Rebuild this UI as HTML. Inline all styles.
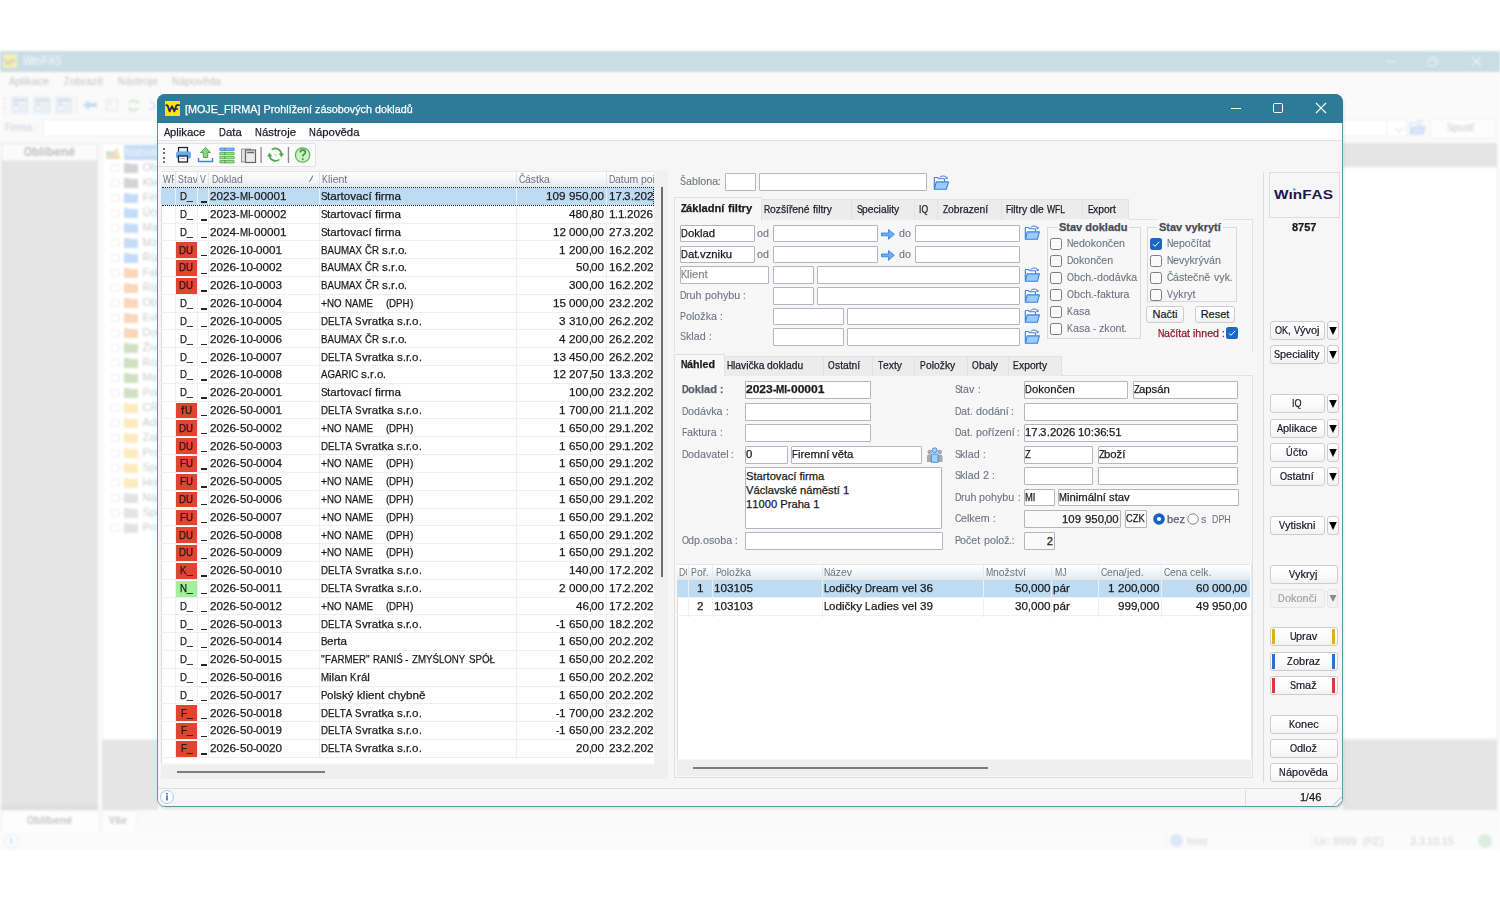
<!DOCTYPE html><html><head><meta charset="utf-8"><style>
*{margin:0;padding:0;box-sizing:content-box}
html,body{width:1500px;height:900px;overflow:hidden;background:#fff}
body{position:relative;font-family:"Liberation Sans",sans-serif;font-size:11.5px;color:#1a1a1a;font-kerning:none}
div{position:absolute}
.t{white-space:nowrap;-webkit-text-stroke:0.25px currentColor}
.inp{-webkit-text-stroke:0.25px currentColor;background:#fff;border:1px solid #b3b6bd;border-radius:1px;white-space:nowrap;overflow:hidden;padding-left:0;font-size:11.2px}
.btn{-webkit-text-stroke:0.2px currentColor;background:linear-gradient(#ffffff,#fbfbfb 60%,#f1f1f1);border:1px solid #cdcdcd;border-radius:3px;text-align:center;white-space:nowrap;color:#15152a}
.lbl{color:#737784}
.bg .t{-webkit-text-stroke:0}
</style></head><body>
<div class="bg" style="left:0;top:0;width:1500px;height:900px;filter:blur(0.8px)">
<div style="left:0px;top:51px;width:1500px;height:799px;background:#fafafa"></div>
<div style="left:0px;top:51px;width:1500px;height:21px;background:#c9dde5"></div>
<div style="left:3px;top:54px;width:14px;height:14px;background:#f6eeb8"></div>
<div style="left:3px;top:54px;width:14px;height:14px"><svg width="14" height="14"><path d="M1.5 5 L3.5 10 L5.5 7 L7 10 L9 5 M8.5 5.5 H12.5 M9.3 7.6 H11.8" stroke="#d9d3b5" stroke-width="1.7" fill="none"/></svg></div>
<div class="t" style="left:22.5px;top:51px;height:21px;line-height:21px;color:#f7fafc;font-size:12px"><span style="display:inline-block;white-space:pre;transform:scaleX(0.843);transform-origin:0 0;margin-right:-0.1478em">W</span><span style="display:inline-block;white-space:pre;transform:scaleX(1.012);transform-origin:0 0;margin-right:0.0097em">in</span><span style="display:inline-block;white-space:pre;transform:scaleX(0.843);transform-origin:0 0;margin-right:-0.3046em">FAS</span></div>
<div style="left:1386px;top:61px;width:10px;height:1px;background:#eef4f7"></div>
<div style="left:1427px;top:56px;width:12px;height:12px"><svg width="12" height="12"><rect x="1.5" y="3.5" width="7" height="7" rx="1.5" fill="none" stroke="#eef4f7"/><path d="M3.5 1.5 H8.5 Q10.5 1.5 10.5 3.5 V8.5" fill="none" stroke="#eef4f7"/></svg></div>
<div style="left:1471px;top:56px;width:11px;height:11px"><svg width="11" height="11"><path d="M1 1 L10 10 M10 1 L1 10" stroke="#eef4f7" stroke-width="1.1"/></svg></div>
<div class="t" style="left:9px;top:72px;height:18px;line-height:18px;color:#c4c4c4;font-size:10.8px"><span style="display:inline-block;white-space:pre;transform:scaleX(0.843);transform-origin:0 0;margin-right:-0.1045em">A</span><span style="display:inline-block;white-space:pre;transform:scaleX(1.012);transform-origin:0 0;margin-right:0.0389em">plikace</span></div>
<div class="t" style="left:64px;top:72px;height:18px;line-height:18px;color:#c4c4c4;font-size:10.8px"><span style="display:inline-block;white-space:pre;transform:scaleX(0.843);transform-origin:0 0;margin-right:-0.0957em">Z</span><span style="display:inline-block;white-space:pre;transform:scaleX(1.012);transform-origin:0 0;margin-right:0.0375em">obrazit</span></div>
<div class="t" style="left:118px;top:72px;height:18px;line-height:18px;color:#c4c4c4;font-size:10.8px"><span style="display:inline-block;white-space:pre;transform:scaleX(0.843);transform-origin:0 0;margin-right:-0.1131em">N</span><span style="display:inline-block;white-space:pre;transform:scaleX(1.012);transform-origin:0 0;margin-right:0.0375em">ástroje</span></div>
<div class="t" style="left:172px;top:72px;height:18px;line-height:18px;color:#c4c4c4;font-size:10.8px"><span style="display:inline-block;white-space:pre;transform:scaleX(0.843);transform-origin:0 0;margin-right:-0.1131em">N</span><span style="display:inline-block;white-space:pre;transform:scaleX(1.012);transform-origin:0 0;margin-right:0.0480em">ápověda</span></div>
<div style="left:4px;top:98.0px;width:1.5px;height:1.5px;background:#e2e2e2"></div>
<div style="left:4px;top:102.5px;width:1.5px;height:1.5px;background:#e2e2e2"></div>
<div style="left:4px;top:107.0px;width:1.5px;height:1.5px;background:#e2e2e2"></div>
<div style="left:4px;top:111.5px;width:1.5px;height:1.5px;background:#e2e2e2"></div>
<div style="left:11px;top:96px;width:18px;height:18px;background:#eaf1f9"></div>
<div style="left:13px;top:99px;width:14px;height:12px"><svg width="14" height="12"><rect x="0.5" y="0.5" width="13" height="11" fill="#f4f7fb" stroke="#e3e6ea"/><rect x="0.5" y="0.5" width="13" height="2" fill="#d7d9dc"/><rect x="2" y="4" width="3" height="3" fill="#c9dcf4"/><rect x="6" y="5" width="6" height="5" fill="#e6edf6"/></svg></div>
<div style="left:33px;top:96px;width:18px;height:18px;background:#eaf1f9"></div>
<div style="left:35px;top:99px;width:14px;height:12px"><svg width="14" height="12"><rect x="0.5" y="0.5" width="13" height="11" fill="#f4f7fb" stroke="#e3e6ea"/><rect x="0.5" y="0.5" width="13" height="2" fill="#d7d9dc"/><rect x="2" y="4" width="3" height="3" fill="#c9dcf4"/><rect x="6" y="5" width="6" height="5" fill="#e6edf6"/></svg></div>
<div style="left:55px;top:96px;width:18px;height:18px;background:#eaf1f9"></div>
<div style="left:57px;top:99px;width:14px;height:12px"><svg width="14" height="12"><rect x="0.5" y="0.5" width="13" height="11" fill="#f4f7fb" stroke="#e3e6ea"/><rect x="0.5" y="0.5" width="13" height="2" fill="#d7d9dc"/><rect x="2" y="4" width="3" height="3" fill="#c9dcf4"/><rect x="6" y="5" width="6" height="5" fill="#e6edf6"/></svg></div>
<div style="left:76px;top:97px;width:1px;height:17px;background:#e6e6e6"></div>
<div style="left:82px;top:99px;width:16px;height:12px"><svg width="16" height="12"><path d="M1 6 L7 1 V4 H15 V8 H7 V11 Z" fill="#c6dcf6"/></svg></div>
<div style="left:105px;top:98px;width:14px;height:14px"><svg width="14" height="14"><rect x="1.5" y="1.5" width="11" height="11" fill="none" stroke="#e6e6e6"/><path d="M4 5 L7 8 M4 5 H6" stroke="#dedede"/></svg></div>
<div style="left:126px;top:98px;width:15px;height:15px"><svg width="15" height="15"><path d="M3 5 A5.5 5.5 0 0 1 12.5 5.5 M12 10 A5.5 5.5 0 0 1 2.5 9.5" fill="none" stroke="#cfe8cc" stroke-width="1.8"/></svg></div>
<div style="left:148px;top:98px;width:10px;height:15px"><svg width="10" height="15"><path d="M2 3 L8 8 M2 12 L8 8" stroke="#cfdff3" stroke-width="1.6"/></svg></div>
<div class="t" style="left:5px;top:118px;height:18px;line-height:18px;color:#c9cdd8;font-size:10.8px"><span style="display:inline-block;white-space:pre;transform:scaleX(0.843);transform-origin:0 0;margin-right:-0.0957em">F</span><span style="display:inline-block;white-space:pre;transform:scaleX(1.012);transform-origin:0 0;margin-right:0.0243em">irma</span><span style="white-space:pre"> </span><span style="display:inline-block;white-space:pre;transform:scaleX(0.897);transform-origin:0 0;margin-right:-0.0287em">:</span></div>
<div style="left:43px;top:119px;width:1362px;height:16px;background:#fff;border:1px solid #eeeeee"></div>
<div style="left:1386px;top:120px;width:18px;height:15px;border-left:1px solid #eeeeee"></div>
<div style="left:1394px;top:124px;width:10px;height:8px"><svg width="10" height="8"><path d="M1 2 L5 6 L9 2" fill="none" stroke="#dcdcdc" stroke-width="1"/></svg></div>
<div style="left:1409px;top:119px;width:17px;height:17px"><svg width="17" height="17"><path d="M1.5 14.5 V4 H5.5 L7 5.5 H12 V8" fill="#fff" stroke="#c9dcf3" stroke-width="1.2"/><path d="M1.5 15 L3.5 8 H16 L14 15 Z" fill="#d6e8fb" stroke="#c2d8f2" stroke-width="1.2"/><path d="M8 3 Q11 0 14 2.5" fill="none" stroke="#c2d8f2"/></svg></div>
<div style="left:1430px;top:118px;width:64px;height:19px;background:#fdfdfd;border:1px solid #f0f0f0;border-radius:3px"></div>
<div class="t" style="left:1447px;top:118px;height:19px;line-height:19px;color:#c9c9c9;font-size:10.8px"><span style="display:inline-block;white-space:pre;transform:scaleX(0.843);transform-origin:0 0;margin-right:-0.1045em">S</span><span style="display:inline-block;white-space:pre;transform:scaleX(1.012);transform-origin:0 0;margin-right:0.0248em">pusť</span></div>
<div style="left:1px;top:143px;width:97px;height:667px;background:#e5e5e5"></div>
<div style="left:1px;top:805px;width:97px;height:4px;background:#dddddd"></div>
<div style="left:2px;top:144px;width:95px;height:16px;background:#fbfbfb;border-bottom:1px solid #efefef"></div>
<div class="t" style="left:1px;top:143px;width:97px;height:18px;line-height:18px;text-align:center;color:#bdbdbd;font-weight:bold;font-size:12.2px"><span style="display:inline-block;white-space:pre;transform:scaleX(0.843);transform-origin:0 0;margin-right:-0.1218em">O</span><span style="display:inline-block;white-space:pre;transform:scaleX(1.012);transform-origin:0 0;margin-right:0.0438em">blíbené</span></div>
<div style="left:102px;top:143px;width:56px;height:595px;background:#fff;border:1px solid #f2f2f2"></div>
<div style="left:102px;top:740px;width:56px;height:70px;background:#e5e5e5"></div>
<div style="left:105px;top:146px;width:18px;height:14px"><svg width="18" height="14"><path d="M1 13 V5 H9 L12 1 L16 13 Z" fill="#f9e6b0"/><rect x="1" y="6" width="9" height="2" fill="#c4dcf2"/><rect x="1" y="8.5" width="9" height="2" fill="#cfe6c9"/><rect x="1" y="11" width="12" height="2" fill="#f7d3b5"/></svg></div>
<div style="left:124px;top:145px;width:34px;height:15px;background:#c5dcf5"></div>
<div class="t" style="left:125px;top:145px;height:15px;line-height:15px;color:#f3f8fd;font-size:11.5px"><span style="display:inline-block;white-space:pre;transform:scaleX(0.843);transform-origin:0 0;margin-right:-0.1131em">N</span><span style="display:inline-block;white-space:pre;transform:scaleX(1.012);transform-origin:0 0;margin-right:0.0375em">abídka</span></div>
<div style="left:110.5px;top:164.0px;width:6px;height:6px;border:1px solid #eeeeee"></div>
<div style="left:118px;top:167.5px;width:5px;height:1px;background:#f0f0f0"></div>
<div style="left:124px;top:162.5px;width:5px;height:2px;background:#d3d3d3"></div>
<div style="left:124px;top:164.0px;width:14px;height:9px;background:#d3d3d3"></div>
<div class="t" style="left:142.5px;top:160.0px;height:15px;line-height:15px;color:#cbcbcb;font-size:11px">Oblíbené</div>
<div style="left:110.5px;top:179.0px;width:6px;height:6px;border:1px solid #eeeeee"></div>
<div style="left:118px;top:182.5px;width:5px;height:1px;background:#f0f0f0"></div>
<div style="left:124px;top:177.5px;width:5px;height:2px;background:#d3d3d3"></div>
<div style="left:124px;top:179.0px;width:14px;height:9px;background:#d3d3d3"></div>
<div class="t" style="left:142.5px;top:175.0px;height:15px;line-height:15px;color:#cbcbcb;font-size:11px">Klienti</div>
<div style="left:110.5px;top:194.0px;width:6px;height:6px;border:1px solid #eeeeee"></div>
<div style="left:118px;top:197.5px;width:5px;height:1px;background:#f0f0f0"></div>
<div style="left:124px;top:192.5px;width:5px;height:2px;background:#c4dcf8"></div>
<div style="left:124px;top:194.0px;width:14px;height:9px;background:#c4dcf8"></div>
<div class="t" style="left:142.5px;top:190.0px;height:15px;line-height:15px;color:#cbcbcb;font-size:11px">Finance</div>
<div style="left:110.5px;top:209.0px;width:6px;height:6px;border:1px solid #eeeeee"></div>
<div style="left:118px;top:212.5px;width:5px;height:1px;background:#f0f0f0"></div>
<div style="left:124px;top:207.5px;width:5px;height:2px;background:#c4dcf8"></div>
<div style="left:124px;top:209.0px;width:14px;height:9px;background:#c4dcf8"></div>
<div class="t" style="left:142.5px;top:205.0px;height:15px;line-height:15px;color:#cbcbcb;font-size:11px">Účetnictví</div>
<div style="left:110.5px;top:224.0px;width:6px;height:6px;border:1px solid #eeeeee"></div>
<div style="left:118px;top:227.5px;width:5px;height:1px;background:#f0f0f0"></div>
<div style="left:124px;top:222.5px;width:5px;height:2px;background:#c4dcf8"></div>
<div style="left:124px;top:224.0px;width:14px;height:9px;background:#c4dcf8"></div>
<div class="t" style="left:142.5px;top:220.0px;height:15px;line-height:15px;color:#cbcbcb;font-size:11px">Majetek</div>
<div style="left:110.5px;top:239.0px;width:6px;height:6px;border:1px solid #eeeeee"></div>
<div style="left:118px;top:242.5px;width:5px;height:1px;background:#f0f0f0"></div>
<div style="left:124px;top:237.5px;width:5px;height:2px;background:#c4dcf8"></div>
<div style="left:124px;top:239.0px;width:14px;height:9px;background:#c4dcf8"></div>
<div class="t" style="left:142.5px;top:235.0px;height:15px;line-height:15px;color:#cbcbcb;font-size:11px">Mzdy</div>
<div style="left:110.5px;top:254.0px;width:6px;height:6px;border:1px solid #eeeeee"></div>
<div style="left:118px;top:257.5px;width:5px;height:1px;background:#f0f0f0"></div>
<div style="left:124px;top:252.5px;width:5px;height:2px;background:#c4dcf8"></div>
<div style="left:124px;top:254.0px;width:14px;height:9px;background:#c4dcf8"></div>
<div class="t" style="left:142.5px;top:250.0px;height:15px;line-height:15px;color:#cbcbcb;font-size:11px">Řízení</div>
<div style="left:110.5px;top:269.0px;width:6px;height:6px;border:1px solid #eeeeee"></div>
<div style="left:118px;top:272.5px;width:5px;height:1px;background:#f0f0f0"></div>
<div style="left:124px;top:267.5px;width:5px;height:2px;background:#fbd6b8"></div>
<div style="left:124px;top:269.0px;width:14px;height:9px;background:#fbd6b8"></div>
<div class="t" style="left:142.5px;top:265.0px;height:15px;line-height:15px;color:#cbcbcb;font-size:11px">Fakturace</div>
<div style="left:110.5px;top:284.0px;width:6px;height:6px;border:1px solid #eeeeee"></div>
<div style="left:118px;top:287.5px;width:5px;height:1px;background:#f0f0f0"></div>
<div style="left:124px;top:282.5px;width:5px;height:2px;background:#fbd6b8"></div>
<div style="left:124px;top:284.0px;width:14px;height:9px;background:#fbd6b8"></div>
<div class="t" style="left:142.5px;top:280.0px;height:15px;line-height:15px;color:#cbcbcb;font-size:11px">Řízení</div>
<div style="left:110.5px;top:299.0px;width:6px;height:6px;border:1px solid #eeeeee"></div>
<div style="left:118px;top:302.5px;width:5px;height:1px;background:#f0f0f0"></div>
<div style="left:124px;top:297.5px;width:5px;height:2px;background:#fbd6b8"></div>
<div style="left:124px;top:299.0px;width:14px;height:9px;background:#fbd6b8"></div>
<div class="t" style="left:142.5px;top:295.0px;height:15px;line-height:15px;color:#cbcbcb;font-size:11px">Obchod</div>
<div style="left:110.5px;top:314.0px;width:6px;height:6px;border:1px solid #eeeeee"></div>
<div style="left:118px;top:317.5px;width:5px;height:1px;background:#f0f0f0"></div>
<div style="left:124px;top:312.5px;width:5px;height:2px;background:#fbd6b8"></div>
<div style="left:124px;top:314.0px;width:14px;height:9px;background:#fbd6b8"></div>
<div class="t" style="left:142.5px;top:310.0px;height:15px;line-height:15px;color:#cbcbcb;font-size:11px">Evidence</div>
<div style="left:110.5px;top:329.0px;width:6px;height:6px;border:1px solid #eeeeee"></div>
<div style="left:118px;top:332.5px;width:5px;height:1px;background:#f0f0f0"></div>
<div style="left:124px;top:327.5px;width:5px;height:2px;background:#fbd6b8"></div>
<div style="left:124px;top:329.0px;width:14px;height:9px;background:#fbd6b8"></div>
<div class="t" style="left:142.5px;top:325.0px;height:15px;line-height:15px;color:#cbcbcb;font-size:11px">Doklady</div>
<div style="left:110.5px;top:344.0px;width:6px;height:6px;border:1px solid #eeeeee"></div>
<div style="left:118px;top:347.5px;width:5px;height:1px;background:#f0f0f0"></div>
<div style="left:124px;top:342.5px;width:5px;height:2px;background:#cfe0bf"></div>
<div style="left:124px;top:344.0px;width:14px;height:9px;background:#cfe0bf"></div>
<div class="t" style="left:142.5px;top:340.0px;height:15px;line-height:15px;color:#cbcbcb;font-size:11px">Živnost</div>
<div style="left:110.5px;top:359.0px;width:6px;height:6px;border:1px solid #eeeeee"></div>
<div style="left:118px;top:362.5px;width:5px;height:1px;background:#f0f0f0"></div>
<div style="left:124px;top:357.5px;width:5px;height:2px;background:#cfe0bf"></div>
<div style="left:124px;top:359.0px;width:14px;height:9px;background:#cfe0bf"></div>
<div class="t" style="left:142.5px;top:355.0px;height:15px;line-height:15px;color:#cbcbcb;font-size:11px">Rozpočet</div>
<div style="left:110.5px;top:374.0px;width:6px;height:6px;border:1px solid #eeeeee"></div>
<div style="left:118px;top:377.5px;width:5px;height:1px;background:#f0f0f0"></div>
<div style="left:124px;top:372.5px;width:5px;height:2px;background:#cfe0bf"></div>
<div style="left:124px;top:374.0px;width:14px;height:9px;background:#cfe0bf"></div>
<div class="t" style="left:142.5px;top:370.0px;height:15px;line-height:15px;color:#cbcbcb;font-size:11px">Mezisklad</div>
<div style="left:110.5px;top:389.0px;width:6px;height:6px;border:1px solid #eeeeee"></div>
<div style="left:118px;top:392.5px;width:5px;height:1px;background:#f0f0f0"></div>
<div style="left:124px;top:387.5px;width:5px;height:2px;background:#cfe0bf"></div>
<div style="left:124px;top:389.0px;width:14px;height:9px;background:#cfe0bf"></div>
<div class="t" style="left:142.5px;top:385.0px;height:15px;line-height:15px;color:#cbcbcb;font-size:11px">Pokladna</div>
<div style="left:110.5px;top:404.0px;width:6px;height:6px;border:1px solid #eeeeee"></div>
<div style="left:118px;top:407.5px;width:5px;height:1px;background:#f0f0f0"></div>
<div style="left:124px;top:402.5px;width:5px;height:2px;background:#fcebbd"></div>
<div style="left:124px;top:404.0px;width:14px;height:9px;background:#fcebbd"></div>
<div class="t" style="left:142.5px;top:400.0px;height:15px;line-height:15px;color:#cbcbcb;font-size:11px">CRM</div>
<div style="left:110.5px;top:419.0px;width:6px;height:6px;border:1px solid #eeeeee"></div>
<div style="left:118px;top:422.5px;width:5px;height:1px;background:#f0f0f0"></div>
<div style="left:124px;top:417.5px;width:5px;height:2px;background:#fcebbd"></div>
<div style="left:124px;top:419.0px;width:14px;height:9px;background:#fcebbd"></div>
<div class="t" style="left:142.5px;top:415.0px;height:15px;line-height:15px;color:#cbcbcb;font-size:11px">Adresář</div>
<div style="left:110.5px;top:434.0px;width:6px;height:6px;border:1px solid #eeeeee"></div>
<div style="left:118px;top:437.5px;width:5px;height:1px;background:#f0f0f0"></div>
<div style="left:124px;top:432.5px;width:5px;height:2px;background:#fcebbd"></div>
<div style="left:124px;top:434.0px;width:14px;height:9px;background:#fcebbd"></div>
<div class="t" style="left:142.5px;top:430.0px;height:15px;line-height:15px;color:#cbcbcb;font-size:11px">Zakázky</div>
<div style="left:110.5px;top:449.0px;width:6px;height:6px;border:1px solid #eeeeee"></div>
<div style="left:118px;top:452.5px;width:5px;height:1px;background:#f0f0f0"></div>
<div style="left:124px;top:447.5px;width:5px;height:2px;background:#fcebbd"></div>
<div style="left:124px;top:449.0px;width:14px;height:9px;background:#fcebbd"></div>
<div class="t" style="left:142.5px;top:445.0px;height:15px;line-height:15px;color:#cbcbcb;font-size:11px">Projekty</div>
<div style="left:110.5px;top:464.0px;width:6px;height:6px;border:1px solid #eeeeee"></div>
<div style="left:118px;top:467.5px;width:5px;height:1px;background:#f0f0f0"></div>
<div style="left:124px;top:462.5px;width:5px;height:2px;background:#fcebbd"></div>
<div style="left:124px;top:464.0px;width:14px;height:9px;background:#fcebbd"></div>
<div class="t" style="left:142.5px;top:460.0px;height:15px;line-height:15px;color:#cbcbcb;font-size:11px">Speciality</div>
<div style="left:110.5px;top:479.0px;width:6px;height:6px;border:1px solid #eeeeee"></div>
<div style="left:118px;top:482.5px;width:5px;height:1px;background:#f0f0f0"></div>
<div style="left:124px;top:477.5px;width:5px;height:2px;background:#fcebbd"></div>
<div style="left:124px;top:479.0px;width:14px;height:9px;background:#fcebbd"></div>
<div class="t" style="left:142.5px;top:475.0px;height:15px;line-height:15px;color:#cbcbcb;font-size:11px">Holding</div>
<div style="left:110.5px;top:494.0px;width:6px;height:6px;border:1px solid #eeeeee"></div>
<div style="left:118px;top:497.5px;width:5px;height:1px;background:#f0f0f0"></div>
<div style="left:124px;top:492.5px;width:5px;height:2px;background:#e3e3e3"></div>
<div style="left:124px;top:494.0px;width:14px;height:9px;background:#e3e3e3"></div>
<div class="t" style="left:142.5px;top:490.0px;height:15px;line-height:15px;color:#cbcbcb;font-size:11px">Nástroje</div>
<div style="left:110.5px;top:509.0px;width:6px;height:6px;border:1px solid #eeeeee"></div>
<div style="left:118px;top:512.5px;width:5px;height:1px;background:#f0f0f0"></div>
<div style="left:124px;top:507.5px;width:5px;height:2px;background:#e3e3e3"></div>
<div style="left:124px;top:509.0px;width:14px;height:9px;background:#e3e3e3"></div>
<div class="t" style="left:142.5px;top:505.0px;height:15px;line-height:15px;color:#cbcbcb;font-size:11px">Správa</div>
<div style="left:110.5px;top:524.0px;width:6px;height:6px;border:1px solid #eeeeee"></div>
<div style="left:118px;top:527.5px;width:5px;height:1px;background:#f0f0f0"></div>
<div style="left:124px;top:522.5px;width:5px;height:2px;background:#e3e3e3"></div>
<div style="left:124px;top:524.0px;width:14px;height:9px;background:#e3e3e3"></div>
<div class="t" style="left:142.5px;top:520.0px;height:15px;line-height:15px;color:#cbcbcb;font-size:11px">Program</div>
<div style="left:1343px;top:143px;width:154px;height:24px;background:#e4e4e4"></div>
<div style="left:1343px;top:168px;width:154px;height:570px;background:#fff;border-right:1px solid #efefef;border-bottom:1px solid #efefef"></div>
<div style="left:1343px;top:740px;width:154px;height:70px;background:#e4e4e4"></div>
<div style="left:1px;top:810px;width:97px;height:21px;background:#fdfdfd;border:1px solid #efefef"></div>
<div class="t" style="left:1px;top:810px;width:97px;height:20px;line-height:20px;text-align:center;color:#c6c6c6;font-weight:bold;font-size:10.8px"><span style="display:inline-block;white-space:pre;transform:scaleX(0.843);transform-origin:0 0;margin-right:-0.1218em">O</span><span style="display:inline-block;white-space:pre;transform:scaleX(1.012);transform-origin:0 0;margin-right:0.0438em">blíbené</span></div>
<div style="left:102px;top:810px;width:33px;height:21px;background:#fdfdfd;border:1px solid #f3f3f3"></div>
<div class="t" style="left:102px;top:810px;width:33px;height:20px;line-height:20px;text-align:center;color:#c6c6c6;font-weight:bold;font-size:10.8px"><span style="display:inline-block;white-space:pre;transform:scaleX(0.843);transform-origin:0 0;margin-right:-0.1045em">V</span><span style="display:inline-block;white-space:pre;transform:scaleX(1.012);transform-origin:0 0;margin-right:0.0139em">še</span></div>
<div style="left:0px;top:832px;width:1500px;height:18px;background:#fbfbfb"></div>
<div style="left:4px;top:834px;width:13px;height:13px;border:1px solid #e6eef9;border-radius:50%"></div>
<div style="left:10px;top:838px;width:2px;height:6px;background:#d6e2f3"></div>
<div style="left:1170px;top:834px;width:13px;height:13px;background:#dbe8f8;border-radius:50%"></div>
<div class="t" style="left:1187px;top:832px;height:18px;line-height:18px;color:#cfd3db;font-size:10.5px"><span style="display:inline-block;white-space:pre;transform:scaleX(1.012);transform-origin:0 0;margin-right:0.0236em">host</span></div>
<div style="left:1166px;top:833px;width:1px;height:17px;background:#f0f0f0"></div>
<div style="left:1311px;top:833px;width:1px;height:17px;background:#f0f0f0"></div>
<div class="t" style="left:1315px;top:832px;height:18px;line-height:18px;color:#d3d3d3;font-size:10.5px"><span style="display:inline-block;white-space:pre;transform:scaleX(0.843);transform-origin:0 0;margin-right:-0.0871em">L</span><span style="display:inline-block;white-space:pre;transform:scaleX(1.012);transform-origin:0 0;margin-right:0.0090em">ic</span><span style="display:inline-block;white-space:pre;transform:scaleX(0.897);transform-origin:0 0;margin-right:-0.0287em">:</span><span style="white-space:pre"> </span><span style="display:inline-block;white-space:pre;transform:scaleX(1.018);transform-origin:0 0;margin-right:0.0405em">9999</span><span style="white-space:pre">  </span><span style="display:inline-block;white-space:pre;transform:scaleX(0.897);transform-origin:0 0;margin-right:-0.0344em">(</span><span style="display:inline-block;white-space:pre;transform:scaleX(0.843);transform-origin:0 0;margin-right:-0.1045em">P</span><span style="display:inline-block;white-space:pre;transform:scaleX(0.897);transform-origin:0 0;margin-right:-0.0287em">/</span><span style="display:inline-block;white-space:pre;transform:scaleX(0.843);transform-origin:0 0;margin-right:-0.0957em">Z</span><span style="display:inline-block;white-space:pre;transform:scaleX(0.897);transform-origin:0 0;margin-right:-0.0344em">)</span></div>
<div class="t" style="left:1410px;top:832px;height:18px;line-height:18px;color:#d3d3d3;font-size:10.5px"><span style="display:inline-block;white-space:pre;transform:scaleX(1.018);transform-origin:0 0;margin-right:0.0101em">3</span><span style="display:inline-block;white-space:pre;transform:scaleX(0.897);transform-origin:0 0;margin-right:-0.0287em">.</span><span style="display:inline-block;white-space:pre;transform:scaleX(1.018);transform-origin:0 0;margin-right:0.0101em">3</span><span style="display:inline-block;white-space:pre;transform:scaleX(0.897);transform-origin:0 0;margin-right:-0.0287em">.</span><span style="display:inline-block;white-space:pre;transform:scaleX(1.018);transform-origin:0 0;margin-right:0.0202em">10</span><span style="display:inline-block;white-space:pre;transform:scaleX(0.897);transform-origin:0 0;margin-right:-0.0287em">.</span><span style="display:inline-block;white-space:pre;transform:scaleX(1.018);transform-origin:0 0;margin-right:0.0202em">15</span></div>
<div style="left:1478px;top:834px;width:14px;height:14px;background:#dceee3;border-radius:50%"></div>
</div>
<div style="left:157px;top:94px;width:1183.5px;height:711px;background:#f6f6f6;border:1.3px solid #5d97ae;border-radius:8px;box-shadow:1px 2px 3px rgba(0,0,0,0.10)"></div>
<div style="left:157px;top:94px;width:1186px;height:29px;background:#2e7b99;border-radius:8px 8px 0 0"></div>
<div style="left:165px;top:101px;width:15px;height:15px;background:#fde312"><svg width="15" height="15" viewBox="0 0 15 15"><path d="M1.3 4.3 Q2.2 3.8 2.8 5 L4.6 10.4 L7 5.2 L9.3 10.4 L11.2 4.8 Q11.5 4.2 12.3 4.2 H14" stroke="#2b2450" stroke-width="1.8" fill="none" stroke-linejoin="round" stroke-linecap="round"/><path d="M10.6 7.9 H12.6" stroke="#2b2450" stroke-width="1.5" stroke-linecap="round"/></svg></div>
<div class="t" style="left:185px;top:94.8px;height:27px;line-height:27px;color:#fff;font-size:11.6px"><span style="display:inline-block;transform:scaleX(0.930);transform-origin:0 0">[MOJE_FIRMA] Prohlížení zásobových dokladů</span></div>
<div style="left:1231px;top:108px;width:10px;height:1px;background:#fff"></div>
<div style="left:1273px;top:103px;width:8px;height:8px;border:1px solid #fff;border-radius:1.5px"></div>
<div style="left:1315px;top:102px;width:12px;height:12px"><svg width="12" height="12"><path d="M1 1 L11 11 M11 1 L1 11" stroke="#fff" stroke-width="1.1"/></svg></div>
<div style="left:158px;top:123px;width:1184px;height:17px;background:#fff;border-bottom:1px solid #e4e4e4"></div>
<div class="t" style="left:164px;top:123px;height:18px;line-height:18px;color:#1c1c2c;font-size:11.2px"><span style="display:inline-block;white-space:pre;transform:scaleX(0.843);transform-origin:0 0;margin-right:-0.1045em">A</span><span style="display:inline-block;white-space:pre;transform:scaleX(1.012);transform-origin:0 0;margin-right:0.0389em">plikace</span></div>
<div class="t" style="left:219px;top:123px;height:18px;line-height:18px;color:#1c1c2c;font-size:11.2px"><span style="display:inline-block;white-space:pre;transform:scaleX(0.843);transform-origin:0 0;margin-right:-0.1131em">D</span><span style="display:inline-block;white-space:pre;transform:scaleX(1.012);transform-origin:0 0;margin-right:0.0174em">ata</span></div>
<div class="t" style="left:255px;top:123px;height:18px;line-height:18px;color:#1c1c2c;font-size:11.2px"><span style="display:inline-block;white-space:pre;transform:scaleX(0.843);transform-origin:0 0;margin-right:-0.1131em">N</span><span style="display:inline-block;white-space:pre;transform:scaleX(1.012);transform-origin:0 0;margin-right:0.0375em">ástroje</span></div>
<div class="t" style="left:309px;top:123px;height:18px;line-height:18px;color:#1c1c2c;font-size:11.2px"><span style="display:inline-block;white-space:pre;transform:scaleX(0.843);transform-origin:0 0;margin-right:-0.1131em">N</span><span style="display:inline-block;white-space:pre;transform:scaleX(1.012);transform-origin:0 0;margin-right:0.0480em">ápověda</span></div>
<div style="left:158px;top:143px;width:157px;height:22px;background:#fbfbfb;border:1px solid #e2e2e2;border-radius:0 3px 3px 0;border-left:none"></div>
<div style="left:162.5px;top:147.5px;width:2px;height:2px;background:#6f6f6f"></div>
<div style="left:162.5px;top:152px;width:2px;height:2px;background:#6f6f6f"></div>
<div style="left:162.5px;top:156.5px;width:2px;height:2px;background:#6f6f6f"></div>
<div style="left:162.5px;top:161px;width:2px;height:2px;background:#6f6f6f"></div>
<div style="left:175px;top:146px;width:140px;height:18px"><svg width="140" height="18" viewBox="0 0 140 18">
<rect x="3.5" y="1.5" width="9" height="5" fill="#dff0ff" stroke="#222" stroke-width="1.2"/>
<rect x="1" y="5.5" width="15" height="7" rx="2" fill="#6aaaf0"/>
<rect x="3.5" y="10" width="9" height="6" fill="#fff" stroke="#222" stroke-width="1.3"/>
<path d="M5 12.5 H10" stroke="#8cc4f4" stroke-width="1"/>
<path d="M30.5 1.5 L25.5 6.5 H28.3 V11.5 H32.7 V6.5 H35.5 Z" fill="#8fd08a" stroke="#4caa47" stroke-width="1"/>
<path d="M23.5 12 V15.5 H37.5 V12" fill="none" stroke="#3b86e0" stroke-width="1.4"/>
<rect x="44.8" y="2.1" width="14.4" height="2.4" rx="0.4" fill="#86baf4" stroke="#3f83e0" stroke-width="0.8"/>
<rect x="44.8" y="6.3" width="14.4" height="2.4" rx="0.4" fill="#a3dc9b" stroke="#4ba644" stroke-width="0.8"/>
<rect x="44.8" y="10.4" width="14.4" height="2.4" rx="0.4" fill="#a3dc9b" stroke="#4ba644" stroke-width="0.8"/>
<rect x="44.8" y="14.5" width="14.4" height="2.4" rx="0.4" fill="#a3dc9b" stroke="#4ba644" stroke-width="0.8"/>
<path d="M49.8 2.1 V4.5 M49.8 6.3 V8.7 M49.8 10.4 V12.8 M49.8 14.5 V16.9" stroke="#3b7a36" stroke-width="0.7"/>
<rect x="66.5" y="3" width="9" height="13" fill="#e0e0e0" stroke="#999" stroke-width="1"/>
<rect x="70.5" y="4" width="10" height="12.5" fill="#ececec" stroke="#666" stroke-width="1.2"/>
<path d="M72 6.5 H79" stroke="#666" stroke-width="1.5"/>
<rect x="85.4" y="1" width="1.3" height="16" fill="#8a8a8a"/>
<path d="M97.4 3.3 A6 6 0 0 1 106.4 8.2" fill="none" stroke="#52a84c" stroke-width="1.7" stroke-linecap="round"/>
<path d="M103.8 13.9 A6 6 0 0 1 94.6 9.8" fill="none" stroke="#52a84c" stroke-width="1.7" stroke-linecap="round"/>
<path d="M103.7 7.6 H109.1 L106.4 11.2 Z M91.9 10.4 H97.3 L94.6 6.8 Z" fill="#52a84c"/>
<circle cx="100.6" cy="9" r="1.6" fill="#c6eec1"/>
<rect x="112.8" y="1" width="1.3" height="16" fill="#8a8a8a"/>
<circle cx="127.6" cy="9" r="7.2" fill="#cdf0c8" stroke="#5cae56" stroke-width="1.2"/>
<path d="M125.2 6.6 Q125.2 4 127.7 4 Q130.3 4 130.3 6.3 Q130.3 7.6 128.9 8.4 Q127.8 9 127.8 10.6" fill="none" stroke="#4b9e45" stroke-width="1.8"/><circle cx="127.8" cy="13" r="1.1" fill="#4b9e45"/>
</svg></div>
<div style="left:161px;top:171px;width:493px;height:592px;background:#fff;border-left:1px solid #dcdcdc"></div>
<div style="left:654px;top:171px;width:14px;height:594px;background:#f0f0f0"></div>
<div style="left:661px;top:187px;width:2px;height:390px;background:#6e6e6e"></div>
<div style="left:161px;top:171px;width:493px;height:17px;background:linear-gradient(#ffffff,#f6f7f9 40%,#dfe5eb);border-top:1px solid #e6e6e6"></div>
<div style="left:174.7px;top:172px;width:1px;height:16px;background:#e3e5e8"></div>
<div style="left:197.3px;top:172px;width:1px;height:16px;background:#e3e5e8"></div>
<div style="left:208.4px;top:172px;width:1px;height:16px;background:#e3e5e8"></div>
<div style="left:319px;top:172px;width:1px;height:16px;background:#e3e5e8"></div>
<div style="left:516px;top:172px;width:1px;height:16px;background:#e3e5e8"></div>
<div style="left:605.5px;top:172px;width:1px;height:16px;background:#e3e5e8"></div>
<div style="left:161px;top:172px;width:13.199999999999989px;height:16px;overflow:hidden"><div class="t" style="left:2px;top:0;height:16px;line-height:16px;color:#70737c;font-size:10.3px;-webkit-text-stroke:0"><span style="display:inline-block;white-space:pre;transform:scaleX(0.843);transform-origin:0 0;margin-right:-0.2435em">WF</span></div></div>
<div style="left:174.7px;top:172px;width:22.100000000000023px;height:16px;overflow:hidden"><div class="t" style="left:3.8000000000000114px;top:0;height:16px;line-height:16px;color:#70737c;font-size:10.3px;-webkit-text-stroke:0"><span style="display:inline-block;white-space:pre;transform:scaleX(0.843);transform-origin:0 0;margin-right:-0.1045em">S</span><span style="display:inline-block;white-space:pre;transform:scaleX(1.012);transform-origin:0 0;margin-right:0.0167em">tav</span></div></div>
<div style="left:197.3px;top:172px;width:10.599999999999994px;height:16px;overflow:hidden"><div class="t" style="left:3.1999999999999886px;top:0;height:16px;line-height:16px;color:#70737c;font-size:10.3px;-webkit-text-stroke:0"><span style="display:inline-block;white-space:pre;transform:scaleX(0.843);transform-origin:0 0;margin-right:-0.1045em">V</span></div></div>
<div style="left:208.4px;top:172px;width:110.1px;height:16px;overflow:hidden"><div class="t" style="left:3.5999999999999943px;top:0;height:16px;line-height:16px;color:#70737c;font-size:10.3px;-webkit-text-stroke:0"><span style="display:inline-block;white-space:pre;transform:scaleX(0.843);transform-origin:0 0;margin-right:-0.1131em">D</span><span style="display:inline-block;white-space:pre;transform:scaleX(1.012);transform-origin:0 0;margin-right:0.0299em">oklad</span></div></div>
<div style="left:319px;top:172px;width:196.5px;height:16px;overflow:hidden"><div class="t" style="left:3px;top:0;height:16px;line-height:16px;color:#70737c;font-size:10.3px;-webkit-text-stroke:0"><span style="display:inline-block;white-space:pre;transform:scaleX(0.843);transform-origin:0 0;margin-right:-0.1045em">K</span><span style="display:inline-block;white-space:pre;transform:scaleX(1.012);transform-origin:0 0;margin-right:0.0229em">lient</span></div></div>
<div style="left:516px;top:172px;width:89.0px;height:16px;overflow:hidden"><div class="t" style="left:3px;top:0;height:16px;line-height:16px;color:#70737c;font-size:10.3px;-webkit-text-stroke:0"><span style="display:inline-block;white-space:pre;transform:scaleX(0.843);transform-origin:0 0;margin-right:-0.1131em">Č</span><span style="display:inline-block;white-space:pre;transform:scaleX(1.012);transform-origin:0 0;margin-right:0.0299em">ástka</span></div></div>
<div style="left:605.5px;top:172px;width:48.0px;height:16px;overflow:hidden"><div class="t" style="left:3.0px;top:0;height:16px;line-height:16px;color:#70737c;font-size:10.3px;-webkit-text-stroke:0"><span style="display:inline-block;white-space:pre;transform:scaleX(0.843);transform-origin:0 0;margin-right:-0.1131em">D</span><span style="display:inline-block;white-space:pre;transform:scaleX(1.012);transform-origin:0 0;margin-right:0.0278em">atum</span><span style="white-space:pre"> </span><span style="display:inline-block;white-space:pre;transform:scaleX(1.012);transform-origin:0 0;margin-right:0.0452em">pořízení</span></div></div>
<div style="left:308px;top:174px;width:10px;height:10px"><svg width="10" height="10"><path d="M1.5 8 L5 1.5" stroke="#777" stroke-width="1.1"/><path d="M5 1.5 L8.5 8 H2" fill="none" stroke="#ffffff" stroke-width="1"/></svg></div>
<div style="left:161px;top:188.0px;width:493px;height:17.806px;background:#bddcf3"></div>
<div style="left:161px;top:204.806px;width:493px;height:1px;background:#efefef"></div>
<div style="left:161px;top:222.61200000000002px;width:493px;height:1px;background:#efefef"></div>
<div style="left:161px;top:240.418px;width:493px;height:1px;background:#efefef"></div>
<div style="left:161px;top:258.224px;width:493px;height:1px;background:#efefef"></div>
<div style="left:161px;top:276.03px;width:493px;height:1px;background:#efefef"></div>
<div style="left:161px;top:293.83599999999996px;width:493px;height:1px;background:#efefef"></div>
<div style="left:161px;top:311.642px;width:493px;height:1px;background:#efefef"></div>
<div style="left:161px;top:329.448px;width:493px;height:1px;background:#efefef"></div>
<div style="left:161px;top:347.25399999999996px;width:493px;height:1px;background:#efefef"></div>
<div style="left:161px;top:365.06px;width:493px;height:1px;background:#efefef"></div>
<div style="left:161px;top:382.866px;width:493px;height:1px;background:#efefef"></div>
<div style="left:161px;top:400.67199999999997px;width:493px;height:1px;background:#efefef"></div>
<div style="left:161px;top:418.478px;width:493px;height:1px;background:#efefef"></div>
<div style="left:161px;top:436.284px;width:493px;height:1px;background:#efefef"></div>
<div style="left:161px;top:454.09px;width:493px;height:1px;background:#efefef"></div>
<div style="left:161px;top:471.896px;width:493px;height:1px;background:#efefef"></div>
<div style="left:161px;top:489.702px;width:493px;height:1px;background:#efefef"></div>
<div style="left:161px;top:507.508px;width:493px;height:1px;background:#efefef"></div>
<div style="left:161px;top:525.3140000000001px;width:493px;height:1px;background:#efefef"></div>
<div style="left:161px;top:543.1200000000001px;width:493px;height:1px;background:#efefef"></div>
<div style="left:161px;top:560.926px;width:493px;height:1px;background:#efefef"></div>
<div style="left:161px;top:578.7320000000001px;width:493px;height:1px;background:#efefef"></div>
<div style="left:161px;top:596.538px;width:493px;height:1px;background:#efefef"></div>
<div style="left:161px;top:614.344px;width:493px;height:1px;background:#efefef"></div>
<div style="left:161px;top:632.1500000000001px;width:493px;height:1px;background:#efefef"></div>
<div style="left:161px;top:649.9560000000001px;width:493px;height:1px;background:#efefef"></div>
<div style="left:161px;top:667.7620000000001px;width:493px;height:1px;background:#efefef"></div>
<div style="left:161px;top:685.568px;width:493px;height:1px;background:#efefef"></div>
<div style="left:161px;top:703.374px;width:493px;height:1px;background:#efefef"></div>
<div style="left:161px;top:721.1800000000001px;width:493px;height:1px;background:#efefef"></div>
<div style="left:161px;top:738.9860000000001px;width:493px;height:1px;background:#efefef"></div>
<div style="left:161px;top:756.792px;width:493px;height:1px;background:#efefef"></div>
<div style="left:174.7px;top:188px;width:1px;height:569.792px;background:#efefef"></div>
<div style="left:197.3px;top:188px;width:1px;height:569.792px;background:#efefef"></div>
<div style="left:208.4px;top:188px;width:1px;height:569.792px;background:#efefef"></div>
<div style="left:319px;top:188px;width:1px;height:569.792px;background:#efefef"></div>
<div style="left:516px;top:188px;width:1px;height:569.792px;background:#efefef"></div>
<div style="left:605.5px;top:188px;width:1px;height:569.792px;background:#efefef"></div>
<div class="t" style="left:176px;top:188.25px;width:21px;height:17.806px;line-height:17.806px;text-align:center"><span style="display:inline-block;white-space:pre;transform:scaleX(0.843);transform-origin:0 0;margin-right:-0.1131em">D</span><span style="display:inline-block;white-space:pre;transform:scaleX(0.897);transform-origin:0 0;margin-right:-0.0575em">_</span></div>
<div style="left:200.5px;top:201.4px;width:6.3px;height:1.3px;background:#262626"></div>
<div class="t" style="left:210px;top:188.25px;height:17.806px;line-height:17.806px;"><span style="display:inline-block;white-space:pre;transform:scaleX(1.018);transform-origin:0 0;margin-right:0.0405em">2023</span><span style="display:inline-block;white-space:pre;transform:scaleX(0.897);transform-origin:0 0;margin-right:-0.0344em">-</span><span style="display:inline-block;white-space:pre;transform:scaleX(0.843);transform-origin:0 0;margin-right:-0.1740em">MI</span><span style="display:inline-block;white-space:pre;transform:scaleX(0.897);transform-origin:0 0;margin-right:-0.0344em">-</span><span style="display:inline-block;white-space:pre;transform:scaleX(1.018);transform-origin:0 0;margin-right:0.0506em">00001</span></div>
<div class="t" style="left:321px;top:188.25px;width:194px;height:17.806px;line-height:17.806px;overflow:hidden"><span style="display:inline-block;white-space:pre;transform:scaleX(0.843);transform-origin:0 0;margin-right:-0.1045em">S</span><span style="display:inline-block;white-space:pre;transform:scaleX(1.012);transform-origin:0 0;margin-right:0.0479em">tartovací</span><span style="white-space:pre"> </span><span style="display:inline-block;white-space:pre;transform:scaleX(1.012);transform-origin:0 0;margin-right:0.0278em">firma</span></div>
<div class="t" style="right:895.5px;top:188.25px;height:17.806px;line-height:17.806px;text-align:right;"><span style="display:inline-block;white-space:pre;transform:scaleX(1.018);transform-origin:0 0;margin-right:0.0304em">109</span><span style="white-space:pre"> </span><span style="display:inline-block;white-space:pre;transform:scaleX(1.018);transform-origin:0 0;margin-right:0.0304em">950</span><span style="display:inline-block;white-space:pre;transform:scaleX(0.897);transform-origin:0 0;margin-right:-0.0287em">,</span><span style="display:inline-block;white-space:pre;transform:scaleX(1.018);transform-origin:0 0;margin-right:0.0202em">00</span></div>
<div class="t" style="left:608.5px;top:188.25px;width:45.5px;height:17.806px;line-height:17.806px;overflow:hidden"><span style="display:inline-block;white-space:pre;transform:scaleX(1.018);transform-origin:0 0;margin-right:0.0202em">17</span><span style="display:inline-block;white-space:pre;transform:scaleX(0.897);transform-origin:0 0;margin-right:-0.0287em">.</span><span style="display:inline-block;white-space:pre;transform:scaleX(1.018);transform-origin:0 0;margin-right:0.0101em">3</span><span style="display:inline-block;white-space:pre;transform:scaleX(0.897);transform-origin:0 0;margin-right:-0.0287em">.</span><span style="display:inline-block;white-space:pre;transform:scaleX(1.018);transform-origin:0 0;margin-right:0.0304em">202</span></div>
<div class="t" style="left:176px;top:206.056px;width:21px;height:17.806px;line-height:17.806px;text-align:center"><span style="display:inline-block;white-space:pre;transform:scaleX(0.843);transform-origin:0 0;margin-right:-0.1131em">D</span><span style="display:inline-block;white-space:pre;transform:scaleX(0.897);transform-origin:0 0;margin-right:-0.0575em">_</span></div>
<div style="left:200.5px;top:219.20600000000002px;width:6.3px;height:1.3px;background:#262626"></div>
<div class="t" style="left:210px;top:206.056px;height:17.806px;line-height:17.806px;"><span style="display:inline-block;white-space:pre;transform:scaleX(1.018);transform-origin:0 0;margin-right:0.0405em">2023</span><span style="display:inline-block;white-space:pre;transform:scaleX(0.897);transform-origin:0 0;margin-right:-0.0344em">-</span><span style="display:inline-block;white-space:pre;transform:scaleX(0.843);transform-origin:0 0;margin-right:-0.1740em">MI</span><span style="display:inline-block;white-space:pre;transform:scaleX(0.897);transform-origin:0 0;margin-right:-0.0344em">-</span><span style="display:inline-block;white-space:pre;transform:scaleX(1.018);transform-origin:0 0;margin-right:0.0506em">00002</span></div>
<div class="t" style="left:321px;top:206.056px;width:194px;height:17.806px;line-height:17.806px;overflow:hidden"><span style="display:inline-block;white-space:pre;transform:scaleX(0.843);transform-origin:0 0;margin-right:-0.1045em">S</span><span style="display:inline-block;white-space:pre;transform:scaleX(1.012);transform-origin:0 0;margin-right:0.0479em">tartovací</span><span style="white-space:pre"> </span><span style="display:inline-block;white-space:pre;transform:scaleX(1.012);transform-origin:0 0;margin-right:0.0278em">firma</span></div>
<div class="t" style="right:895.5px;top:206.056px;height:17.806px;line-height:17.806px;text-align:right;"><span style="display:inline-block;white-space:pre;transform:scaleX(1.018);transform-origin:0 0;margin-right:0.0304em">480</span><span style="display:inline-block;white-space:pre;transform:scaleX(0.897);transform-origin:0 0;margin-right:-0.0287em">,</span><span style="display:inline-block;white-space:pre;transform:scaleX(1.018);transform-origin:0 0;margin-right:0.0202em">80</span></div>
<div class="t" style="left:608.5px;top:206.056px;width:45.5px;height:17.806px;line-height:17.806px;overflow:hidden"><span style="display:inline-block;white-space:pre;transform:scaleX(1.018);transform-origin:0 0;margin-right:0.0101em">1</span><span style="display:inline-block;white-space:pre;transform:scaleX(0.897);transform-origin:0 0;margin-right:-0.0287em">.</span><span style="display:inline-block;white-space:pre;transform:scaleX(1.018);transform-origin:0 0;margin-right:0.0101em">1</span><span style="display:inline-block;white-space:pre;transform:scaleX(0.897);transform-origin:0 0;margin-right:-0.0287em">.</span><span style="display:inline-block;white-space:pre;transform:scaleX(1.018);transform-origin:0 0;margin-right:0.0405em">2026</span></div>
<div class="t" style="left:176px;top:223.862px;width:21px;height:17.806px;line-height:17.806px;text-align:center"><span style="display:inline-block;white-space:pre;transform:scaleX(0.843);transform-origin:0 0;margin-right:-0.1131em">D</span><span style="display:inline-block;white-space:pre;transform:scaleX(0.897);transform-origin:0 0;margin-right:-0.0575em">_</span></div>
<div style="left:200.5px;top:237.012px;width:6.3px;height:1.3px;background:#262626"></div>
<div class="t" style="left:210px;top:223.862px;height:17.806px;line-height:17.806px;"><span style="display:inline-block;white-space:pre;transform:scaleX(1.018);transform-origin:0 0;margin-right:0.0405em">2024</span><span style="display:inline-block;white-space:pre;transform:scaleX(0.897);transform-origin:0 0;margin-right:-0.0344em">-</span><span style="display:inline-block;white-space:pre;transform:scaleX(0.843);transform-origin:0 0;margin-right:-0.1740em">MI</span><span style="display:inline-block;white-space:pre;transform:scaleX(0.897);transform-origin:0 0;margin-right:-0.0344em">-</span><span style="display:inline-block;white-space:pre;transform:scaleX(1.018);transform-origin:0 0;margin-right:0.0506em">00001</span></div>
<div class="t" style="left:321px;top:223.862px;width:194px;height:17.806px;line-height:17.806px;overflow:hidden"><span style="display:inline-block;white-space:pre;transform:scaleX(0.843);transform-origin:0 0;margin-right:-0.1045em">S</span><span style="display:inline-block;white-space:pre;transform:scaleX(1.012);transform-origin:0 0;margin-right:0.0479em">tartovací</span><span style="white-space:pre"> </span><span style="display:inline-block;white-space:pre;transform:scaleX(1.012);transform-origin:0 0;margin-right:0.0278em">firma</span></div>
<div class="t" style="right:895.5px;top:223.862px;height:17.806px;line-height:17.806px;text-align:right;"><span style="display:inline-block;white-space:pre;transform:scaleX(1.018);transform-origin:0 0;margin-right:0.0202em">12</span><span style="white-space:pre"> </span><span style="display:inline-block;white-space:pre;transform:scaleX(1.018);transform-origin:0 0;margin-right:0.0304em">000</span><span style="display:inline-block;white-space:pre;transform:scaleX(0.897);transform-origin:0 0;margin-right:-0.0287em">,</span><span style="display:inline-block;white-space:pre;transform:scaleX(1.018);transform-origin:0 0;margin-right:0.0202em">00</span></div>
<div class="t" style="left:608.5px;top:223.862px;width:45.5px;height:17.806px;line-height:17.806px;overflow:hidden"><span style="display:inline-block;white-space:pre;transform:scaleX(1.018);transform-origin:0 0;margin-right:0.0202em">27</span><span style="display:inline-block;white-space:pre;transform:scaleX(0.897);transform-origin:0 0;margin-right:-0.0287em">.</span><span style="display:inline-block;white-space:pre;transform:scaleX(1.018);transform-origin:0 0;margin-right:0.0101em">3</span><span style="display:inline-block;white-space:pre;transform:scaleX(0.897);transform-origin:0 0;margin-right:-0.0287em">.</span><span style="display:inline-block;white-space:pre;transform:scaleX(1.018);transform-origin:0 0;margin-right:0.0304em">202</span></div>
<div style="left:176px;top:242.418px;width:21px;height:15.806000000000001px;background:#e2452f"></div>
<div class="t" style="left:176px;top:241.668px;width:21px;height:17.806px;line-height:17.806px;text-align:center"><span style="display:inline-block;white-space:pre;transform:scaleX(0.843);transform-origin:0 0;margin-right:-0.2262em">DU</span></div>
<div style="left:200.5px;top:254.818px;width:6.3px;height:1.3px;background:#262626"></div>
<div class="t" style="left:210px;top:241.668px;height:17.806px;line-height:17.806px;"><span style="display:inline-block;white-space:pre;transform:scaleX(1.018);transform-origin:0 0;margin-right:0.0405em">2026</span><span style="display:inline-block;white-space:pre;transform:scaleX(0.897);transform-origin:0 0;margin-right:-0.0344em">-</span><span style="display:inline-block;white-space:pre;transform:scaleX(1.018);transform-origin:0 0;margin-right:0.0202em">10</span><span style="display:inline-block;white-space:pre;transform:scaleX(0.897);transform-origin:0 0;margin-right:-0.0344em">-</span><span style="display:inline-block;white-space:pre;transform:scaleX(1.018);transform-origin:0 0;margin-right:0.0405em">0001</span></div>
<div class="t" style="left:321px;top:241.668px;width:194px;height:17.806px;line-height:17.806px;overflow:hidden"><span style="display:inline-block;white-space:pre;transform:scaleX(0.843);transform-origin:0 0;margin-right:-0.6613em">BAUMAX</span><span style="white-space:pre"> </span><span style="display:inline-block;white-space:pre;transform:scaleX(0.843);transform-origin:0 0;margin-right:-0.2262em">ČR</span><span style="white-space:pre"> </span><span style="display:inline-block;white-space:pre;transform:scaleX(1.012);transform-origin:0 0;margin-right:0.0062em">s</span><span style="display:inline-block;white-space:pre;transform:scaleX(0.897);transform-origin:0 0;margin-right:-0.0287em">.</span><span style="display:inline-block;white-space:pre;transform:scaleX(1.012);transform-origin:0 0;margin-right:0.0042em">r</span><span style="display:inline-block;white-space:pre;transform:scaleX(0.897);transform-origin:0 0;margin-right:-0.0287em">.</span><span style="display:inline-block;white-space:pre;transform:scaleX(1.012);transform-origin:0 0;margin-right:0.0070em">o</span><span style="display:inline-block;white-space:pre;transform:scaleX(0.897);transform-origin:0 0;margin-right:-0.0287em">.</span></div>
<div class="t" style="right:895.5px;top:241.668px;height:17.806px;line-height:17.806px;text-align:right;"><span style="display:inline-block;white-space:pre;transform:scaleX(1.018);transform-origin:0 0;margin-right:0.0101em">1</span><span style="white-space:pre"> </span><span style="display:inline-block;white-space:pre;transform:scaleX(1.018);transform-origin:0 0;margin-right:0.0304em">200</span><span style="display:inline-block;white-space:pre;transform:scaleX(0.897);transform-origin:0 0;margin-right:-0.0287em">,</span><span style="display:inline-block;white-space:pre;transform:scaleX(1.018);transform-origin:0 0;margin-right:0.0202em">00</span></div>
<div class="t" style="left:608.5px;top:241.668px;width:45.5px;height:17.806px;line-height:17.806px;overflow:hidden"><span style="display:inline-block;white-space:pre;transform:scaleX(1.018);transform-origin:0 0;margin-right:0.0202em">16</span><span style="display:inline-block;white-space:pre;transform:scaleX(0.897);transform-origin:0 0;margin-right:-0.0287em">.</span><span style="display:inline-block;white-space:pre;transform:scaleX(1.018);transform-origin:0 0;margin-right:0.0101em">2</span><span style="display:inline-block;white-space:pre;transform:scaleX(0.897);transform-origin:0 0;margin-right:-0.0287em">.</span><span style="display:inline-block;white-space:pre;transform:scaleX(1.018);transform-origin:0 0;margin-right:0.0304em">202</span></div>
<div style="left:176px;top:260.224px;width:21px;height:15.806000000000001px;background:#e2452f"></div>
<div class="t" style="left:176px;top:259.474px;width:21px;height:17.806px;line-height:17.806px;text-align:center"><span style="display:inline-block;white-space:pre;transform:scaleX(0.843);transform-origin:0 0;margin-right:-0.2262em">DU</span></div>
<div style="left:200.5px;top:272.62399999999997px;width:6.3px;height:1.3px;background:#262626"></div>
<div class="t" style="left:210px;top:259.474px;height:17.806px;line-height:17.806px;"><span style="display:inline-block;white-space:pre;transform:scaleX(1.018);transform-origin:0 0;margin-right:0.0405em">2026</span><span style="display:inline-block;white-space:pre;transform:scaleX(0.897);transform-origin:0 0;margin-right:-0.0344em">-</span><span style="display:inline-block;white-space:pre;transform:scaleX(1.018);transform-origin:0 0;margin-right:0.0202em">10</span><span style="display:inline-block;white-space:pre;transform:scaleX(0.897);transform-origin:0 0;margin-right:-0.0344em">-</span><span style="display:inline-block;white-space:pre;transform:scaleX(1.018);transform-origin:0 0;margin-right:0.0405em">0002</span></div>
<div class="t" style="left:321px;top:259.474px;width:194px;height:17.806px;line-height:17.806px;overflow:hidden"><span style="display:inline-block;white-space:pre;transform:scaleX(0.843);transform-origin:0 0;margin-right:-0.6613em">BAUMAX</span><span style="white-space:pre"> </span><span style="display:inline-block;white-space:pre;transform:scaleX(0.843);transform-origin:0 0;margin-right:-0.2262em">ČR</span><span style="white-space:pre"> </span><span style="display:inline-block;white-space:pre;transform:scaleX(1.012);transform-origin:0 0;margin-right:0.0062em">s</span><span style="display:inline-block;white-space:pre;transform:scaleX(0.897);transform-origin:0 0;margin-right:-0.0287em">.</span><span style="display:inline-block;white-space:pre;transform:scaleX(1.012);transform-origin:0 0;margin-right:0.0042em">r</span><span style="display:inline-block;white-space:pre;transform:scaleX(0.897);transform-origin:0 0;margin-right:-0.0287em">.</span><span style="display:inline-block;white-space:pre;transform:scaleX(1.012);transform-origin:0 0;margin-right:0.0070em">o</span><span style="display:inline-block;white-space:pre;transform:scaleX(0.897);transform-origin:0 0;margin-right:-0.0287em">.</span></div>
<div class="t" style="right:895.5px;top:259.474px;height:17.806px;line-height:17.806px;text-align:right;"><span style="display:inline-block;white-space:pre;transform:scaleX(1.018);transform-origin:0 0;margin-right:0.0202em">50</span><span style="display:inline-block;white-space:pre;transform:scaleX(0.897);transform-origin:0 0;margin-right:-0.0287em">,</span><span style="display:inline-block;white-space:pre;transform:scaleX(1.018);transform-origin:0 0;margin-right:0.0202em">00</span></div>
<div class="t" style="left:608.5px;top:259.474px;width:45.5px;height:17.806px;line-height:17.806px;overflow:hidden"><span style="display:inline-block;white-space:pre;transform:scaleX(1.018);transform-origin:0 0;margin-right:0.0202em">16</span><span style="display:inline-block;white-space:pre;transform:scaleX(0.897);transform-origin:0 0;margin-right:-0.0287em">.</span><span style="display:inline-block;white-space:pre;transform:scaleX(1.018);transform-origin:0 0;margin-right:0.0101em">2</span><span style="display:inline-block;white-space:pre;transform:scaleX(0.897);transform-origin:0 0;margin-right:-0.0287em">.</span><span style="display:inline-block;white-space:pre;transform:scaleX(1.018);transform-origin:0 0;margin-right:0.0304em">202</span></div>
<div style="left:176px;top:278.03px;width:21px;height:15.806000000000001px;background:#e2452f"></div>
<div class="t" style="left:176px;top:277.28px;width:21px;height:17.806px;line-height:17.806px;text-align:center"><span style="display:inline-block;white-space:pre;transform:scaleX(0.843);transform-origin:0 0;margin-right:-0.2262em">DU</span></div>
<div style="left:200.5px;top:290.42999999999995px;width:6.3px;height:1.3px;background:#262626"></div>
<div class="t" style="left:210px;top:277.28px;height:17.806px;line-height:17.806px;"><span style="display:inline-block;white-space:pre;transform:scaleX(1.018);transform-origin:0 0;margin-right:0.0405em">2026</span><span style="display:inline-block;white-space:pre;transform:scaleX(0.897);transform-origin:0 0;margin-right:-0.0344em">-</span><span style="display:inline-block;white-space:pre;transform:scaleX(1.018);transform-origin:0 0;margin-right:0.0202em">10</span><span style="display:inline-block;white-space:pre;transform:scaleX(0.897);transform-origin:0 0;margin-right:-0.0344em">-</span><span style="display:inline-block;white-space:pre;transform:scaleX(1.018);transform-origin:0 0;margin-right:0.0405em">0003</span></div>
<div class="t" style="left:321px;top:277.28px;width:194px;height:17.806px;line-height:17.806px;overflow:hidden"><span style="display:inline-block;white-space:pre;transform:scaleX(0.843);transform-origin:0 0;margin-right:-0.6613em">BAUMAX</span><span style="white-space:pre"> </span><span style="display:inline-block;white-space:pre;transform:scaleX(0.843);transform-origin:0 0;margin-right:-0.2262em">ČR</span><span style="white-space:pre"> </span><span style="display:inline-block;white-space:pre;transform:scaleX(1.012);transform-origin:0 0;margin-right:0.0062em">s</span><span style="display:inline-block;white-space:pre;transform:scaleX(0.897);transform-origin:0 0;margin-right:-0.0287em">.</span><span style="display:inline-block;white-space:pre;transform:scaleX(1.012);transform-origin:0 0;margin-right:0.0042em">r</span><span style="display:inline-block;white-space:pre;transform:scaleX(0.897);transform-origin:0 0;margin-right:-0.0287em">.</span><span style="display:inline-block;white-space:pre;transform:scaleX(1.012);transform-origin:0 0;margin-right:0.0070em">o</span><span style="display:inline-block;white-space:pre;transform:scaleX(0.897);transform-origin:0 0;margin-right:-0.0287em">.</span></div>
<div class="t" style="right:895.5px;top:277.28px;height:17.806px;line-height:17.806px;text-align:right;"><span style="display:inline-block;white-space:pre;transform:scaleX(1.018);transform-origin:0 0;margin-right:0.0304em">300</span><span style="display:inline-block;white-space:pre;transform:scaleX(0.897);transform-origin:0 0;margin-right:-0.0287em">,</span><span style="display:inline-block;white-space:pre;transform:scaleX(1.018);transform-origin:0 0;margin-right:0.0202em">00</span></div>
<div class="t" style="left:608.5px;top:277.28px;width:45.5px;height:17.806px;line-height:17.806px;overflow:hidden"><span style="display:inline-block;white-space:pre;transform:scaleX(1.018);transform-origin:0 0;margin-right:0.0202em">16</span><span style="display:inline-block;white-space:pre;transform:scaleX(0.897);transform-origin:0 0;margin-right:-0.0287em">.</span><span style="display:inline-block;white-space:pre;transform:scaleX(1.018);transform-origin:0 0;margin-right:0.0101em">2</span><span style="display:inline-block;white-space:pre;transform:scaleX(0.897);transform-origin:0 0;margin-right:-0.0287em">.</span><span style="display:inline-block;white-space:pre;transform:scaleX(1.018);transform-origin:0 0;margin-right:0.0304em">202</span></div>
<div class="t" style="left:176px;top:295.086px;width:21px;height:17.806px;line-height:17.806px;text-align:center"><span style="display:inline-block;white-space:pre;transform:scaleX(0.843);transform-origin:0 0;margin-right:-0.1131em">D</span><span style="display:inline-block;white-space:pre;transform:scaleX(0.897);transform-origin:0 0;margin-right:-0.0575em">_</span></div>
<div style="left:200.5px;top:308.236px;width:6.3px;height:1.3px;background:#262626"></div>
<div class="t" style="left:210px;top:295.086px;height:17.806px;line-height:17.806px;"><span style="display:inline-block;white-space:pre;transform:scaleX(1.018);transform-origin:0 0;margin-right:0.0405em">2026</span><span style="display:inline-block;white-space:pre;transform:scaleX(0.897);transform-origin:0 0;margin-right:-0.0344em">-</span><span style="display:inline-block;white-space:pre;transform:scaleX(1.018);transform-origin:0 0;margin-right:0.0202em">10</span><span style="display:inline-block;white-space:pre;transform:scaleX(0.897);transform-origin:0 0;margin-right:-0.0344em">-</span><span style="display:inline-block;white-space:pre;transform:scaleX(1.018);transform-origin:0 0;margin-right:0.0405em">0004</span></div>
<div class="t" style="left:321px;top:295.086px;height:17.806px;line-height:17.806px"><span style="display:inline-block;white-space:pre;transform:scaleX(0.897);transform-origin:0 0;margin-right:-0.0604em">+</span><span style="display:inline-block;white-space:pre;transform:scaleX(0.843);transform-origin:0 0;margin-right:-0.2349em">NO</span><span style="white-space:pre"> </span><span style="display:inline-block;white-space:pre;transform:scaleX(0.843);transform-origin:0 0;margin-right:-0.4524em">NAME</span></div>
<div class="t" style="left:386px;top:295.086px;height:17.806px;line-height:17.806px"><span style="display:inline-block;white-space:pre;transform:scaleX(0.897);transform-origin:0 0;margin-right:-0.0344em">(</span><span style="display:inline-block;white-space:pre;transform:scaleX(0.843);transform-origin:0 0;margin-right:-0.3306em">DPH</span><span style="display:inline-block;white-space:pre;transform:scaleX(0.897);transform-origin:0 0;margin-right:-0.0344em">)</span></div>
<div class="t" style="right:895.5px;top:295.086px;height:17.806px;line-height:17.806px;text-align:right;"><span style="display:inline-block;white-space:pre;transform:scaleX(1.018);transform-origin:0 0;margin-right:0.0202em">15</span><span style="white-space:pre"> </span><span style="display:inline-block;white-space:pre;transform:scaleX(1.018);transform-origin:0 0;margin-right:0.0304em">000</span><span style="display:inline-block;white-space:pre;transform:scaleX(0.897);transform-origin:0 0;margin-right:-0.0287em">,</span><span style="display:inline-block;white-space:pre;transform:scaleX(1.018);transform-origin:0 0;margin-right:0.0202em">00</span></div>
<div class="t" style="left:608.5px;top:295.086px;width:45.5px;height:17.806px;line-height:17.806px;overflow:hidden"><span style="display:inline-block;white-space:pre;transform:scaleX(1.018);transform-origin:0 0;margin-right:0.0202em">23</span><span style="display:inline-block;white-space:pre;transform:scaleX(0.897);transform-origin:0 0;margin-right:-0.0287em">.</span><span style="display:inline-block;white-space:pre;transform:scaleX(1.018);transform-origin:0 0;margin-right:0.0101em">2</span><span style="display:inline-block;white-space:pre;transform:scaleX(0.897);transform-origin:0 0;margin-right:-0.0287em">.</span><span style="display:inline-block;white-space:pre;transform:scaleX(1.018);transform-origin:0 0;margin-right:0.0304em">202</span></div>
<div class="t" style="left:176px;top:312.892px;width:21px;height:17.806px;line-height:17.806px;text-align:center"><span style="display:inline-block;white-space:pre;transform:scaleX(0.843);transform-origin:0 0;margin-right:-0.1131em">D</span><span style="display:inline-block;white-space:pre;transform:scaleX(0.897);transform-origin:0 0;margin-right:-0.0575em">_</span></div>
<div style="left:200.5px;top:326.042px;width:6.3px;height:1.3px;background:#262626"></div>
<div class="t" style="left:210px;top:312.892px;height:17.806px;line-height:17.806px;"><span style="display:inline-block;white-space:pre;transform:scaleX(1.018);transform-origin:0 0;margin-right:0.0405em">2026</span><span style="display:inline-block;white-space:pre;transform:scaleX(0.897);transform-origin:0 0;margin-right:-0.0344em">-</span><span style="display:inline-block;white-space:pre;transform:scaleX(1.018);transform-origin:0 0;margin-right:0.0202em">10</span><span style="display:inline-block;white-space:pre;transform:scaleX(0.897);transform-origin:0 0;margin-right:-0.0344em">-</span><span style="display:inline-block;white-space:pre;transform:scaleX(1.018);transform-origin:0 0;margin-right:0.0405em">0005</span></div>
<div class="t" style="left:321px;top:312.892px;width:194px;height:17.806px;line-height:17.806px;overflow:hidden"><span style="display:inline-block;white-space:pre;transform:scaleX(0.843);transform-origin:0 0;margin-right:-0.5047em">DELTA</span><span style="white-space:pre"> </span><span style="display:inline-block;white-space:pre;transform:scaleX(0.843);transform-origin:0 0;margin-right:-0.1045em">S</span><span style="display:inline-block;white-space:pre;transform:scaleX(1.012);transform-origin:0 0;margin-right:0.0340em">vratka</span><span style="white-space:pre"> </span><span style="display:inline-block;white-space:pre;transform:scaleX(1.012);transform-origin:0 0;margin-right:0.0062em">s</span><span style="display:inline-block;white-space:pre;transform:scaleX(0.897);transform-origin:0 0;margin-right:-0.0287em">.</span><span style="display:inline-block;white-space:pre;transform:scaleX(1.012);transform-origin:0 0;margin-right:0.0042em">r</span><span style="display:inline-block;white-space:pre;transform:scaleX(0.897);transform-origin:0 0;margin-right:-0.0287em">.</span><span style="display:inline-block;white-space:pre;transform:scaleX(1.012);transform-origin:0 0;margin-right:0.0070em">o</span><span style="display:inline-block;white-space:pre;transform:scaleX(0.897);transform-origin:0 0;margin-right:-0.0287em">.</span></div>
<div class="t" style="right:895.5px;top:312.892px;height:17.806px;line-height:17.806px;text-align:right;"><span style="display:inline-block;white-space:pre;transform:scaleX(1.018);transform-origin:0 0;margin-right:0.0101em">3</span><span style="white-space:pre"> </span><span style="display:inline-block;white-space:pre;transform:scaleX(1.018);transform-origin:0 0;margin-right:0.0304em">310</span><span style="display:inline-block;white-space:pre;transform:scaleX(0.897);transform-origin:0 0;margin-right:-0.0287em">,</span><span style="display:inline-block;white-space:pre;transform:scaleX(1.018);transform-origin:0 0;margin-right:0.0202em">00</span></div>
<div class="t" style="left:608.5px;top:312.892px;width:45.5px;height:17.806px;line-height:17.806px;overflow:hidden"><span style="display:inline-block;white-space:pre;transform:scaleX(1.018);transform-origin:0 0;margin-right:0.0202em">26</span><span style="display:inline-block;white-space:pre;transform:scaleX(0.897);transform-origin:0 0;margin-right:-0.0287em">.</span><span style="display:inline-block;white-space:pre;transform:scaleX(1.018);transform-origin:0 0;margin-right:0.0101em">2</span><span style="display:inline-block;white-space:pre;transform:scaleX(0.897);transform-origin:0 0;margin-right:-0.0287em">.</span><span style="display:inline-block;white-space:pre;transform:scaleX(1.018);transform-origin:0 0;margin-right:0.0304em">202</span></div>
<div class="t" style="left:176px;top:330.698px;width:21px;height:17.806px;line-height:17.806px;text-align:center"><span style="display:inline-block;white-space:pre;transform:scaleX(0.843);transform-origin:0 0;margin-right:-0.1131em">D</span><span style="display:inline-block;white-space:pre;transform:scaleX(0.897);transform-origin:0 0;margin-right:-0.0575em">_</span></div>
<div style="left:200.5px;top:343.84799999999996px;width:6.3px;height:1.3px;background:#262626"></div>
<div class="t" style="left:210px;top:330.698px;height:17.806px;line-height:17.806px;"><span style="display:inline-block;white-space:pre;transform:scaleX(1.018);transform-origin:0 0;margin-right:0.0405em">2026</span><span style="display:inline-block;white-space:pre;transform:scaleX(0.897);transform-origin:0 0;margin-right:-0.0344em">-</span><span style="display:inline-block;white-space:pre;transform:scaleX(1.018);transform-origin:0 0;margin-right:0.0202em">10</span><span style="display:inline-block;white-space:pre;transform:scaleX(0.897);transform-origin:0 0;margin-right:-0.0344em">-</span><span style="display:inline-block;white-space:pre;transform:scaleX(1.018);transform-origin:0 0;margin-right:0.0405em">0006</span></div>
<div class="t" style="left:321px;top:330.698px;width:194px;height:17.806px;line-height:17.806px;overflow:hidden"><span style="display:inline-block;white-space:pre;transform:scaleX(0.843);transform-origin:0 0;margin-right:-0.6613em">BAUMAX</span><span style="white-space:pre"> </span><span style="display:inline-block;white-space:pre;transform:scaleX(0.843);transform-origin:0 0;margin-right:-0.2262em">ČR</span><span style="white-space:pre"> </span><span style="display:inline-block;white-space:pre;transform:scaleX(1.012);transform-origin:0 0;margin-right:0.0062em">s</span><span style="display:inline-block;white-space:pre;transform:scaleX(0.897);transform-origin:0 0;margin-right:-0.0287em">.</span><span style="display:inline-block;white-space:pre;transform:scaleX(1.012);transform-origin:0 0;margin-right:0.0042em">r</span><span style="display:inline-block;white-space:pre;transform:scaleX(0.897);transform-origin:0 0;margin-right:-0.0287em">.</span><span style="display:inline-block;white-space:pre;transform:scaleX(1.012);transform-origin:0 0;margin-right:0.0070em">o</span><span style="display:inline-block;white-space:pre;transform:scaleX(0.897);transform-origin:0 0;margin-right:-0.0287em">.</span></div>
<div class="t" style="right:895.5px;top:330.698px;height:17.806px;line-height:17.806px;text-align:right;"><span style="display:inline-block;white-space:pre;transform:scaleX(1.018);transform-origin:0 0;margin-right:0.0101em">4</span><span style="white-space:pre"> </span><span style="display:inline-block;white-space:pre;transform:scaleX(1.018);transform-origin:0 0;margin-right:0.0304em">200</span><span style="display:inline-block;white-space:pre;transform:scaleX(0.897);transform-origin:0 0;margin-right:-0.0287em">,</span><span style="display:inline-block;white-space:pre;transform:scaleX(1.018);transform-origin:0 0;margin-right:0.0202em">00</span></div>
<div class="t" style="left:608.5px;top:330.698px;width:45.5px;height:17.806px;line-height:17.806px;overflow:hidden"><span style="display:inline-block;white-space:pre;transform:scaleX(1.018);transform-origin:0 0;margin-right:0.0202em">26</span><span style="display:inline-block;white-space:pre;transform:scaleX(0.897);transform-origin:0 0;margin-right:-0.0287em">.</span><span style="display:inline-block;white-space:pre;transform:scaleX(1.018);transform-origin:0 0;margin-right:0.0101em">2</span><span style="display:inline-block;white-space:pre;transform:scaleX(0.897);transform-origin:0 0;margin-right:-0.0287em">.</span><span style="display:inline-block;white-space:pre;transform:scaleX(1.018);transform-origin:0 0;margin-right:0.0304em">202</span></div>
<div class="t" style="left:176px;top:348.504px;width:21px;height:17.806px;line-height:17.806px;text-align:center"><span style="display:inline-block;white-space:pre;transform:scaleX(0.843);transform-origin:0 0;margin-right:-0.1131em">D</span><span style="display:inline-block;white-space:pre;transform:scaleX(0.897);transform-origin:0 0;margin-right:-0.0575em">_</span></div>
<div style="left:200.5px;top:361.654px;width:6.3px;height:1.3px;background:#262626"></div>
<div class="t" style="left:210px;top:348.504px;height:17.806px;line-height:17.806px;"><span style="display:inline-block;white-space:pre;transform:scaleX(1.018);transform-origin:0 0;margin-right:0.0405em">2026</span><span style="display:inline-block;white-space:pre;transform:scaleX(0.897);transform-origin:0 0;margin-right:-0.0344em">-</span><span style="display:inline-block;white-space:pre;transform:scaleX(1.018);transform-origin:0 0;margin-right:0.0202em">10</span><span style="display:inline-block;white-space:pre;transform:scaleX(0.897);transform-origin:0 0;margin-right:-0.0344em">-</span><span style="display:inline-block;white-space:pre;transform:scaleX(1.018);transform-origin:0 0;margin-right:0.0405em">0007</span></div>
<div class="t" style="left:321px;top:348.504px;width:194px;height:17.806px;line-height:17.806px;overflow:hidden"><span style="display:inline-block;white-space:pre;transform:scaleX(0.843);transform-origin:0 0;margin-right:-0.5047em">DELTA</span><span style="white-space:pre"> </span><span style="display:inline-block;white-space:pre;transform:scaleX(0.843);transform-origin:0 0;margin-right:-0.1045em">S</span><span style="display:inline-block;white-space:pre;transform:scaleX(1.012);transform-origin:0 0;margin-right:0.0340em">vratka</span><span style="white-space:pre"> </span><span style="display:inline-block;white-space:pre;transform:scaleX(1.012);transform-origin:0 0;margin-right:0.0062em">s</span><span style="display:inline-block;white-space:pre;transform:scaleX(0.897);transform-origin:0 0;margin-right:-0.0287em">.</span><span style="display:inline-block;white-space:pre;transform:scaleX(1.012);transform-origin:0 0;margin-right:0.0042em">r</span><span style="display:inline-block;white-space:pre;transform:scaleX(0.897);transform-origin:0 0;margin-right:-0.0287em">.</span><span style="display:inline-block;white-space:pre;transform:scaleX(1.012);transform-origin:0 0;margin-right:0.0070em">o</span><span style="display:inline-block;white-space:pre;transform:scaleX(0.897);transform-origin:0 0;margin-right:-0.0287em">.</span></div>
<div class="t" style="right:895.5px;top:348.504px;height:17.806px;line-height:17.806px;text-align:right;"><span style="display:inline-block;white-space:pre;transform:scaleX(1.018);transform-origin:0 0;margin-right:0.0202em">13</span><span style="white-space:pre"> </span><span style="display:inline-block;white-space:pre;transform:scaleX(1.018);transform-origin:0 0;margin-right:0.0304em">450</span><span style="display:inline-block;white-space:pre;transform:scaleX(0.897);transform-origin:0 0;margin-right:-0.0287em">,</span><span style="display:inline-block;white-space:pre;transform:scaleX(1.018);transform-origin:0 0;margin-right:0.0202em">00</span></div>
<div class="t" style="left:608.5px;top:348.504px;width:45.5px;height:17.806px;line-height:17.806px;overflow:hidden"><span style="display:inline-block;white-space:pre;transform:scaleX(1.018);transform-origin:0 0;margin-right:0.0202em">26</span><span style="display:inline-block;white-space:pre;transform:scaleX(0.897);transform-origin:0 0;margin-right:-0.0287em">.</span><span style="display:inline-block;white-space:pre;transform:scaleX(1.018);transform-origin:0 0;margin-right:0.0101em">2</span><span style="display:inline-block;white-space:pre;transform:scaleX(0.897);transform-origin:0 0;margin-right:-0.0287em">.</span><span style="display:inline-block;white-space:pre;transform:scaleX(1.018);transform-origin:0 0;margin-right:0.0304em">202</span></div>
<div class="t" style="left:176px;top:366.31px;width:21px;height:17.806px;line-height:17.806px;text-align:center"><span style="display:inline-block;white-space:pre;transform:scaleX(0.843);transform-origin:0 0;margin-right:-0.1131em">D</span><span style="display:inline-block;white-space:pre;transform:scaleX(0.897);transform-origin:0 0;margin-right:-0.0575em">_</span></div>
<div style="left:200.5px;top:379.46px;width:6.3px;height:1.3px;background:#262626"></div>
<div class="t" style="left:210px;top:366.31px;height:17.806px;line-height:17.806px;"><span style="display:inline-block;white-space:pre;transform:scaleX(1.018);transform-origin:0 0;margin-right:0.0405em">2026</span><span style="display:inline-block;white-space:pre;transform:scaleX(0.897);transform-origin:0 0;margin-right:-0.0344em">-</span><span style="display:inline-block;white-space:pre;transform:scaleX(1.018);transform-origin:0 0;margin-right:0.0202em">10</span><span style="display:inline-block;white-space:pre;transform:scaleX(0.897);transform-origin:0 0;margin-right:-0.0344em">-</span><span style="display:inline-block;white-space:pre;transform:scaleX(1.018);transform-origin:0 0;margin-right:0.0405em">0008</span></div>
<div class="t" style="left:321px;top:366.31px;width:194px;height:17.806px;line-height:17.806px;overflow:hidden"><span style="display:inline-block;white-space:pre;transform:scaleX(0.843);transform-origin:0 0;margin-right:-0.6004em">AGARIC</span><span style="white-space:pre"> </span><span style="display:inline-block;white-space:pre;transform:scaleX(1.012);transform-origin:0 0;margin-right:0.0062em">s</span><span style="display:inline-block;white-space:pre;transform:scaleX(0.897);transform-origin:0 0;margin-right:-0.0287em">.</span><span style="display:inline-block;white-space:pre;transform:scaleX(1.012);transform-origin:0 0;margin-right:0.0042em">r</span><span style="display:inline-block;white-space:pre;transform:scaleX(0.897);transform-origin:0 0;margin-right:-0.0287em">.</span><span style="display:inline-block;white-space:pre;transform:scaleX(1.012);transform-origin:0 0;margin-right:0.0070em">o</span><span style="display:inline-block;white-space:pre;transform:scaleX(0.897);transform-origin:0 0;margin-right:-0.0287em">.</span></div>
<div class="t" style="right:895.5px;top:366.31px;height:17.806px;line-height:17.806px;text-align:right;"><span style="display:inline-block;white-space:pre;transform:scaleX(1.018);transform-origin:0 0;margin-right:0.0202em">12</span><span style="white-space:pre"> </span><span style="display:inline-block;white-space:pre;transform:scaleX(1.018);transform-origin:0 0;margin-right:0.0304em">207</span><span style="display:inline-block;white-space:pre;transform:scaleX(0.897);transform-origin:0 0;margin-right:-0.0287em">,</span><span style="display:inline-block;white-space:pre;transform:scaleX(1.018);transform-origin:0 0;margin-right:0.0202em">50</span></div>
<div class="t" style="left:608.5px;top:366.31px;width:45.5px;height:17.806px;line-height:17.806px;overflow:hidden"><span style="display:inline-block;white-space:pre;transform:scaleX(1.018);transform-origin:0 0;margin-right:0.0202em">13</span><span style="display:inline-block;white-space:pre;transform:scaleX(0.897);transform-origin:0 0;margin-right:-0.0287em">.</span><span style="display:inline-block;white-space:pre;transform:scaleX(1.018);transform-origin:0 0;margin-right:0.0101em">3</span><span style="display:inline-block;white-space:pre;transform:scaleX(0.897);transform-origin:0 0;margin-right:-0.0287em">.</span><span style="display:inline-block;white-space:pre;transform:scaleX(1.018);transform-origin:0 0;margin-right:0.0304em">202</span></div>
<div class="t" style="left:176px;top:384.116px;width:21px;height:17.806px;line-height:17.806px;text-align:center"><span style="display:inline-block;white-space:pre;transform:scaleX(0.843);transform-origin:0 0;margin-right:-0.1131em">D</span><span style="display:inline-block;white-space:pre;transform:scaleX(0.897);transform-origin:0 0;margin-right:-0.0575em">_</span></div>
<div style="left:200.5px;top:397.26599999999996px;width:6.3px;height:1.3px;background:#262626"></div>
<div class="t" style="left:210px;top:384.116px;height:17.806px;line-height:17.806px;"><span style="display:inline-block;white-space:pre;transform:scaleX(1.018);transform-origin:0 0;margin-right:0.0405em">2026</span><span style="display:inline-block;white-space:pre;transform:scaleX(0.897);transform-origin:0 0;margin-right:-0.0344em">-</span><span style="display:inline-block;white-space:pre;transform:scaleX(1.018);transform-origin:0 0;margin-right:0.0202em">20</span><span style="display:inline-block;white-space:pre;transform:scaleX(0.897);transform-origin:0 0;margin-right:-0.0344em">-</span><span style="display:inline-block;white-space:pre;transform:scaleX(1.018);transform-origin:0 0;margin-right:0.0405em">0001</span></div>
<div class="t" style="left:321px;top:384.116px;width:194px;height:17.806px;line-height:17.806px;overflow:hidden"><span style="display:inline-block;white-space:pre;transform:scaleX(0.843);transform-origin:0 0;margin-right:-0.1045em">S</span><span style="display:inline-block;white-space:pre;transform:scaleX(1.012);transform-origin:0 0;margin-right:0.0479em">tartovací</span><span style="white-space:pre"> </span><span style="display:inline-block;white-space:pre;transform:scaleX(1.012);transform-origin:0 0;margin-right:0.0278em">firma</span></div>
<div class="t" style="right:895.5px;top:384.116px;height:17.806px;line-height:17.806px;text-align:right;"><span style="display:inline-block;white-space:pre;transform:scaleX(1.018);transform-origin:0 0;margin-right:0.0304em">100</span><span style="display:inline-block;white-space:pre;transform:scaleX(0.897);transform-origin:0 0;margin-right:-0.0287em">,</span><span style="display:inline-block;white-space:pre;transform:scaleX(1.018);transform-origin:0 0;margin-right:0.0202em">00</span></div>
<div class="t" style="left:608.5px;top:384.116px;width:45.5px;height:17.806px;line-height:17.806px;overflow:hidden"><span style="display:inline-block;white-space:pre;transform:scaleX(1.018);transform-origin:0 0;margin-right:0.0202em">23</span><span style="display:inline-block;white-space:pre;transform:scaleX(0.897);transform-origin:0 0;margin-right:-0.0287em">.</span><span style="display:inline-block;white-space:pre;transform:scaleX(1.018);transform-origin:0 0;margin-right:0.0101em">2</span><span style="display:inline-block;white-space:pre;transform:scaleX(0.897);transform-origin:0 0;margin-right:-0.0287em">.</span><span style="display:inline-block;white-space:pre;transform:scaleX(1.018);transform-origin:0 0;margin-right:0.0304em">202</span></div>
<div style="left:176px;top:402.672px;width:21px;height:15.806000000000001px;background:#e2452f"></div>
<div class="t" style="left:176px;top:401.922px;width:21px;height:17.806px;line-height:17.806px;text-align:center"><span style="display:inline-block;white-space:pre;transform:scaleX(1.012);transform-origin:0 0;margin-right:0.0035em">f</span><span style="display:inline-block;white-space:pre;transform:scaleX(0.843);transform-origin:0 0;margin-right:-0.1131em">U</span></div>
<div style="left:200.5px;top:415.072px;width:6.3px;height:1.3px;background:#262626"></div>
<div class="t" style="left:210px;top:401.922px;height:17.806px;line-height:17.806px;"><span style="display:inline-block;white-space:pre;transform:scaleX(1.018);transform-origin:0 0;margin-right:0.0405em">2026</span><span style="display:inline-block;white-space:pre;transform:scaleX(0.897);transform-origin:0 0;margin-right:-0.0344em">-</span><span style="display:inline-block;white-space:pre;transform:scaleX(1.018);transform-origin:0 0;margin-right:0.0202em">50</span><span style="display:inline-block;white-space:pre;transform:scaleX(0.897);transform-origin:0 0;margin-right:-0.0344em">-</span><span style="display:inline-block;white-space:pre;transform:scaleX(1.018);transform-origin:0 0;margin-right:0.0405em">0001</span></div>
<div class="t" style="left:321px;top:401.922px;width:194px;height:17.806px;line-height:17.806px;overflow:hidden"><span style="display:inline-block;white-space:pre;transform:scaleX(0.843);transform-origin:0 0;margin-right:-0.5047em">DELTA</span><span style="white-space:pre"> </span><span style="display:inline-block;white-space:pre;transform:scaleX(0.843);transform-origin:0 0;margin-right:-0.1045em">S</span><span style="display:inline-block;white-space:pre;transform:scaleX(1.012);transform-origin:0 0;margin-right:0.0340em">vratka</span><span style="white-space:pre"> </span><span style="display:inline-block;white-space:pre;transform:scaleX(1.012);transform-origin:0 0;margin-right:0.0062em">s</span><span style="display:inline-block;white-space:pre;transform:scaleX(0.897);transform-origin:0 0;margin-right:-0.0287em">.</span><span style="display:inline-block;white-space:pre;transform:scaleX(1.012);transform-origin:0 0;margin-right:0.0042em">r</span><span style="display:inline-block;white-space:pre;transform:scaleX(0.897);transform-origin:0 0;margin-right:-0.0287em">.</span><span style="display:inline-block;white-space:pre;transform:scaleX(1.012);transform-origin:0 0;margin-right:0.0070em">o</span><span style="display:inline-block;white-space:pre;transform:scaleX(0.897);transform-origin:0 0;margin-right:-0.0287em">.</span></div>
<div class="t" style="right:895.5px;top:401.922px;height:17.806px;line-height:17.806px;text-align:right;"><span style="display:inline-block;white-space:pre;transform:scaleX(1.018);transform-origin:0 0;margin-right:0.0101em">1</span><span style="white-space:pre"> </span><span style="display:inline-block;white-space:pre;transform:scaleX(1.018);transform-origin:0 0;margin-right:0.0304em">700</span><span style="display:inline-block;white-space:pre;transform:scaleX(0.897);transform-origin:0 0;margin-right:-0.0287em">,</span><span style="display:inline-block;white-space:pre;transform:scaleX(1.018);transform-origin:0 0;margin-right:0.0202em">00</span></div>
<div class="t" style="left:608.5px;top:401.922px;width:45.5px;height:17.806px;line-height:17.806px;overflow:hidden"><span style="display:inline-block;white-space:pre;transform:scaleX(1.018);transform-origin:0 0;margin-right:0.0202em">21</span><span style="display:inline-block;white-space:pre;transform:scaleX(0.897);transform-origin:0 0;margin-right:-0.0287em">.</span><span style="display:inline-block;white-space:pre;transform:scaleX(1.018);transform-origin:0 0;margin-right:0.0101em">1</span><span style="display:inline-block;white-space:pre;transform:scaleX(0.897);transform-origin:0 0;margin-right:-0.0287em">.</span><span style="display:inline-block;white-space:pre;transform:scaleX(1.018);transform-origin:0 0;margin-right:0.0304em">202</span></div>
<div style="left:176px;top:420.478px;width:21px;height:15.806000000000001px;background:#e2452f"></div>
<div class="t" style="left:176px;top:419.728px;width:21px;height:17.806px;line-height:17.806px;text-align:center"><span style="display:inline-block;white-space:pre;transform:scaleX(0.843);transform-origin:0 0;margin-right:-0.2262em">DU</span></div>
<div style="left:200.5px;top:432.878px;width:6.3px;height:1.3px;background:#262626"></div>
<div class="t" style="left:210px;top:419.728px;height:17.806px;line-height:17.806px;"><span style="display:inline-block;white-space:pre;transform:scaleX(1.018);transform-origin:0 0;margin-right:0.0405em">2026</span><span style="display:inline-block;white-space:pre;transform:scaleX(0.897);transform-origin:0 0;margin-right:-0.0344em">-</span><span style="display:inline-block;white-space:pre;transform:scaleX(1.018);transform-origin:0 0;margin-right:0.0202em">50</span><span style="display:inline-block;white-space:pre;transform:scaleX(0.897);transform-origin:0 0;margin-right:-0.0344em">-</span><span style="display:inline-block;white-space:pre;transform:scaleX(1.018);transform-origin:0 0;margin-right:0.0405em">0002</span></div>
<div class="t" style="left:321px;top:419.728px;height:17.806px;line-height:17.806px"><span style="display:inline-block;white-space:pre;transform:scaleX(0.897);transform-origin:0 0;margin-right:-0.0604em">+</span><span style="display:inline-block;white-space:pre;transform:scaleX(0.843);transform-origin:0 0;margin-right:-0.2349em">NO</span><span style="white-space:pre"> </span><span style="display:inline-block;white-space:pre;transform:scaleX(0.843);transform-origin:0 0;margin-right:-0.4524em">NAME</span></div>
<div class="t" style="left:386px;top:419.728px;height:17.806px;line-height:17.806px"><span style="display:inline-block;white-space:pre;transform:scaleX(0.897);transform-origin:0 0;margin-right:-0.0344em">(</span><span style="display:inline-block;white-space:pre;transform:scaleX(0.843);transform-origin:0 0;margin-right:-0.3306em">DPH</span><span style="display:inline-block;white-space:pre;transform:scaleX(0.897);transform-origin:0 0;margin-right:-0.0344em">)</span></div>
<div class="t" style="right:895.5px;top:419.728px;height:17.806px;line-height:17.806px;text-align:right;"><span style="display:inline-block;white-space:pre;transform:scaleX(1.018);transform-origin:0 0;margin-right:0.0101em">1</span><span style="white-space:pre"> </span><span style="display:inline-block;white-space:pre;transform:scaleX(1.018);transform-origin:0 0;margin-right:0.0304em">650</span><span style="display:inline-block;white-space:pre;transform:scaleX(0.897);transform-origin:0 0;margin-right:-0.0287em">,</span><span style="display:inline-block;white-space:pre;transform:scaleX(1.018);transform-origin:0 0;margin-right:0.0202em">00</span></div>
<div class="t" style="left:608.5px;top:419.728px;width:45.5px;height:17.806px;line-height:17.806px;overflow:hidden"><span style="display:inline-block;white-space:pre;transform:scaleX(1.018);transform-origin:0 0;margin-right:0.0202em">29</span><span style="display:inline-block;white-space:pre;transform:scaleX(0.897);transform-origin:0 0;margin-right:-0.0287em">.</span><span style="display:inline-block;white-space:pre;transform:scaleX(1.018);transform-origin:0 0;margin-right:0.0101em">1</span><span style="display:inline-block;white-space:pre;transform:scaleX(0.897);transform-origin:0 0;margin-right:-0.0287em">.</span><span style="display:inline-block;white-space:pre;transform:scaleX(1.018);transform-origin:0 0;margin-right:0.0304em">202</span></div>
<div style="left:176px;top:438.284px;width:21px;height:15.806000000000001px;background:#e2452f"></div>
<div class="t" style="left:176px;top:437.534px;width:21px;height:17.806px;line-height:17.806px;text-align:center"><span style="display:inline-block;white-space:pre;transform:scaleX(0.843);transform-origin:0 0;margin-right:-0.2262em">DU</span></div>
<div style="left:200.5px;top:450.68399999999997px;width:6.3px;height:1.3px;background:#262626"></div>
<div class="t" style="left:210px;top:437.534px;height:17.806px;line-height:17.806px;"><span style="display:inline-block;white-space:pre;transform:scaleX(1.018);transform-origin:0 0;margin-right:0.0405em">2026</span><span style="display:inline-block;white-space:pre;transform:scaleX(0.897);transform-origin:0 0;margin-right:-0.0344em">-</span><span style="display:inline-block;white-space:pre;transform:scaleX(1.018);transform-origin:0 0;margin-right:0.0202em">50</span><span style="display:inline-block;white-space:pre;transform:scaleX(0.897);transform-origin:0 0;margin-right:-0.0344em">-</span><span style="display:inline-block;white-space:pre;transform:scaleX(1.018);transform-origin:0 0;margin-right:0.0405em">0003</span></div>
<div class="t" style="left:321px;top:437.534px;width:194px;height:17.806px;line-height:17.806px;overflow:hidden"><span style="display:inline-block;white-space:pre;transform:scaleX(0.843);transform-origin:0 0;margin-right:-0.5047em">DELTA</span><span style="white-space:pre"> </span><span style="display:inline-block;white-space:pre;transform:scaleX(0.843);transform-origin:0 0;margin-right:-0.1045em">S</span><span style="display:inline-block;white-space:pre;transform:scaleX(1.012);transform-origin:0 0;margin-right:0.0340em">vratka</span><span style="white-space:pre"> </span><span style="display:inline-block;white-space:pre;transform:scaleX(1.012);transform-origin:0 0;margin-right:0.0062em">s</span><span style="display:inline-block;white-space:pre;transform:scaleX(0.897);transform-origin:0 0;margin-right:-0.0287em">.</span><span style="display:inline-block;white-space:pre;transform:scaleX(1.012);transform-origin:0 0;margin-right:0.0042em">r</span><span style="display:inline-block;white-space:pre;transform:scaleX(0.897);transform-origin:0 0;margin-right:-0.0287em">.</span><span style="display:inline-block;white-space:pre;transform:scaleX(1.012);transform-origin:0 0;margin-right:0.0070em">o</span><span style="display:inline-block;white-space:pre;transform:scaleX(0.897);transform-origin:0 0;margin-right:-0.0287em">.</span></div>
<div class="t" style="right:895.5px;top:437.534px;height:17.806px;line-height:17.806px;text-align:right;"><span style="display:inline-block;white-space:pre;transform:scaleX(1.018);transform-origin:0 0;margin-right:0.0101em">1</span><span style="white-space:pre"> </span><span style="display:inline-block;white-space:pre;transform:scaleX(1.018);transform-origin:0 0;margin-right:0.0304em">650</span><span style="display:inline-block;white-space:pre;transform:scaleX(0.897);transform-origin:0 0;margin-right:-0.0287em">,</span><span style="display:inline-block;white-space:pre;transform:scaleX(1.018);transform-origin:0 0;margin-right:0.0202em">00</span></div>
<div class="t" style="left:608.5px;top:437.534px;width:45.5px;height:17.806px;line-height:17.806px;overflow:hidden"><span style="display:inline-block;white-space:pre;transform:scaleX(1.018);transform-origin:0 0;margin-right:0.0202em">29</span><span style="display:inline-block;white-space:pre;transform:scaleX(0.897);transform-origin:0 0;margin-right:-0.0287em">.</span><span style="display:inline-block;white-space:pre;transform:scaleX(1.018);transform-origin:0 0;margin-right:0.0101em">1</span><span style="display:inline-block;white-space:pre;transform:scaleX(0.897);transform-origin:0 0;margin-right:-0.0287em">.</span><span style="display:inline-block;white-space:pre;transform:scaleX(1.018);transform-origin:0 0;margin-right:0.0304em">202</span></div>
<div style="left:176px;top:456.09000000000003px;width:21px;height:15.806000000000001px;background:#e2452f"></div>
<div class="t" style="left:176px;top:455.34000000000003px;width:21px;height:17.806px;line-height:17.806px;text-align:center"><span style="display:inline-block;white-space:pre;transform:scaleX(0.843);transform-origin:0 0;margin-right:-0.2087em">FU</span></div>
<div style="left:200.5px;top:468.49px;width:6.3px;height:1.3px;background:#262626"></div>
<div class="t" style="left:210px;top:455.34000000000003px;height:17.806px;line-height:17.806px;"><span style="display:inline-block;white-space:pre;transform:scaleX(1.018);transform-origin:0 0;margin-right:0.0405em">2026</span><span style="display:inline-block;white-space:pre;transform:scaleX(0.897);transform-origin:0 0;margin-right:-0.0344em">-</span><span style="display:inline-block;white-space:pre;transform:scaleX(1.018);transform-origin:0 0;margin-right:0.0202em">50</span><span style="display:inline-block;white-space:pre;transform:scaleX(0.897);transform-origin:0 0;margin-right:-0.0344em">-</span><span style="display:inline-block;white-space:pre;transform:scaleX(1.018);transform-origin:0 0;margin-right:0.0405em">0004</span></div>
<div class="t" style="left:321px;top:455.34000000000003px;height:17.806px;line-height:17.806px"><span style="display:inline-block;white-space:pre;transform:scaleX(0.897);transform-origin:0 0;margin-right:-0.0604em">+</span><span style="display:inline-block;white-space:pre;transform:scaleX(0.843);transform-origin:0 0;margin-right:-0.2349em">NO</span><span style="white-space:pre"> </span><span style="display:inline-block;white-space:pre;transform:scaleX(0.843);transform-origin:0 0;margin-right:-0.4524em">NAME</span></div>
<div class="t" style="left:386px;top:455.34000000000003px;height:17.806px;line-height:17.806px"><span style="display:inline-block;white-space:pre;transform:scaleX(0.897);transform-origin:0 0;margin-right:-0.0344em">(</span><span style="display:inline-block;white-space:pre;transform:scaleX(0.843);transform-origin:0 0;margin-right:-0.3306em">DPH</span><span style="display:inline-block;white-space:pre;transform:scaleX(0.897);transform-origin:0 0;margin-right:-0.0344em">)</span></div>
<div class="t" style="right:895.5px;top:455.34000000000003px;height:17.806px;line-height:17.806px;text-align:right;"><span style="display:inline-block;white-space:pre;transform:scaleX(1.018);transform-origin:0 0;margin-right:0.0101em">1</span><span style="white-space:pre"> </span><span style="display:inline-block;white-space:pre;transform:scaleX(1.018);transform-origin:0 0;margin-right:0.0304em">650</span><span style="display:inline-block;white-space:pre;transform:scaleX(0.897);transform-origin:0 0;margin-right:-0.0287em">,</span><span style="display:inline-block;white-space:pre;transform:scaleX(1.018);transform-origin:0 0;margin-right:0.0202em">00</span></div>
<div class="t" style="left:608.5px;top:455.34000000000003px;width:45.5px;height:17.806px;line-height:17.806px;overflow:hidden"><span style="display:inline-block;white-space:pre;transform:scaleX(1.018);transform-origin:0 0;margin-right:0.0202em">29</span><span style="display:inline-block;white-space:pre;transform:scaleX(0.897);transform-origin:0 0;margin-right:-0.0287em">.</span><span style="display:inline-block;white-space:pre;transform:scaleX(1.018);transform-origin:0 0;margin-right:0.0101em">1</span><span style="display:inline-block;white-space:pre;transform:scaleX(0.897);transform-origin:0 0;margin-right:-0.0287em">.</span><span style="display:inline-block;white-space:pre;transform:scaleX(1.018);transform-origin:0 0;margin-right:0.0304em">202</span></div>
<div style="left:176px;top:473.896px;width:21px;height:15.806000000000001px;background:#e2452f"></div>
<div class="t" style="left:176px;top:473.146px;width:21px;height:17.806px;line-height:17.806px;text-align:center"><span style="display:inline-block;white-space:pre;transform:scaleX(0.843);transform-origin:0 0;margin-right:-0.2087em">FU</span></div>
<div style="left:200.5px;top:486.296px;width:6.3px;height:1.3px;background:#262626"></div>
<div class="t" style="left:210px;top:473.146px;height:17.806px;line-height:17.806px;"><span style="display:inline-block;white-space:pre;transform:scaleX(1.018);transform-origin:0 0;margin-right:0.0405em">2026</span><span style="display:inline-block;white-space:pre;transform:scaleX(0.897);transform-origin:0 0;margin-right:-0.0344em">-</span><span style="display:inline-block;white-space:pre;transform:scaleX(1.018);transform-origin:0 0;margin-right:0.0202em">50</span><span style="display:inline-block;white-space:pre;transform:scaleX(0.897);transform-origin:0 0;margin-right:-0.0344em">-</span><span style="display:inline-block;white-space:pre;transform:scaleX(1.018);transform-origin:0 0;margin-right:0.0405em">0005</span></div>
<div class="t" style="left:321px;top:473.146px;height:17.806px;line-height:17.806px"><span style="display:inline-block;white-space:pre;transform:scaleX(0.897);transform-origin:0 0;margin-right:-0.0604em">+</span><span style="display:inline-block;white-space:pre;transform:scaleX(0.843);transform-origin:0 0;margin-right:-0.2349em">NO</span><span style="white-space:pre"> </span><span style="display:inline-block;white-space:pre;transform:scaleX(0.843);transform-origin:0 0;margin-right:-0.4524em">NAME</span></div>
<div class="t" style="left:386px;top:473.146px;height:17.806px;line-height:17.806px"><span style="display:inline-block;white-space:pre;transform:scaleX(0.897);transform-origin:0 0;margin-right:-0.0344em">(</span><span style="display:inline-block;white-space:pre;transform:scaleX(0.843);transform-origin:0 0;margin-right:-0.3306em">DPH</span><span style="display:inline-block;white-space:pre;transform:scaleX(0.897);transform-origin:0 0;margin-right:-0.0344em">)</span></div>
<div class="t" style="right:895.5px;top:473.146px;height:17.806px;line-height:17.806px;text-align:right;"><span style="display:inline-block;white-space:pre;transform:scaleX(1.018);transform-origin:0 0;margin-right:0.0101em">1</span><span style="white-space:pre"> </span><span style="display:inline-block;white-space:pre;transform:scaleX(1.018);transform-origin:0 0;margin-right:0.0304em">650</span><span style="display:inline-block;white-space:pre;transform:scaleX(0.897);transform-origin:0 0;margin-right:-0.0287em">,</span><span style="display:inline-block;white-space:pre;transform:scaleX(1.018);transform-origin:0 0;margin-right:0.0202em">00</span></div>
<div class="t" style="left:608.5px;top:473.146px;width:45.5px;height:17.806px;line-height:17.806px;overflow:hidden"><span style="display:inline-block;white-space:pre;transform:scaleX(1.018);transform-origin:0 0;margin-right:0.0202em">29</span><span style="display:inline-block;white-space:pre;transform:scaleX(0.897);transform-origin:0 0;margin-right:-0.0287em">.</span><span style="display:inline-block;white-space:pre;transform:scaleX(1.018);transform-origin:0 0;margin-right:0.0101em">1</span><span style="display:inline-block;white-space:pre;transform:scaleX(0.897);transform-origin:0 0;margin-right:-0.0287em">.</span><span style="display:inline-block;white-space:pre;transform:scaleX(1.018);transform-origin:0 0;margin-right:0.0304em">202</span></div>
<div style="left:176px;top:491.702px;width:21px;height:15.806000000000001px;background:#e2452f"></div>
<div class="t" style="left:176px;top:490.952px;width:21px;height:17.806px;line-height:17.806px;text-align:center"><span style="display:inline-block;white-space:pre;transform:scaleX(0.843);transform-origin:0 0;margin-right:-0.2262em">DU</span></div>
<div style="left:200.5px;top:504.102px;width:6.3px;height:1.3px;background:#262626"></div>
<div class="t" style="left:210px;top:490.952px;height:17.806px;line-height:17.806px;"><span style="display:inline-block;white-space:pre;transform:scaleX(1.018);transform-origin:0 0;margin-right:0.0405em">2026</span><span style="display:inline-block;white-space:pre;transform:scaleX(0.897);transform-origin:0 0;margin-right:-0.0344em">-</span><span style="display:inline-block;white-space:pre;transform:scaleX(1.018);transform-origin:0 0;margin-right:0.0202em">50</span><span style="display:inline-block;white-space:pre;transform:scaleX(0.897);transform-origin:0 0;margin-right:-0.0344em">-</span><span style="display:inline-block;white-space:pre;transform:scaleX(1.018);transform-origin:0 0;margin-right:0.0405em">0006</span></div>
<div class="t" style="left:321px;top:490.952px;height:17.806px;line-height:17.806px"><span style="display:inline-block;white-space:pre;transform:scaleX(0.897);transform-origin:0 0;margin-right:-0.0604em">+</span><span style="display:inline-block;white-space:pre;transform:scaleX(0.843);transform-origin:0 0;margin-right:-0.2349em">NO</span><span style="white-space:pre"> </span><span style="display:inline-block;white-space:pre;transform:scaleX(0.843);transform-origin:0 0;margin-right:-0.4524em">NAME</span></div>
<div class="t" style="left:386px;top:490.952px;height:17.806px;line-height:17.806px"><span style="display:inline-block;white-space:pre;transform:scaleX(0.897);transform-origin:0 0;margin-right:-0.0344em">(</span><span style="display:inline-block;white-space:pre;transform:scaleX(0.843);transform-origin:0 0;margin-right:-0.3306em">DPH</span><span style="display:inline-block;white-space:pre;transform:scaleX(0.897);transform-origin:0 0;margin-right:-0.0344em">)</span></div>
<div class="t" style="right:895.5px;top:490.952px;height:17.806px;line-height:17.806px;text-align:right;"><span style="display:inline-block;white-space:pre;transform:scaleX(1.018);transform-origin:0 0;margin-right:0.0101em">1</span><span style="white-space:pre"> </span><span style="display:inline-block;white-space:pre;transform:scaleX(1.018);transform-origin:0 0;margin-right:0.0304em">650</span><span style="display:inline-block;white-space:pre;transform:scaleX(0.897);transform-origin:0 0;margin-right:-0.0287em">,</span><span style="display:inline-block;white-space:pre;transform:scaleX(1.018);transform-origin:0 0;margin-right:0.0202em">00</span></div>
<div class="t" style="left:608.5px;top:490.952px;width:45.5px;height:17.806px;line-height:17.806px;overflow:hidden"><span style="display:inline-block;white-space:pre;transform:scaleX(1.018);transform-origin:0 0;margin-right:0.0202em">29</span><span style="display:inline-block;white-space:pre;transform:scaleX(0.897);transform-origin:0 0;margin-right:-0.0287em">.</span><span style="display:inline-block;white-space:pre;transform:scaleX(1.018);transform-origin:0 0;margin-right:0.0101em">1</span><span style="display:inline-block;white-space:pre;transform:scaleX(0.897);transform-origin:0 0;margin-right:-0.0287em">.</span><span style="display:inline-block;white-space:pre;transform:scaleX(1.018);transform-origin:0 0;margin-right:0.0304em">202</span></div>
<div style="left:176px;top:509.50800000000004px;width:21px;height:15.806000000000001px;background:#e2452f"></div>
<div class="t" style="left:176px;top:508.75800000000004px;width:21px;height:17.806px;line-height:17.806px;text-align:center"><span style="display:inline-block;white-space:pre;transform:scaleX(0.843);transform-origin:0 0;margin-right:-0.2087em">FU</span></div>
<div style="left:200.5px;top:521.908px;width:6.3px;height:1.3px;background:#262626"></div>
<div class="t" style="left:210px;top:508.75800000000004px;height:17.806px;line-height:17.806px;"><span style="display:inline-block;white-space:pre;transform:scaleX(1.018);transform-origin:0 0;margin-right:0.0405em">2026</span><span style="display:inline-block;white-space:pre;transform:scaleX(0.897);transform-origin:0 0;margin-right:-0.0344em">-</span><span style="display:inline-block;white-space:pre;transform:scaleX(1.018);transform-origin:0 0;margin-right:0.0202em">50</span><span style="display:inline-block;white-space:pre;transform:scaleX(0.897);transform-origin:0 0;margin-right:-0.0344em">-</span><span style="display:inline-block;white-space:pre;transform:scaleX(1.018);transform-origin:0 0;margin-right:0.0405em">0007</span></div>
<div class="t" style="left:321px;top:508.75800000000004px;height:17.806px;line-height:17.806px"><span style="display:inline-block;white-space:pre;transform:scaleX(0.897);transform-origin:0 0;margin-right:-0.0604em">+</span><span style="display:inline-block;white-space:pre;transform:scaleX(0.843);transform-origin:0 0;margin-right:-0.2349em">NO</span><span style="white-space:pre"> </span><span style="display:inline-block;white-space:pre;transform:scaleX(0.843);transform-origin:0 0;margin-right:-0.4524em">NAME</span></div>
<div class="t" style="left:386px;top:508.75800000000004px;height:17.806px;line-height:17.806px"><span style="display:inline-block;white-space:pre;transform:scaleX(0.897);transform-origin:0 0;margin-right:-0.0344em">(</span><span style="display:inline-block;white-space:pre;transform:scaleX(0.843);transform-origin:0 0;margin-right:-0.3306em">DPH</span><span style="display:inline-block;white-space:pre;transform:scaleX(0.897);transform-origin:0 0;margin-right:-0.0344em">)</span></div>
<div class="t" style="right:895.5px;top:508.75800000000004px;height:17.806px;line-height:17.806px;text-align:right;"><span style="display:inline-block;white-space:pre;transform:scaleX(1.018);transform-origin:0 0;margin-right:0.0101em">1</span><span style="white-space:pre"> </span><span style="display:inline-block;white-space:pre;transform:scaleX(1.018);transform-origin:0 0;margin-right:0.0304em">650</span><span style="display:inline-block;white-space:pre;transform:scaleX(0.897);transform-origin:0 0;margin-right:-0.0287em">,</span><span style="display:inline-block;white-space:pre;transform:scaleX(1.018);transform-origin:0 0;margin-right:0.0202em">00</span></div>
<div class="t" style="left:608.5px;top:508.75800000000004px;width:45.5px;height:17.806px;line-height:17.806px;overflow:hidden"><span style="display:inline-block;white-space:pre;transform:scaleX(1.018);transform-origin:0 0;margin-right:0.0202em">29</span><span style="display:inline-block;white-space:pre;transform:scaleX(0.897);transform-origin:0 0;margin-right:-0.0287em">.</span><span style="display:inline-block;white-space:pre;transform:scaleX(1.018);transform-origin:0 0;margin-right:0.0101em">1</span><span style="display:inline-block;white-space:pre;transform:scaleX(0.897);transform-origin:0 0;margin-right:-0.0287em">.</span><span style="display:inline-block;white-space:pre;transform:scaleX(1.018);transform-origin:0 0;margin-right:0.0304em">202</span></div>
<div style="left:176px;top:527.3140000000001px;width:21px;height:15.806000000000001px;background:#e2452f"></div>
<div class="t" style="left:176px;top:526.5640000000001px;width:21px;height:17.806px;line-height:17.806px;text-align:center"><span style="display:inline-block;white-space:pre;transform:scaleX(0.843);transform-origin:0 0;margin-right:-0.2262em">DU</span></div>
<div style="left:200.5px;top:539.714px;width:6.3px;height:1.3px;background:#262626"></div>
<div class="t" style="left:210px;top:526.5640000000001px;height:17.806px;line-height:17.806px;"><span style="display:inline-block;white-space:pre;transform:scaleX(1.018);transform-origin:0 0;margin-right:0.0405em">2026</span><span style="display:inline-block;white-space:pre;transform:scaleX(0.897);transform-origin:0 0;margin-right:-0.0344em">-</span><span style="display:inline-block;white-space:pre;transform:scaleX(1.018);transform-origin:0 0;margin-right:0.0202em">50</span><span style="display:inline-block;white-space:pre;transform:scaleX(0.897);transform-origin:0 0;margin-right:-0.0344em">-</span><span style="display:inline-block;white-space:pre;transform:scaleX(1.018);transform-origin:0 0;margin-right:0.0405em">0008</span></div>
<div class="t" style="left:321px;top:526.5640000000001px;height:17.806px;line-height:17.806px"><span style="display:inline-block;white-space:pre;transform:scaleX(0.897);transform-origin:0 0;margin-right:-0.0604em">+</span><span style="display:inline-block;white-space:pre;transform:scaleX(0.843);transform-origin:0 0;margin-right:-0.2349em">NO</span><span style="white-space:pre"> </span><span style="display:inline-block;white-space:pre;transform:scaleX(0.843);transform-origin:0 0;margin-right:-0.4524em">NAME</span></div>
<div class="t" style="left:386px;top:526.5640000000001px;height:17.806px;line-height:17.806px"><span style="display:inline-block;white-space:pre;transform:scaleX(0.897);transform-origin:0 0;margin-right:-0.0344em">(</span><span style="display:inline-block;white-space:pre;transform:scaleX(0.843);transform-origin:0 0;margin-right:-0.3306em">DPH</span><span style="display:inline-block;white-space:pre;transform:scaleX(0.897);transform-origin:0 0;margin-right:-0.0344em">)</span></div>
<div class="t" style="right:895.5px;top:526.5640000000001px;height:17.806px;line-height:17.806px;text-align:right;"><span style="display:inline-block;white-space:pre;transform:scaleX(1.018);transform-origin:0 0;margin-right:0.0101em">1</span><span style="white-space:pre"> </span><span style="display:inline-block;white-space:pre;transform:scaleX(1.018);transform-origin:0 0;margin-right:0.0304em">650</span><span style="display:inline-block;white-space:pre;transform:scaleX(0.897);transform-origin:0 0;margin-right:-0.0287em">,</span><span style="display:inline-block;white-space:pre;transform:scaleX(1.018);transform-origin:0 0;margin-right:0.0202em">00</span></div>
<div class="t" style="left:608.5px;top:526.5640000000001px;width:45.5px;height:17.806px;line-height:17.806px;overflow:hidden"><span style="display:inline-block;white-space:pre;transform:scaleX(1.018);transform-origin:0 0;margin-right:0.0202em">29</span><span style="display:inline-block;white-space:pre;transform:scaleX(0.897);transform-origin:0 0;margin-right:-0.0287em">.</span><span style="display:inline-block;white-space:pre;transform:scaleX(1.018);transform-origin:0 0;margin-right:0.0101em">1</span><span style="display:inline-block;white-space:pre;transform:scaleX(0.897);transform-origin:0 0;margin-right:-0.0287em">.</span><span style="display:inline-block;white-space:pre;transform:scaleX(1.018);transform-origin:0 0;margin-right:0.0304em">202</span></div>
<div style="left:176px;top:545.12px;width:21px;height:15.806000000000001px;background:#e2452f"></div>
<div class="t" style="left:176px;top:544.37px;width:21px;height:17.806px;line-height:17.806px;text-align:center"><span style="display:inline-block;white-space:pre;transform:scaleX(0.843);transform-origin:0 0;margin-right:-0.2262em">DU</span></div>
<div style="left:200.5px;top:557.52px;width:6.3px;height:1.3px;background:#262626"></div>
<div class="t" style="left:210px;top:544.37px;height:17.806px;line-height:17.806px;"><span style="display:inline-block;white-space:pre;transform:scaleX(1.018);transform-origin:0 0;margin-right:0.0405em">2026</span><span style="display:inline-block;white-space:pre;transform:scaleX(0.897);transform-origin:0 0;margin-right:-0.0344em">-</span><span style="display:inline-block;white-space:pre;transform:scaleX(1.018);transform-origin:0 0;margin-right:0.0202em">50</span><span style="display:inline-block;white-space:pre;transform:scaleX(0.897);transform-origin:0 0;margin-right:-0.0344em">-</span><span style="display:inline-block;white-space:pre;transform:scaleX(1.018);transform-origin:0 0;margin-right:0.0405em">0009</span></div>
<div class="t" style="left:321px;top:544.37px;height:17.806px;line-height:17.806px"><span style="display:inline-block;white-space:pre;transform:scaleX(0.897);transform-origin:0 0;margin-right:-0.0604em">+</span><span style="display:inline-block;white-space:pre;transform:scaleX(0.843);transform-origin:0 0;margin-right:-0.2349em">NO</span><span style="white-space:pre"> </span><span style="display:inline-block;white-space:pre;transform:scaleX(0.843);transform-origin:0 0;margin-right:-0.4524em">NAME</span></div>
<div class="t" style="left:386px;top:544.37px;height:17.806px;line-height:17.806px"><span style="display:inline-block;white-space:pre;transform:scaleX(0.897);transform-origin:0 0;margin-right:-0.0344em">(</span><span style="display:inline-block;white-space:pre;transform:scaleX(0.843);transform-origin:0 0;margin-right:-0.3306em">DPH</span><span style="display:inline-block;white-space:pre;transform:scaleX(0.897);transform-origin:0 0;margin-right:-0.0344em">)</span></div>
<div class="t" style="right:895.5px;top:544.37px;height:17.806px;line-height:17.806px;text-align:right;"><span style="display:inline-block;white-space:pre;transform:scaleX(1.018);transform-origin:0 0;margin-right:0.0101em">1</span><span style="white-space:pre"> </span><span style="display:inline-block;white-space:pre;transform:scaleX(1.018);transform-origin:0 0;margin-right:0.0304em">650</span><span style="display:inline-block;white-space:pre;transform:scaleX(0.897);transform-origin:0 0;margin-right:-0.0287em">,</span><span style="display:inline-block;white-space:pre;transform:scaleX(1.018);transform-origin:0 0;margin-right:0.0202em">00</span></div>
<div class="t" style="left:608.5px;top:544.37px;width:45.5px;height:17.806px;line-height:17.806px;overflow:hidden"><span style="display:inline-block;white-space:pre;transform:scaleX(1.018);transform-origin:0 0;margin-right:0.0202em">29</span><span style="display:inline-block;white-space:pre;transform:scaleX(0.897);transform-origin:0 0;margin-right:-0.0287em">.</span><span style="display:inline-block;white-space:pre;transform:scaleX(1.018);transform-origin:0 0;margin-right:0.0101em">1</span><span style="display:inline-block;white-space:pre;transform:scaleX(0.897);transform-origin:0 0;margin-right:-0.0287em">.</span><span style="display:inline-block;white-space:pre;transform:scaleX(1.018);transform-origin:0 0;margin-right:0.0304em">202</span></div>
<div style="left:176px;top:562.926px;width:21px;height:15.806000000000001px;background:#e2452f"></div>
<div class="t" style="left:176px;top:562.176px;width:21px;height:17.806px;line-height:17.806px;text-align:center"><span style="display:inline-block;white-space:pre;transform:scaleX(0.843);transform-origin:0 0;margin-right:-0.1045em">K</span><span style="display:inline-block;white-space:pre;transform:scaleX(0.897);transform-origin:0 0;margin-right:-0.0575em">_</span></div>
<div style="left:200.5px;top:575.326px;width:6.3px;height:1.3px;background:#262626"></div>
<div class="t" style="left:210px;top:562.176px;height:17.806px;line-height:17.806px;"><span style="display:inline-block;white-space:pre;transform:scaleX(1.018);transform-origin:0 0;margin-right:0.0405em">2026</span><span style="display:inline-block;white-space:pre;transform:scaleX(0.897);transform-origin:0 0;margin-right:-0.0344em">-</span><span style="display:inline-block;white-space:pre;transform:scaleX(1.018);transform-origin:0 0;margin-right:0.0202em">50</span><span style="display:inline-block;white-space:pre;transform:scaleX(0.897);transform-origin:0 0;margin-right:-0.0344em">-</span><span style="display:inline-block;white-space:pre;transform:scaleX(1.018);transform-origin:0 0;margin-right:0.0405em">0010</span></div>
<div class="t" style="left:321px;top:562.176px;width:194px;height:17.806px;line-height:17.806px;overflow:hidden"><span style="display:inline-block;white-space:pre;transform:scaleX(0.843);transform-origin:0 0;margin-right:-0.5047em">DELTA</span><span style="white-space:pre"> </span><span style="display:inline-block;white-space:pre;transform:scaleX(0.843);transform-origin:0 0;margin-right:-0.1045em">S</span><span style="display:inline-block;white-space:pre;transform:scaleX(1.012);transform-origin:0 0;margin-right:0.0340em">vratka</span><span style="white-space:pre"> </span><span style="display:inline-block;white-space:pre;transform:scaleX(1.012);transform-origin:0 0;margin-right:0.0062em">s</span><span style="display:inline-block;white-space:pre;transform:scaleX(0.897);transform-origin:0 0;margin-right:-0.0287em">.</span><span style="display:inline-block;white-space:pre;transform:scaleX(1.012);transform-origin:0 0;margin-right:0.0042em">r</span><span style="display:inline-block;white-space:pre;transform:scaleX(0.897);transform-origin:0 0;margin-right:-0.0287em">.</span><span style="display:inline-block;white-space:pre;transform:scaleX(1.012);transform-origin:0 0;margin-right:0.0070em">o</span><span style="display:inline-block;white-space:pre;transform:scaleX(0.897);transform-origin:0 0;margin-right:-0.0287em">.</span></div>
<div class="t" style="right:895.5px;top:562.176px;height:17.806px;line-height:17.806px;text-align:right;"><span style="display:inline-block;white-space:pre;transform:scaleX(1.018);transform-origin:0 0;margin-right:0.0304em">140</span><span style="display:inline-block;white-space:pre;transform:scaleX(0.897);transform-origin:0 0;margin-right:-0.0287em">,</span><span style="display:inline-block;white-space:pre;transform:scaleX(1.018);transform-origin:0 0;margin-right:0.0202em">00</span></div>
<div class="t" style="left:608.5px;top:562.176px;width:45.5px;height:17.806px;line-height:17.806px;overflow:hidden"><span style="display:inline-block;white-space:pre;transform:scaleX(1.018);transform-origin:0 0;margin-right:0.0202em">17</span><span style="display:inline-block;white-space:pre;transform:scaleX(0.897);transform-origin:0 0;margin-right:-0.0287em">.</span><span style="display:inline-block;white-space:pre;transform:scaleX(1.018);transform-origin:0 0;margin-right:0.0101em">2</span><span style="display:inline-block;white-space:pre;transform:scaleX(0.897);transform-origin:0 0;margin-right:-0.0287em">.</span><span style="display:inline-block;white-space:pre;transform:scaleX(1.018);transform-origin:0 0;margin-right:0.0304em">202</span></div>
<div style="left:176px;top:580.732px;width:21px;height:15.806000000000001px;background:#9ff29a"></div>
<div class="t" style="left:176px;top:579.982px;width:21px;height:17.806px;line-height:17.806px;text-align:center"><span style="display:inline-block;white-space:pre;transform:scaleX(0.843);transform-origin:0 0;margin-right:-0.1131em">N</span><span style="display:inline-block;white-space:pre;transform:scaleX(0.897);transform-origin:0 0;margin-right:-0.0575em">_</span></div>
<div style="left:200.5px;top:593.132px;width:6.3px;height:1.3px;background:#262626"></div>
<div class="t" style="left:210px;top:579.982px;height:17.806px;line-height:17.806px;"><span style="display:inline-block;white-space:pre;transform:scaleX(1.018);transform-origin:0 0;margin-right:0.0405em">2026</span><span style="display:inline-block;white-space:pre;transform:scaleX(0.897);transform-origin:0 0;margin-right:-0.0344em">-</span><span style="display:inline-block;white-space:pre;transform:scaleX(1.018);transform-origin:0 0;margin-right:0.0202em">50</span><span style="display:inline-block;white-space:pre;transform:scaleX(0.897);transform-origin:0 0;margin-right:-0.0344em">-</span><span style="display:inline-block;white-space:pre;transform:scaleX(1.018);transform-origin:0 0;margin-right:0.0405em">0011</span></div>
<div class="t" style="left:321px;top:579.982px;width:194px;height:17.806px;line-height:17.806px;overflow:hidden"><span style="display:inline-block;white-space:pre;transform:scaleX(0.843);transform-origin:0 0;margin-right:-0.5047em">DELTA</span><span style="white-space:pre"> </span><span style="display:inline-block;white-space:pre;transform:scaleX(0.843);transform-origin:0 0;margin-right:-0.1045em">S</span><span style="display:inline-block;white-space:pre;transform:scaleX(1.012);transform-origin:0 0;margin-right:0.0340em">vratka</span><span style="white-space:pre"> </span><span style="display:inline-block;white-space:pre;transform:scaleX(1.012);transform-origin:0 0;margin-right:0.0062em">s</span><span style="display:inline-block;white-space:pre;transform:scaleX(0.897);transform-origin:0 0;margin-right:-0.0287em">.</span><span style="display:inline-block;white-space:pre;transform:scaleX(1.012);transform-origin:0 0;margin-right:0.0042em">r</span><span style="display:inline-block;white-space:pre;transform:scaleX(0.897);transform-origin:0 0;margin-right:-0.0287em">.</span><span style="display:inline-block;white-space:pre;transform:scaleX(1.012);transform-origin:0 0;margin-right:0.0070em">o</span><span style="display:inline-block;white-space:pre;transform:scaleX(0.897);transform-origin:0 0;margin-right:-0.0287em">.</span></div>
<div class="t" style="right:895.5px;top:579.982px;height:17.806px;line-height:17.806px;text-align:right;"><span style="display:inline-block;white-space:pre;transform:scaleX(1.018);transform-origin:0 0;margin-right:0.0101em">2</span><span style="white-space:pre"> </span><span style="display:inline-block;white-space:pre;transform:scaleX(1.018);transform-origin:0 0;margin-right:0.0304em">000</span><span style="display:inline-block;white-space:pre;transform:scaleX(0.897);transform-origin:0 0;margin-right:-0.0287em">,</span><span style="display:inline-block;white-space:pre;transform:scaleX(1.018);transform-origin:0 0;margin-right:0.0202em">00</span></div>
<div class="t" style="left:608.5px;top:579.982px;width:45.5px;height:17.806px;line-height:17.806px;overflow:hidden"><span style="display:inline-block;white-space:pre;transform:scaleX(1.018);transform-origin:0 0;margin-right:0.0202em">17</span><span style="display:inline-block;white-space:pre;transform:scaleX(0.897);transform-origin:0 0;margin-right:-0.0287em">.</span><span style="display:inline-block;white-space:pre;transform:scaleX(1.018);transform-origin:0 0;margin-right:0.0101em">2</span><span style="display:inline-block;white-space:pre;transform:scaleX(0.897);transform-origin:0 0;margin-right:-0.0287em">.</span><span style="display:inline-block;white-space:pre;transform:scaleX(1.018);transform-origin:0 0;margin-right:0.0304em">202</span></div>
<div class="t" style="left:176px;top:597.788px;width:21px;height:17.806px;line-height:17.806px;text-align:center"><span style="display:inline-block;white-space:pre;transform:scaleX(0.843);transform-origin:0 0;margin-right:-0.1131em">D</span><span style="display:inline-block;white-space:pre;transform:scaleX(0.897);transform-origin:0 0;margin-right:-0.0575em">_</span></div>
<div style="left:200.5px;top:610.938px;width:6.3px;height:1.3px;background:#262626"></div>
<div class="t" style="left:210px;top:597.788px;height:17.806px;line-height:17.806px;"><span style="display:inline-block;white-space:pre;transform:scaleX(1.018);transform-origin:0 0;margin-right:0.0405em">2026</span><span style="display:inline-block;white-space:pre;transform:scaleX(0.897);transform-origin:0 0;margin-right:-0.0344em">-</span><span style="display:inline-block;white-space:pre;transform:scaleX(1.018);transform-origin:0 0;margin-right:0.0202em">50</span><span style="display:inline-block;white-space:pre;transform:scaleX(0.897);transform-origin:0 0;margin-right:-0.0344em">-</span><span style="display:inline-block;white-space:pre;transform:scaleX(1.018);transform-origin:0 0;margin-right:0.0405em">0012</span></div>
<div class="t" style="left:321px;top:597.788px;height:17.806px;line-height:17.806px"><span style="display:inline-block;white-space:pre;transform:scaleX(0.897);transform-origin:0 0;margin-right:-0.0604em">+</span><span style="display:inline-block;white-space:pre;transform:scaleX(0.843);transform-origin:0 0;margin-right:-0.2349em">NO</span><span style="white-space:pre"> </span><span style="display:inline-block;white-space:pre;transform:scaleX(0.843);transform-origin:0 0;margin-right:-0.4524em">NAME</span></div>
<div class="t" style="left:386px;top:597.788px;height:17.806px;line-height:17.806px"><span style="display:inline-block;white-space:pre;transform:scaleX(0.897);transform-origin:0 0;margin-right:-0.0344em">(</span><span style="display:inline-block;white-space:pre;transform:scaleX(0.843);transform-origin:0 0;margin-right:-0.3306em">DPH</span><span style="display:inline-block;white-space:pre;transform:scaleX(0.897);transform-origin:0 0;margin-right:-0.0344em">)</span></div>
<div class="t" style="right:895.5px;top:597.788px;height:17.806px;line-height:17.806px;text-align:right;"><span style="display:inline-block;white-space:pre;transform:scaleX(1.018);transform-origin:0 0;margin-right:0.0202em">46</span><span style="display:inline-block;white-space:pre;transform:scaleX(0.897);transform-origin:0 0;margin-right:-0.0287em">,</span><span style="display:inline-block;white-space:pre;transform:scaleX(1.018);transform-origin:0 0;margin-right:0.0202em">00</span></div>
<div class="t" style="left:608.5px;top:597.788px;width:45.5px;height:17.806px;line-height:17.806px;overflow:hidden"><span style="display:inline-block;white-space:pre;transform:scaleX(1.018);transform-origin:0 0;margin-right:0.0202em">17</span><span style="display:inline-block;white-space:pre;transform:scaleX(0.897);transform-origin:0 0;margin-right:-0.0287em">.</span><span style="display:inline-block;white-space:pre;transform:scaleX(1.018);transform-origin:0 0;margin-right:0.0101em">2</span><span style="display:inline-block;white-space:pre;transform:scaleX(0.897);transform-origin:0 0;margin-right:-0.0287em">.</span><span style="display:inline-block;white-space:pre;transform:scaleX(1.018);transform-origin:0 0;margin-right:0.0304em">202</span></div>
<div class="t" style="left:176px;top:615.594px;width:21px;height:17.806px;line-height:17.806px;text-align:center"><span style="display:inline-block;white-space:pre;transform:scaleX(0.843);transform-origin:0 0;margin-right:-0.1131em">D</span><span style="display:inline-block;white-space:pre;transform:scaleX(0.897);transform-origin:0 0;margin-right:-0.0575em">_</span></div>
<div style="left:200.5px;top:628.744px;width:6.3px;height:1.3px;background:#262626"></div>
<div class="t" style="left:210px;top:615.594px;height:17.806px;line-height:17.806px;"><span style="display:inline-block;white-space:pre;transform:scaleX(1.018);transform-origin:0 0;margin-right:0.0405em">2026</span><span style="display:inline-block;white-space:pre;transform:scaleX(0.897);transform-origin:0 0;margin-right:-0.0344em">-</span><span style="display:inline-block;white-space:pre;transform:scaleX(1.018);transform-origin:0 0;margin-right:0.0202em">50</span><span style="display:inline-block;white-space:pre;transform:scaleX(0.897);transform-origin:0 0;margin-right:-0.0344em">-</span><span style="display:inline-block;white-space:pre;transform:scaleX(1.018);transform-origin:0 0;margin-right:0.0405em">0013</span></div>
<div class="t" style="left:321px;top:615.594px;width:194px;height:17.806px;line-height:17.806px;overflow:hidden"><span style="display:inline-block;white-space:pre;transform:scaleX(0.843);transform-origin:0 0;margin-right:-0.5047em">DELTA</span><span style="white-space:pre"> </span><span style="display:inline-block;white-space:pre;transform:scaleX(0.843);transform-origin:0 0;margin-right:-0.1045em">S</span><span style="display:inline-block;white-space:pre;transform:scaleX(1.012);transform-origin:0 0;margin-right:0.0340em">vratka</span><span style="white-space:pre"> </span><span style="display:inline-block;white-space:pre;transform:scaleX(1.012);transform-origin:0 0;margin-right:0.0062em">s</span><span style="display:inline-block;white-space:pre;transform:scaleX(0.897);transform-origin:0 0;margin-right:-0.0287em">.</span><span style="display:inline-block;white-space:pre;transform:scaleX(1.012);transform-origin:0 0;margin-right:0.0042em">r</span><span style="display:inline-block;white-space:pre;transform:scaleX(0.897);transform-origin:0 0;margin-right:-0.0287em">.</span><span style="display:inline-block;white-space:pre;transform:scaleX(1.012);transform-origin:0 0;margin-right:0.0070em">o</span><span style="display:inline-block;white-space:pre;transform:scaleX(0.897);transform-origin:0 0;margin-right:-0.0287em">.</span></div>
<div class="t" style="right:895.5px;top:615.594px;height:17.806px;line-height:17.806px;text-align:right;"><span style="display:inline-block;white-space:pre;transform:scaleX(0.897);transform-origin:0 0;margin-right:-0.0344em">-</span><span style="display:inline-block;white-space:pre;transform:scaleX(1.018);transform-origin:0 0;margin-right:0.0101em">1</span><span style="white-space:pre"> </span><span style="display:inline-block;white-space:pre;transform:scaleX(1.018);transform-origin:0 0;margin-right:0.0304em">650</span><span style="display:inline-block;white-space:pre;transform:scaleX(0.897);transform-origin:0 0;margin-right:-0.0287em">,</span><span style="display:inline-block;white-space:pre;transform:scaleX(1.018);transform-origin:0 0;margin-right:0.0202em">00</span></div>
<div class="t" style="left:608.5px;top:615.594px;width:45.5px;height:17.806px;line-height:17.806px;overflow:hidden"><span style="display:inline-block;white-space:pre;transform:scaleX(1.018);transform-origin:0 0;margin-right:0.0202em">18</span><span style="display:inline-block;white-space:pre;transform:scaleX(0.897);transform-origin:0 0;margin-right:-0.0287em">.</span><span style="display:inline-block;white-space:pre;transform:scaleX(1.018);transform-origin:0 0;margin-right:0.0101em">2</span><span style="display:inline-block;white-space:pre;transform:scaleX(0.897);transform-origin:0 0;margin-right:-0.0287em">.</span><span style="display:inline-block;white-space:pre;transform:scaleX(1.018);transform-origin:0 0;margin-right:0.0304em">202</span></div>
<div class="t" style="left:176px;top:633.4000000000001px;width:21px;height:17.806px;line-height:17.806px;text-align:center"><span style="display:inline-block;white-space:pre;transform:scaleX(0.843);transform-origin:0 0;margin-right:-0.1131em">D</span><span style="display:inline-block;white-space:pre;transform:scaleX(0.897);transform-origin:0 0;margin-right:-0.0575em">_</span></div>
<div style="left:200.5px;top:646.5500000000001px;width:6.3px;height:1.3px;background:#262626"></div>
<div class="t" style="left:210px;top:633.4000000000001px;height:17.806px;line-height:17.806px;"><span style="display:inline-block;white-space:pre;transform:scaleX(1.018);transform-origin:0 0;margin-right:0.0405em">2026</span><span style="display:inline-block;white-space:pre;transform:scaleX(0.897);transform-origin:0 0;margin-right:-0.0344em">-</span><span style="display:inline-block;white-space:pre;transform:scaleX(1.018);transform-origin:0 0;margin-right:0.0202em">50</span><span style="display:inline-block;white-space:pre;transform:scaleX(0.897);transform-origin:0 0;margin-right:-0.0344em">-</span><span style="display:inline-block;white-space:pre;transform:scaleX(1.018);transform-origin:0 0;margin-right:0.0405em">0014</span></div>
<div class="t" style="left:321px;top:633.4000000000001px;width:194px;height:17.806px;line-height:17.806px;overflow:hidden"><span style="display:inline-block;white-space:pre;transform:scaleX(0.843);transform-origin:0 0;margin-right:-0.1045em">B</span><span style="display:inline-block;white-space:pre;transform:scaleX(1.012);transform-origin:0 0;margin-right:0.0215em">erta</span></div>
<div class="t" style="right:895.5px;top:633.4000000000001px;height:17.806px;line-height:17.806px;text-align:right;"><span style="display:inline-block;white-space:pre;transform:scaleX(1.018);transform-origin:0 0;margin-right:0.0101em">1</span><span style="white-space:pre"> </span><span style="display:inline-block;white-space:pre;transform:scaleX(1.018);transform-origin:0 0;margin-right:0.0304em">650</span><span style="display:inline-block;white-space:pre;transform:scaleX(0.897);transform-origin:0 0;margin-right:-0.0287em">,</span><span style="display:inline-block;white-space:pre;transform:scaleX(1.018);transform-origin:0 0;margin-right:0.0202em">00</span></div>
<div class="t" style="left:608.5px;top:633.4000000000001px;width:45.5px;height:17.806px;line-height:17.806px;overflow:hidden"><span style="display:inline-block;white-space:pre;transform:scaleX(1.018);transform-origin:0 0;margin-right:0.0202em">20</span><span style="display:inline-block;white-space:pre;transform:scaleX(0.897);transform-origin:0 0;margin-right:-0.0287em">.</span><span style="display:inline-block;white-space:pre;transform:scaleX(1.018);transform-origin:0 0;margin-right:0.0101em">2</span><span style="display:inline-block;white-space:pre;transform:scaleX(0.897);transform-origin:0 0;margin-right:-0.0287em">.</span><span style="display:inline-block;white-space:pre;transform:scaleX(1.018);transform-origin:0 0;margin-right:0.0304em">202</span></div>
<div class="t" style="left:176px;top:651.206px;width:21px;height:17.806px;line-height:17.806px;text-align:center"><span style="display:inline-block;white-space:pre;transform:scaleX(0.843);transform-origin:0 0;margin-right:-0.1131em">D</span><span style="display:inline-block;white-space:pre;transform:scaleX(0.897);transform-origin:0 0;margin-right:-0.0575em">_</span></div>
<div style="left:200.5px;top:664.356px;width:6.3px;height:1.3px;background:#262626"></div>
<div class="t" style="left:210px;top:651.206px;height:17.806px;line-height:17.806px;"><span style="display:inline-block;white-space:pre;transform:scaleX(1.018);transform-origin:0 0;margin-right:0.0405em">2026</span><span style="display:inline-block;white-space:pre;transform:scaleX(0.897);transform-origin:0 0;margin-right:-0.0344em">-</span><span style="display:inline-block;white-space:pre;transform:scaleX(1.018);transform-origin:0 0;margin-right:0.0202em">50</span><span style="display:inline-block;white-space:pre;transform:scaleX(0.897);transform-origin:0 0;margin-right:-0.0344em">-</span><span style="display:inline-block;white-space:pre;transform:scaleX(1.018);transform-origin:0 0;margin-right:0.0405em">0015</span></div>
<div class="t" style="left:321px;top:651.206px;width:194px;height:17.806px;line-height:17.806px;overflow:hidden"><span style="display:inline-block;white-space:pre;transform:scaleX(0.897);transform-origin:0 0;margin-right:-0.0367em">&quot;</span><span style="display:inline-block;white-space:pre;transform:scaleX(0.843);transform-origin:0 0;margin-right:-0.6612em">FARMER</span><span style="display:inline-block;white-space:pre;transform:scaleX(0.897);transform-origin:0 0;margin-right:-0.0367em">&quot;</span><span style="white-space:pre"> </span><span style="display:inline-block;white-space:pre;transform:scaleX(0.843);transform-origin:0 0;margin-right:-0.4786em">RANIŚ</span><span style="white-space:pre"> </span><span style="display:inline-block;white-space:pre;transform:scaleX(0.897);transform-origin:0 0;margin-right:-0.0344em">-</span><span style="white-space:pre"> </span><span style="display:inline-block;white-space:pre;transform:scaleX(0.843);transform-origin:0 0;margin-right:-0.8615em">ZMYŚLONY</span><span style="white-space:pre"> </span><span style="display:inline-block;white-space:pre;transform:scaleX(0.843);transform-origin:0 0;margin-right:-0.4178em">SPÓŁ</span></div>
<div class="t" style="right:895.5px;top:651.206px;height:17.806px;line-height:17.806px;text-align:right;"><span style="display:inline-block;white-space:pre;transform:scaleX(1.018);transform-origin:0 0;margin-right:0.0101em">1</span><span style="white-space:pre"> </span><span style="display:inline-block;white-space:pre;transform:scaleX(1.018);transform-origin:0 0;margin-right:0.0304em">650</span><span style="display:inline-block;white-space:pre;transform:scaleX(0.897);transform-origin:0 0;margin-right:-0.0287em">,</span><span style="display:inline-block;white-space:pre;transform:scaleX(1.018);transform-origin:0 0;margin-right:0.0202em">00</span></div>
<div class="t" style="left:608.5px;top:651.206px;width:45.5px;height:17.806px;line-height:17.806px;overflow:hidden"><span style="display:inline-block;white-space:pre;transform:scaleX(1.018);transform-origin:0 0;margin-right:0.0202em">20</span><span style="display:inline-block;white-space:pre;transform:scaleX(0.897);transform-origin:0 0;margin-right:-0.0287em">.</span><span style="display:inline-block;white-space:pre;transform:scaleX(1.018);transform-origin:0 0;margin-right:0.0101em">2</span><span style="display:inline-block;white-space:pre;transform:scaleX(0.897);transform-origin:0 0;margin-right:-0.0287em">.</span><span style="display:inline-block;white-space:pre;transform:scaleX(1.018);transform-origin:0 0;margin-right:0.0304em">202</span></div>
<div class="t" style="left:176px;top:669.012px;width:21px;height:17.806px;line-height:17.806px;text-align:center"><span style="display:inline-block;white-space:pre;transform:scaleX(0.843);transform-origin:0 0;margin-right:-0.1131em">D</span><span style="display:inline-block;white-space:pre;transform:scaleX(0.897);transform-origin:0 0;margin-right:-0.0575em">_</span></div>
<div style="left:200.5px;top:682.1619999999999px;width:6.3px;height:1.3px;background:#262626"></div>
<div class="t" style="left:210px;top:669.012px;height:17.806px;line-height:17.806px;"><span style="display:inline-block;white-space:pre;transform:scaleX(1.018);transform-origin:0 0;margin-right:0.0405em">2026</span><span style="display:inline-block;white-space:pre;transform:scaleX(0.897);transform-origin:0 0;margin-right:-0.0344em">-</span><span style="display:inline-block;white-space:pre;transform:scaleX(1.018);transform-origin:0 0;margin-right:0.0202em">50</span><span style="display:inline-block;white-space:pre;transform:scaleX(0.897);transform-origin:0 0;margin-right:-0.0344em">-</span><span style="display:inline-block;white-space:pre;transform:scaleX(1.018);transform-origin:0 0;margin-right:0.0405em">0016</span></div>
<div class="t" style="left:321px;top:669.012px;width:194px;height:17.806px;line-height:17.806px;overflow:hidden"><span style="display:inline-block;white-space:pre;transform:scaleX(0.843);transform-origin:0 0;margin-right:-0.1304em">M</span><span style="display:inline-block;white-space:pre;transform:scaleX(1.012);transform-origin:0 0;margin-right:0.0195em">ilan</span><span style="white-space:pre"> </span><span style="display:inline-block;white-space:pre;transform:scaleX(0.843);transform-origin:0 0;margin-right:-0.1045em">K</span><span style="display:inline-block;white-space:pre;transform:scaleX(1.012);transform-origin:0 0;margin-right:0.0139em">rál</span></div>
<div class="t" style="right:895.5px;top:669.012px;height:17.806px;line-height:17.806px;text-align:right;"><span style="display:inline-block;white-space:pre;transform:scaleX(1.018);transform-origin:0 0;margin-right:0.0101em">1</span><span style="white-space:pre"> </span><span style="display:inline-block;white-space:pre;transform:scaleX(1.018);transform-origin:0 0;margin-right:0.0304em">650</span><span style="display:inline-block;white-space:pre;transform:scaleX(0.897);transform-origin:0 0;margin-right:-0.0287em">,</span><span style="display:inline-block;white-space:pre;transform:scaleX(1.018);transform-origin:0 0;margin-right:0.0202em">00</span></div>
<div class="t" style="left:608.5px;top:669.012px;width:45.5px;height:17.806px;line-height:17.806px;overflow:hidden"><span style="display:inline-block;white-space:pre;transform:scaleX(1.018);transform-origin:0 0;margin-right:0.0202em">20</span><span style="display:inline-block;white-space:pre;transform:scaleX(0.897);transform-origin:0 0;margin-right:-0.0287em">.</span><span style="display:inline-block;white-space:pre;transform:scaleX(1.018);transform-origin:0 0;margin-right:0.0101em">2</span><span style="display:inline-block;white-space:pre;transform:scaleX(0.897);transform-origin:0 0;margin-right:-0.0287em">.</span><span style="display:inline-block;white-space:pre;transform:scaleX(1.018);transform-origin:0 0;margin-right:0.0304em">202</span></div>
<div class="t" style="left:176px;top:686.818px;width:21px;height:17.806px;line-height:17.806px;text-align:center"><span style="display:inline-block;white-space:pre;transform:scaleX(0.843);transform-origin:0 0;margin-right:-0.1131em">D</span><span style="display:inline-block;white-space:pre;transform:scaleX(0.897);transform-origin:0 0;margin-right:-0.0575em">_</span></div>
<div style="left:200.5px;top:699.968px;width:6.3px;height:1.3px;background:#262626"></div>
<div class="t" style="left:210px;top:686.818px;height:17.806px;line-height:17.806px;"><span style="display:inline-block;white-space:pre;transform:scaleX(1.018);transform-origin:0 0;margin-right:0.0405em">2026</span><span style="display:inline-block;white-space:pre;transform:scaleX(0.897);transform-origin:0 0;margin-right:-0.0344em">-</span><span style="display:inline-block;white-space:pre;transform:scaleX(1.018);transform-origin:0 0;margin-right:0.0202em">50</span><span style="display:inline-block;white-space:pre;transform:scaleX(0.897);transform-origin:0 0;margin-right:-0.0344em">-</span><span style="display:inline-block;white-space:pre;transform:scaleX(1.018);transform-origin:0 0;margin-right:0.0405em">0017</span></div>
<div class="t" style="left:321px;top:686.818px;width:194px;height:17.806px;line-height:17.806px;overflow:hidden"><span style="display:inline-block;white-space:pre;transform:scaleX(0.843);transform-origin:0 0;margin-right:-0.1045em">P</span><span style="display:inline-block;white-space:pre;transform:scaleX(1.012);transform-origin:0 0;margin-right:0.0285em">olský</span><span style="white-space:pre"> </span><span style="display:inline-block;white-space:pre;transform:scaleX(1.012);transform-origin:0 0;margin-right:0.0292em">klient</span><span style="white-space:pre"> </span><span style="display:inline-block;white-space:pre;transform:scaleX(1.012);transform-origin:0 0;margin-right:0.0403em">chybně</span></div>
<div class="t" style="right:895.5px;top:686.818px;height:17.806px;line-height:17.806px;text-align:right;"><span style="display:inline-block;white-space:pre;transform:scaleX(1.018);transform-origin:0 0;margin-right:0.0101em">1</span><span style="white-space:pre"> </span><span style="display:inline-block;white-space:pre;transform:scaleX(1.018);transform-origin:0 0;margin-right:0.0304em">650</span><span style="display:inline-block;white-space:pre;transform:scaleX(0.897);transform-origin:0 0;margin-right:-0.0287em">,</span><span style="display:inline-block;white-space:pre;transform:scaleX(1.018);transform-origin:0 0;margin-right:0.0202em">00</span></div>
<div class="t" style="left:608.5px;top:686.818px;width:45.5px;height:17.806px;line-height:17.806px;overflow:hidden"><span style="display:inline-block;white-space:pre;transform:scaleX(1.018);transform-origin:0 0;margin-right:0.0202em">20</span><span style="display:inline-block;white-space:pre;transform:scaleX(0.897);transform-origin:0 0;margin-right:-0.0287em">.</span><span style="display:inline-block;white-space:pre;transform:scaleX(1.018);transform-origin:0 0;margin-right:0.0101em">2</span><span style="display:inline-block;white-space:pre;transform:scaleX(0.897);transform-origin:0 0;margin-right:-0.0287em">.</span><span style="display:inline-block;white-space:pre;transform:scaleX(1.018);transform-origin:0 0;margin-right:0.0304em">202</span></div>
<div style="left:176px;top:705.374px;width:21px;height:15.806000000000001px;background:#e2452f"></div>
<div class="t" style="left:176px;top:704.624px;width:21px;height:17.806px;line-height:17.806px;text-align:center"><span style="display:inline-block;white-space:pre;transform:scaleX(0.843);transform-origin:0 0;margin-right:-0.0957em">F</span><span style="display:inline-block;white-space:pre;transform:scaleX(0.897);transform-origin:0 0;margin-right:-0.0575em">_</span></div>
<div style="left:200.5px;top:717.774px;width:6.3px;height:1.3px;background:#262626"></div>
<div class="t" style="left:210px;top:704.624px;height:17.806px;line-height:17.806px;"><span style="display:inline-block;white-space:pre;transform:scaleX(1.018);transform-origin:0 0;margin-right:0.0405em">2026</span><span style="display:inline-block;white-space:pre;transform:scaleX(0.897);transform-origin:0 0;margin-right:-0.0344em">-</span><span style="display:inline-block;white-space:pre;transform:scaleX(1.018);transform-origin:0 0;margin-right:0.0202em">50</span><span style="display:inline-block;white-space:pre;transform:scaleX(0.897);transform-origin:0 0;margin-right:-0.0344em">-</span><span style="display:inline-block;white-space:pre;transform:scaleX(1.018);transform-origin:0 0;margin-right:0.0405em">0018</span></div>
<div class="t" style="left:321px;top:704.624px;width:194px;height:17.806px;line-height:17.806px;overflow:hidden"><span style="display:inline-block;white-space:pre;transform:scaleX(0.843);transform-origin:0 0;margin-right:-0.5047em">DELTA</span><span style="white-space:pre"> </span><span style="display:inline-block;white-space:pre;transform:scaleX(0.843);transform-origin:0 0;margin-right:-0.1045em">S</span><span style="display:inline-block;white-space:pre;transform:scaleX(1.012);transform-origin:0 0;margin-right:0.0340em">vratka</span><span style="white-space:pre"> </span><span style="display:inline-block;white-space:pre;transform:scaleX(1.012);transform-origin:0 0;margin-right:0.0062em">s</span><span style="display:inline-block;white-space:pre;transform:scaleX(0.897);transform-origin:0 0;margin-right:-0.0287em">.</span><span style="display:inline-block;white-space:pre;transform:scaleX(1.012);transform-origin:0 0;margin-right:0.0042em">r</span><span style="display:inline-block;white-space:pre;transform:scaleX(0.897);transform-origin:0 0;margin-right:-0.0287em">.</span><span style="display:inline-block;white-space:pre;transform:scaleX(1.012);transform-origin:0 0;margin-right:0.0070em">o</span><span style="display:inline-block;white-space:pre;transform:scaleX(0.897);transform-origin:0 0;margin-right:-0.0287em">.</span></div>
<div class="t" style="right:895.5px;top:704.624px;height:17.806px;line-height:17.806px;text-align:right;"><span style="display:inline-block;white-space:pre;transform:scaleX(0.897);transform-origin:0 0;margin-right:-0.0344em">-</span><span style="display:inline-block;white-space:pre;transform:scaleX(1.018);transform-origin:0 0;margin-right:0.0101em">1</span><span style="white-space:pre"> </span><span style="display:inline-block;white-space:pre;transform:scaleX(1.018);transform-origin:0 0;margin-right:0.0304em">700</span><span style="display:inline-block;white-space:pre;transform:scaleX(0.897);transform-origin:0 0;margin-right:-0.0287em">,</span><span style="display:inline-block;white-space:pre;transform:scaleX(1.018);transform-origin:0 0;margin-right:0.0202em">00</span></div>
<div class="t" style="left:608.5px;top:704.624px;width:45.5px;height:17.806px;line-height:17.806px;overflow:hidden"><span style="display:inline-block;white-space:pre;transform:scaleX(1.018);transform-origin:0 0;margin-right:0.0202em">23</span><span style="display:inline-block;white-space:pre;transform:scaleX(0.897);transform-origin:0 0;margin-right:-0.0287em">.</span><span style="display:inline-block;white-space:pre;transform:scaleX(1.018);transform-origin:0 0;margin-right:0.0101em">2</span><span style="display:inline-block;white-space:pre;transform:scaleX(0.897);transform-origin:0 0;margin-right:-0.0287em">.</span><span style="display:inline-block;white-space:pre;transform:scaleX(1.018);transform-origin:0 0;margin-right:0.0304em">202</span></div>
<div style="left:176px;top:723.1800000000001px;width:21px;height:15.806000000000001px;background:#e2452f"></div>
<div class="t" style="left:176px;top:722.4300000000001px;width:21px;height:17.806px;line-height:17.806px;text-align:center"><span style="display:inline-block;white-space:pre;transform:scaleX(0.843);transform-origin:0 0;margin-right:-0.0957em">F</span><span style="display:inline-block;white-space:pre;transform:scaleX(0.897);transform-origin:0 0;margin-right:-0.0575em">_</span></div>
<div style="left:200.5px;top:735.58px;width:6.3px;height:1.3px;background:#262626"></div>
<div class="t" style="left:210px;top:722.4300000000001px;height:17.806px;line-height:17.806px;"><span style="display:inline-block;white-space:pre;transform:scaleX(1.018);transform-origin:0 0;margin-right:0.0405em">2026</span><span style="display:inline-block;white-space:pre;transform:scaleX(0.897);transform-origin:0 0;margin-right:-0.0344em">-</span><span style="display:inline-block;white-space:pre;transform:scaleX(1.018);transform-origin:0 0;margin-right:0.0202em">50</span><span style="display:inline-block;white-space:pre;transform:scaleX(0.897);transform-origin:0 0;margin-right:-0.0344em">-</span><span style="display:inline-block;white-space:pre;transform:scaleX(1.018);transform-origin:0 0;margin-right:0.0405em">0019</span></div>
<div class="t" style="left:321px;top:722.4300000000001px;width:194px;height:17.806px;line-height:17.806px;overflow:hidden"><span style="display:inline-block;white-space:pre;transform:scaleX(0.843);transform-origin:0 0;margin-right:-0.5047em">DELTA</span><span style="white-space:pre"> </span><span style="display:inline-block;white-space:pre;transform:scaleX(0.843);transform-origin:0 0;margin-right:-0.1045em">S</span><span style="display:inline-block;white-space:pre;transform:scaleX(1.012);transform-origin:0 0;margin-right:0.0340em">vratka</span><span style="white-space:pre"> </span><span style="display:inline-block;white-space:pre;transform:scaleX(1.012);transform-origin:0 0;margin-right:0.0062em">s</span><span style="display:inline-block;white-space:pre;transform:scaleX(0.897);transform-origin:0 0;margin-right:-0.0287em">.</span><span style="display:inline-block;white-space:pre;transform:scaleX(1.012);transform-origin:0 0;margin-right:0.0042em">r</span><span style="display:inline-block;white-space:pre;transform:scaleX(0.897);transform-origin:0 0;margin-right:-0.0287em">.</span><span style="display:inline-block;white-space:pre;transform:scaleX(1.012);transform-origin:0 0;margin-right:0.0070em">o</span><span style="display:inline-block;white-space:pre;transform:scaleX(0.897);transform-origin:0 0;margin-right:-0.0287em">.</span></div>
<div class="t" style="right:895.5px;top:722.4300000000001px;height:17.806px;line-height:17.806px;text-align:right;"><span style="display:inline-block;white-space:pre;transform:scaleX(0.897);transform-origin:0 0;margin-right:-0.0344em">-</span><span style="display:inline-block;white-space:pre;transform:scaleX(1.018);transform-origin:0 0;margin-right:0.0101em">1</span><span style="white-space:pre"> </span><span style="display:inline-block;white-space:pre;transform:scaleX(1.018);transform-origin:0 0;margin-right:0.0304em">650</span><span style="display:inline-block;white-space:pre;transform:scaleX(0.897);transform-origin:0 0;margin-right:-0.0287em">,</span><span style="display:inline-block;white-space:pre;transform:scaleX(1.018);transform-origin:0 0;margin-right:0.0202em">00</span></div>
<div class="t" style="left:608.5px;top:722.4300000000001px;width:45.5px;height:17.806px;line-height:17.806px;overflow:hidden"><span style="display:inline-block;white-space:pre;transform:scaleX(1.018);transform-origin:0 0;margin-right:0.0202em">23</span><span style="display:inline-block;white-space:pre;transform:scaleX(0.897);transform-origin:0 0;margin-right:-0.0287em">.</span><span style="display:inline-block;white-space:pre;transform:scaleX(1.018);transform-origin:0 0;margin-right:0.0101em">2</span><span style="display:inline-block;white-space:pre;transform:scaleX(0.897);transform-origin:0 0;margin-right:-0.0287em">.</span><span style="display:inline-block;white-space:pre;transform:scaleX(1.018);transform-origin:0 0;margin-right:0.0304em">202</span></div>
<div style="left:176px;top:740.986px;width:21px;height:15.806000000000001px;background:#e2452f"></div>
<div class="t" style="left:176px;top:740.236px;width:21px;height:17.806px;line-height:17.806px;text-align:center"><span style="display:inline-block;white-space:pre;transform:scaleX(0.843);transform-origin:0 0;margin-right:-0.0957em">F</span><span style="display:inline-block;white-space:pre;transform:scaleX(0.897);transform-origin:0 0;margin-right:-0.0575em">_</span></div>
<div style="left:200.5px;top:753.386px;width:6.3px;height:1.3px;background:#262626"></div>
<div class="t" style="left:210px;top:740.236px;height:17.806px;line-height:17.806px;"><span style="display:inline-block;white-space:pre;transform:scaleX(1.018);transform-origin:0 0;margin-right:0.0405em">2026</span><span style="display:inline-block;white-space:pre;transform:scaleX(0.897);transform-origin:0 0;margin-right:-0.0344em">-</span><span style="display:inline-block;white-space:pre;transform:scaleX(1.018);transform-origin:0 0;margin-right:0.0202em">50</span><span style="display:inline-block;white-space:pre;transform:scaleX(0.897);transform-origin:0 0;margin-right:-0.0344em">-</span><span style="display:inline-block;white-space:pre;transform:scaleX(1.018);transform-origin:0 0;margin-right:0.0405em">0020</span></div>
<div class="t" style="left:321px;top:740.236px;width:194px;height:17.806px;line-height:17.806px;overflow:hidden"><span style="display:inline-block;white-space:pre;transform:scaleX(0.843);transform-origin:0 0;margin-right:-0.5047em">DELTA</span><span style="white-space:pre"> </span><span style="display:inline-block;white-space:pre;transform:scaleX(0.843);transform-origin:0 0;margin-right:-0.1045em">S</span><span style="display:inline-block;white-space:pre;transform:scaleX(1.012);transform-origin:0 0;margin-right:0.0340em">vratka</span><span style="white-space:pre"> </span><span style="display:inline-block;white-space:pre;transform:scaleX(1.012);transform-origin:0 0;margin-right:0.0062em">s</span><span style="display:inline-block;white-space:pre;transform:scaleX(0.897);transform-origin:0 0;margin-right:-0.0287em">.</span><span style="display:inline-block;white-space:pre;transform:scaleX(1.012);transform-origin:0 0;margin-right:0.0042em">r</span><span style="display:inline-block;white-space:pre;transform:scaleX(0.897);transform-origin:0 0;margin-right:-0.0287em">.</span><span style="display:inline-block;white-space:pre;transform:scaleX(1.012);transform-origin:0 0;margin-right:0.0070em">o</span><span style="display:inline-block;white-space:pre;transform:scaleX(0.897);transform-origin:0 0;margin-right:-0.0287em">.</span></div>
<div class="t" style="right:895.5px;top:740.236px;height:17.806px;line-height:17.806px;text-align:right;"><span style="display:inline-block;white-space:pre;transform:scaleX(1.018);transform-origin:0 0;margin-right:0.0202em">20</span><span style="display:inline-block;white-space:pre;transform:scaleX(0.897);transform-origin:0 0;margin-right:-0.0287em">,</span><span style="display:inline-block;white-space:pre;transform:scaleX(1.018);transform-origin:0 0;margin-right:0.0202em">00</span></div>
<div class="t" style="left:608.5px;top:740.236px;width:45.5px;height:17.806px;line-height:17.806px;overflow:hidden"><span style="display:inline-block;white-space:pre;transform:scaleX(1.018);transform-origin:0 0;margin-right:0.0202em">23</span><span style="display:inline-block;white-space:pre;transform:scaleX(0.897);transform-origin:0 0;margin-right:-0.0287em">.</span><span style="display:inline-block;white-space:pre;transform:scaleX(1.018);transform-origin:0 0;margin-right:0.0101em">2</span><span style="display:inline-block;white-space:pre;transform:scaleX(0.897);transform-origin:0 0;margin-right:-0.0287em">.</span><span style="display:inline-block;white-space:pre;transform:scaleX(1.018);transform-origin:0 0;margin-right:0.0304em">202</span></div>
<div style="left:162px;top:187px;width:491px;height:17.306px;border:1px dotted #222;border-left:none"></div>
<div style="left:161px;top:765px;width:507px;height:14px;background:#efefef"></div>
<div style="left:177px;top:771px;width:148px;height:2px;background:#7d7d7d"></div>
<div style="left:158px;top:788px;width:1184px;height:1px;background:#dedede"></div>
<div style="left:158px;top:789px;width:1184px;height:16.5px;background:#f7f7f7;border-radius:0 0 7px 7px"></div>
<div style="left:159px;top:789px;width:16px;height:16px"><svg width="16" height="16"><circle cx="8" cy="8" r="6.5" fill="#fff" stroke="#a6c8ef" stroke-width="1"/><rect x="7.2" y="6.3" width="1.6" height="5.2" fill="#2f6fd6"/><rect x="7.2" y="4" width="1.6" height="1.5" fill="#2f6fd6"/></svg></div>
<div style="left:1245px;top:790px;width:1px;height:16px;background:#dcdcdc"></div>
<div class="t" style="left:1300px;top:789px;height:17px;line-height:17px;font-size:11px"><span style="display:inline-block;white-space:pre;transform:scaleX(1.018);transform-origin:0 0;margin-right:0.0101em">1</span><span style="display:inline-block;white-space:pre;transform:scaleX(0.897);transform-origin:0 0;margin-right:-0.0287em">/</span><span style="display:inline-block;white-space:pre;transform:scaleX(1.018);transform-origin:0 0;margin-right:0.0202em">46</span></div>
<div style="left:1330px;top:793px;width:13px;height:13px"><svg width="13" height="13"><path d="M12.5 3 L3 12.5 M12.5 7.5 L7.5 12.5" stroke="#9bb5c2" stroke-width="0.9"/></svg></div>
<div class="t" style="left:680px;top:172px;height:19px;line-height:19px;color:#6f7380;-webkit-text-stroke:0.1px currentColor;font-size:10.6px"><span style="display:inline-block;white-space:pre;transform:scaleX(0.843);transform-origin:0 0;margin-right:-0.1045em">Š</span><span style="display:inline-block;white-space:pre;transform:scaleX(1.012);transform-origin:0 0;margin-right:0.0375em">ablona</span><span style="display:inline-block;white-space:pre;transform:scaleX(0.897);transform-origin:0 0;margin-right:-0.0287em">:</span></div>
<div class="inp" style="left:725px;top:173px;width:29px;height:16px;line-height:16px;"><span style=""></span></div>
<div class="inp" style="left:759px;top:173px;width:166px;height:16px;line-height:16px;"><span style=""></span></div>
<div style="left:932.5px;top:174.5px;width:16px;height:16px"><svg width="16" height="16" viewBox="0 0 16 16"><path d="M1.3 13.5 V3.2 Q1.3 2.5 2 2.5 H4.3 L5.6 3.8 H10.7 Q11.5 3.8 11.5 4.6 V6.6" fill="#fff" stroke="#3b7fde" stroke-width="1.1"/><path d="M1.3 14.3 L3.2 6.9 H15.4 L13.4 14.3 Z" fill="#98cdfb" stroke="#3b7fde" stroke-width="1.1" stroke-linejoin="round"/><path d="M6.5 2.6 Q10 -0.6 13.6 2.4" fill="none" stroke="#3b7fde" stroke-width="1"/><path d="M14.6 1.4 L14.4 4.2 L11.9 3.4 Z" fill="#3b7fde"/></svg></div>
<div style="left:673.5px;top:219px;width:577.5px;height:131px;background:#f7f7f7;border:1px solid #e1e1e1;border-bottom:none"></div>
<div style="left:760px;top:199px;width:89.70000000000005px;height:20px;background:#ececec;border:1px solid #e2e2e2;border-bottom:none"></div>
<div class="t" style="left:764px;top:199px;height:21px;line-height:21px;color:#1d1d2a;font-size:10.2px"><span style="display:inline-block;white-space:pre;transform:scaleX(0.843);transform-origin:0 0;margin-right:-0.1131em">R</span><span style="display:inline-block;white-space:pre;transform:scaleX(1.012);transform-origin:0 0;margin-right:0.0479em">ozšířené</span><span style="white-space:pre"> </span><span style="display:inline-block;white-space:pre;transform:scaleX(1.012);transform-origin:0 0;margin-right:0.0229em">filtry</span></div>
<div style="left:850.7px;top:199px;width:62.299999999999955px;height:20px;background:#ececec;border:1px solid #e2e2e2;border-bottom:none"></div>
<div class="t" style="left:856.5px;top:199px;height:21px;line-height:21px;color:#1d1d2a;font-size:10.2px"><span style="display:inline-block;white-space:pre;transform:scaleX(0.843);transform-origin:0 0;margin-right:-0.1045em">S</span><span style="display:inline-block;white-space:pre;transform:scaleX(1.012);transform-origin:0 0;margin-right:0.0452em">peciality</span></div>
<div style="left:914px;top:199px;width:21.5px;height:20px;background:#ececec;border:1px solid #e2e2e2;border-bottom:none"></div>
<div class="t" style="left:919px;top:199px;height:21px;line-height:21px;color:#1d1d2a;font-size:10.2px"><span style="display:inline-block;white-space:pre;transform:scaleX(0.843);transform-origin:0 0;margin-right:-0.1653em">IQ</span></div>
<div style="left:936.5px;top:199px;width:63.5px;height:20px;background:#ececec;border:1px solid #e2e2e2;border-bottom:none"></div>
<div class="t" style="left:942.7px;top:199px;height:21px;line-height:21px;color:#1d1d2a;font-size:10.2px"><span style="display:inline-block;white-space:pre;transform:scaleX(0.843);transform-origin:0 0;margin-right:-0.0957em">Z</span><span style="display:inline-block;white-space:pre;transform:scaleX(1.012);transform-origin:0 0;margin-right:0.0486em">obrazení</span></div>
<div style="left:1001px;top:199px;width:80.40000000000009px;height:20px;background:#ececec;border:1px solid #e2e2e2;border-bottom:none"></div>
<div class="t" style="left:1006px;top:199px;height:21px;line-height:21px;color:#1d1d2a;font-size:10.2px"><span style="display:inline-block;white-space:pre;transform:scaleX(0.843);transform-origin:0 0;margin-right:-0.0957em">F</span><span style="display:inline-block;white-space:pre;transform:scaleX(1.012);transform-origin:0 0;margin-right:0.0194em">iltry</span><span style="white-space:pre"> </span><span style="display:inline-block;white-space:pre;transform:scaleX(1.012);transform-origin:0 0;margin-right:0.0167em">dle</span><span style="white-space:pre"> </span><span style="display:inline-block;white-space:pre;transform:scaleX(0.843);transform-origin:0 0;margin-right:-0.3306em">WFL</span></div>
<div style="left:1082.4px;top:199px;width:44.59999999999991px;height:20px;background:#ececec;border:1px solid #e2e2e2;border-bottom:none"></div>
<div class="t" style="left:1087.5px;top:199px;height:21px;line-height:21px;color:#1d1d2a;font-size:10.2px"><span style="display:inline-block;white-space:pre;transform:scaleX(0.843);transform-origin:0 0;margin-right:-0.1045em">E</span><span style="display:inline-block;white-space:pre;transform:scaleX(1.012);transform-origin:0 0;margin-right:0.0278em">xport</span></div>
<div style="left:673.5px;top:197px;width:86px;height:23px;background:#f7f7f7;border:1px solid #e1e1e1;border-bottom:none"></div>
<div class="t" style="left:680.5px;top:198px;height:20px;line-height:20px;font-weight:bold;font-size:11px"><span style="display:inline-block;white-space:pre;transform:scaleX(0.843);transform-origin:0 0;margin-right:-0.0957em">Z</span><span style="display:inline-block;white-space:pre;transform:scaleX(1.012);transform-origin:0 0;margin-right:0.0431em">ákladní</span><span style="white-space:pre"> </span><span style="display:inline-block;white-space:pre;transform:scaleX(1.012);transform-origin:0 0;margin-right:0.0271em">filtry</span></div>
<div class="inp" style="left:680px;top:224.5px;width:73px;height:15.5px;line-height:15.5px;"><span style=""><span style="display:inline-block;white-space:pre;transform:scaleX(0.843);transform-origin:0 0;margin-right:-0.1131em">D</span><span style="display:inline-block;white-space:pre;transform:scaleX(1.012);transform-origin:0 0;margin-right:0.0299em">oklad</span></span></div>
<div class="t" style="left:756.5px;top:224.5px;height:17px;line-height:17px;color:#6f7380;-webkit-text-stroke:0.1px currentColor;font-size:10.6px"><span style="display:inline-block;white-space:pre;transform:scaleX(1.012);transform-origin:0 0;margin-right:0.0139em">od</span></div>
<div class="inp" style="left:772.5px;top:224.5px;width:103px;height:15.5px;line-height:15.5px;"><span style=""></span></div>
<div style="left:881px;top:228.5px;width:14px;height:11px"><svg width="14" height="11" viewBox="0 0 14 11"><path d="M0.5 4 H7.5 V0.5 L13.3 5.3 L7.5 10.3 V6.8 H0.5 Z" fill="#6fb0f4" stroke="#3b86e0" stroke-width="0.9" stroke-linejoin="round"/></svg></div>
<div class="t" style="left:898.5px;top:224.5px;height:17px;line-height:17px;color:#6f7380;-webkit-text-stroke:0.1px currentColor;font-size:10.6px"><span style="display:inline-block;white-space:pre;transform:scaleX(1.012);transform-origin:0 0;margin-right:0.0139em">do</span></div>
<div class="inp" style="left:915px;top:224.5px;width:103px;height:15.5px;line-height:15.5px;"><span style=""></span></div>
<div style="left:1023.5px;top:225px;width:16px;height:16px"><svg width="16" height="16" viewBox="0 0 16 16"><path d="M1.3 13.5 V3.2 Q1.3 2.5 2 2.5 H4.3 L5.6 3.8 H10.7 Q11.5 3.8 11.5 4.6 V6.6" fill="#fff" stroke="#3b7fde" stroke-width="1.1"/><path d="M1.3 14.3 L3.2 6.9 H15.4 L13.4 14.3 Z" fill="#98cdfb" stroke="#3b7fde" stroke-width="1.1" stroke-linejoin="round"/><path d="M6.5 2.6 Q10 -0.6 13.6 2.4" fill="none" stroke="#3b7fde" stroke-width="1"/><path d="M14.6 1.4 L14.4 4.2 L11.9 3.4 Z" fill="#3b7fde"/></svg></div>
<div class="inp" style="left:680px;top:245.5px;width:73px;height:15.5px;line-height:15.5px;"><span style=""><span style="display:inline-block;white-space:pre;transform:scaleX(0.843);transform-origin:0 0;margin-right:-0.1131em">D</span><span style="display:inline-block;white-space:pre;transform:scaleX(1.012);transform-origin:0 0;margin-right:0.0104em">at</span><span style="display:inline-block;white-space:pre;transform:scaleX(0.897);transform-origin:0 0;margin-right:-0.0287em">.</span><span style="display:inline-block;white-space:pre;transform:scaleX(1.012);transform-origin:0 0;margin-right:0.0354em">vzniku</span></span></div>
<div class="t" style="left:756.5px;top:245.5px;height:17px;line-height:17px;color:#6f7380;-webkit-text-stroke:0.1px currentColor;font-size:10.6px"><span style="display:inline-block;white-space:pre;transform:scaleX(1.012);transform-origin:0 0;margin-right:0.0139em">od</span></div>
<div class="inp" style="left:772.5px;top:245.5px;width:103px;height:15.5px;line-height:15.5px;"><span style=""></span></div>
<div style="left:881px;top:249.5px;width:14px;height:11px"><svg width="14" height="11" viewBox="0 0 14 11"><path d="M0.5 4 H7.5 V0.5 L13.3 5.3 L7.5 10.3 V6.8 H0.5 Z" fill="#6fb0f4" stroke="#3b86e0" stroke-width="0.9" stroke-linejoin="round"/></svg></div>
<div class="t" style="left:898.5px;top:245.5px;height:17px;line-height:17px;color:#6f7380;-webkit-text-stroke:0.1px currentColor;font-size:10.6px"><span style="display:inline-block;white-space:pre;transform:scaleX(1.012);transform-origin:0 0;margin-right:0.0139em">do</span></div>
<div class="inp" style="left:915px;top:245.5px;width:103px;height:15.5px;line-height:15.5px;"><span style=""></span></div>
<div class="inp" style="left:680px;top:266px;width:87px;height:15.5px;line-height:15.5px;"><span style="color:#8a8a8a"><span style="display:inline-block;white-space:pre;transform:scaleX(0.843);transform-origin:0 0;margin-right:-0.1045em">K</span><span style="display:inline-block;white-space:pre;transform:scaleX(1.012);transform-origin:0 0;margin-right:0.0229em">lient</span></span></div>
<div class="inp" style="left:772.5px;top:266px;width:39px;height:15.5px;line-height:15.5px;"><span style=""></span></div>
<div class="inp" style="left:817px;top:266px;width:201px;height:15.5px;line-height:15.5px;"><span style=""></span></div>
<div style="left:1023.5px;top:266.5px;width:16px;height:16px"><svg width="16" height="16" viewBox="0 0 16 16"><path d="M1.3 13.5 V3.2 Q1.3 2.5 2 2.5 H4.3 L5.6 3.8 H10.7 Q11.5 3.8 11.5 4.6 V6.6" fill="#fff" stroke="#3b7fde" stroke-width="1.1"/><path d="M1.3 14.3 L3.2 6.9 H15.4 L13.4 14.3 Z" fill="#98cdfb" stroke="#3b7fde" stroke-width="1.1" stroke-linejoin="round"/><path d="M6.5 2.6 Q10 -0.6 13.6 2.4" fill="none" stroke="#3b7fde" stroke-width="1"/><path d="M14.6 1.4 L14.4 4.2 L11.9 3.4 Z" fill="#3b7fde"/></svg></div>
<div class="t" style="left:680px;top:287px;height:17px;line-height:17px;color:#6f7380;-webkit-text-stroke:0.1px currentColor;font-size:10.6px"><span style="display:inline-block;white-space:pre;transform:scaleX(0.843);transform-origin:0 0;margin-right:-0.1131em">D</span><span style="display:inline-block;white-space:pre;transform:scaleX(1.012);transform-origin:0 0;margin-right:0.0181em">ruh</span><span style="white-space:pre"> </span><span style="display:inline-block;white-space:pre;transform:scaleX(1.012);transform-origin:0 0;margin-right:0.0410em">pohybu</span><span style="white-space:pre"> </span><span style="display:inline-block;white-space:pre;transform:scaleX(0.897);transform-origin:0 0;margin-right:-0.0287em">:</span></div>
<div class="inp" style="left:772.5px;top:287px;width:39px;height:15.5px;line-height:15.5px;"><span style=""></span></div>
<div class="inp" style="left:817px;top:287px;width:201px;height:15.5px;line-height:15.5px;"><span style=""></span></div>
<div style="left:1023.5px;top:287.5px;width:16px;height:16px"><svg width="16" height="16" viewBox="0 0 16 16"><path d="M1.3 13.5 V3.2 Q1.3 2.5 2 2.5 H4.3 L5.6 3.8 H10.7 Q11.5 3.8 11.5 4.6 V6.6" fill="#fff" stroke="#3b7fde" stroke-width="1.1"/><path d="M1.3 14.3 L3.2 6.9 H15.4 L13.4 14.3 Z" fill="#98cdfb" stroke="#3b7fde" stroke-width="1.1" stroke-linejoin="round"/><path d="M6.5 2.6 Q10 -0.6 13.6 2.4" fill="none" stroke="#3b7fde" stroke-width="1"/><path d="M14.6 1.4 L14.4 4.2 L11.9 3.4 Z" fill="#3b7fde"/></svg></div>
<div class="t" style="left:680px;top:307.5px;height:17px;line-height:17px;color:#6f7380;-webkit-text-stroke:0.1px currentColor;font-size:10.6px"><span style="display:inline-block;white-space:pre;transform:scaleX(0.843);transform-origin:0 0;margin-right:-0.1045em">P</span><span style="display:inline-block;white-space:pre;transform:scaleX(1.012);transform-origin:0 0;margin-right:0.0361em">oložka</span><span style="white-space:pre"> </span><span style="display:inline-block;white-space:pre;transform:scaleX(0.897);transform-origin:0 0;margin-right:-0.0287em">:</span></div>
<div class="inp" style="left:772.5px;top:307.5px;width:69px;height:15.5px;line-height:15.5px;"><span style=""></span></div>
<div class="inp" style="left:847px;top:307.5px;width:171px;height:15.5px;line-height:15.5px;"><span style=""></span></div>
<div style="left:1023.5px;top:308.0px;width:16px;height:16px"><svg width="16" height="16" viewBox="0 0 16 16"><path d="M1.3 13.5 V3.2 Q1.3 2.5 2 2.5 H4.3 L5.6 3.8 H10.7 Q11.5 3.8 11.5 4.6 V6.6" fill="#fff" stroke="#3b7fde" stroke-width="1.1"/><path d="M1.3 14.3 L3.2 6.9 H15.4 L13.4 14.3 Z" fill="#98cdfb" stroke="#3b7fde" stroke-width="1.1" stroke-linejoin="round"/><path d="M6.5 2.6 Q10 -0.6 13.6 2.4" fill="none" stroke="#3b7fde" stroke-width="1"/><path d="M14.6 1.4 L14.4 4.2 L11.9 3.4 Z" fill="#3b7fde"/></svg></div>
<div class="t" style="left:680px;top:328px;height:17px;line-height:17px;color:#6f7380;-webkit-text-stroke:0.1px currentColor;font-size:10.6px"><span style="display:inline-block;white-space:pre;transform:scaleX(0.843);transform-origin:0 0;margin-right:-0.1045em">S</span><span style="display:inline-block;white-space:pre;transform:scaleX(1.012);transform-origin:0 0;margin-right:0.0229em">klad</span><span style="white-space:pre"> </span><span style="display:inline-block;white-space:pre;transform:scaleX(0.897);transform-origin:0 0;margin-right:-0.0287em">:</span></div>
<div class="inp" style="left:772.5px;top:328px;width:69px;height:15.5px;line-height:15.5px;"><span style=""></span></div>
<div class="inp" style="left:847px;top:328px;width:171px;height:15.5px;line-height:15.5px;"><span style=""></span></div>
<div style="left:1023.5px;top:328.5px;width:16px;height:16px"><svg width="16" height="16" viewBox="0 0 16 16"><path d="M1.3 13.5 V3.2 Q1.3 2.5 2 2.5 H4.3 L5.6 3.8 H10.7 Q11.5 3.8 11.5 4.6 V6.6" fill="#fff" stroke="#3b7fde" stroke-width="1.1"/><path d="M1.3 14.3 L3.2 6.9 H15.4 L13.4 14.3 Z" fill="#98cdfb" stroke="#3b7fde" stroke-width="1.1" stroke-linejoin="round"/><path d="M6.5 2.6 Q10 -0.6 13.6 2.4" fill="none" stroke="#3b7fde" stroke-width="1"/><path d="M14.6 1.4 L14.4 4.2 L11.9 3.4 Z" fill="#3b7fde"/></svg></div>
<div style="left:1047px;top:227px;width:92px;height:110px;border:1px solid #dadada"></div>
<div class="t" style="left:1057px;top:219px;height:16px;line-height:16px;background:#f7f7f7;padding:0 2px;font-weight:bold;color:#4a4a55;font-size:11px">Stav dokladu</div>
<div style="left:1050px;top:238px;width:10px;height:10px;background:#fafafa;border:1px solid #7c7c7c;border-radius:2.5px"></div>
<div class="t" style="left:1067px;top:235px;height:17px;line-height:17px;color:#6f7380;-webkit-text-stroke:0.1px currentColor;font-size:10.5px"><span style="display:inline-block;white-space:pre;transform:scaleX(0.843);transform-origin:0 0;margin-right:-0.1131em">N</span><span style="display:inline-block;white-space:pre;transform:scaleX(1.012);transform-origin:0 0;margin-right:0.0612em">edokončen</span></div>
<div style="left:1050px;top:255px;width:10px;height:10px;background:#fafafa;border:1px solid #7c7c7c;border-radius:2.5px"></div>
<div class="t" style="left:1067px;top:252px;height:17px;line-height:17px;color:#6f7380;-webkit-text-stroke:0.1px currentColor;font-size:10.5px"><span style="display:inline-block;white-space:pre;transform:scaleX(0.843);transform-origin:0 0;margin-right:-0.1131em">D</span><span style="display:inline-block;white-space:pre;transform:scaleX(1.012);transform-origin:0 0;margin-right:0.0473em">okončen</span></div>
<div style="left:1050px;top:272px;width:10px;height:10px;background:#fafafa;border:1px solid #7c7c7c;border-radius:2.5px"></div>
<div class="t" style="left:1067px;top:269px;height:17px;line-height:17px;color:#6f7380;-webkit-text-stroke:0.1px currentColor;font-size:10.5px"><span style="display:inline-block;white-space:pre;transform:scaleX(0.843);transform-origin:0 0;margin-right:-0.1218em">O</span><span style="display:inline-block;white-space:pre;transform:scaleX(1.012);transform-origin:0 0;margin-right:0.0202em">bch</span><span style="display:inline-block;white-space:pre;transform:scaleX(0.897);transform-origin:0 0;margin-right:-0.0632em">.-</span><span style="display:inline-block;white-space:pre;transform:scaleX(1.012);transform-origin:0 0;margin-right:0.0473em">dodávka</span></div>
<div style="left:1050px;top:289px;width:10px;height:10px;background:#fafafa;border:1px solid #7c7c7c;border-radius:2.5px"></div>
<div class="t" style="left:1067px;top:286px;height:17px;line-height:17px;color:#6f7380;-webkit-text-stroke:0.1px currentColor;font-size:10.5px"><span style="display:inline-block;white-space:pre;transform:scaleX(0.843);transform-origin:0 0;margin-right:-0.1218em">O</span><span style="display:inline-block;white-space:pre;transform:scaleX(1.012);transform-origin:0 0;margin-right:0.0202em">bch</span><span style="display:inline-block;white-space:pre;transform:scaleX(0.897);transform-origin:0 0;margin-right:-0.0632em">.-</span><span style="display:inline-block;white-space:pre;transform:scaleX(1.012);transform-origin:0 0;margin-right:0.0382em">faktura</span></div>
<div style="left:1050px;top:306px;width:10px;height:10px;background:#fafafa;border:1px solid #7c7c7c;border-radius:2.5px"></div>
<div class="t" style="left:1067px;top:303px;height:17px;line-height:17px;color:#6f7380;-webkit-text-stroke:0.1px currentColor;font-size:10.5px"><span style="display:inline-block;white-space:pre;transform:scaleX(0.843);transform-origin:0 0;margin-right:-0.1045em">K</span><span style="display:inline-block;white-space:pre;transform:scaleX(1.012);transform-origin:0 0;margin-right:0.0202em">asa</span></div>
<div style="left:1050px;top:323px;width:10px;height:10px;background:#fafafa;border:1px solid #7c7c7c;border-radius:2.5px"></div>
<div class="t" style="left:1067px;top:320px;height:17px;line-height:17px;color:#6f7380;-webkit-text-stroke:0.1px currentColor;font-size:10.5px"><span style="display:inline-block;white-space:pre;transform:scaleX(0.843);transform-origin:0 0;margin-right:-0.1045em">K</span><span style="display:inline-block;white-space:pre;transform:scaleX(1.012);transform-origin:0 0;margin-right:0.0202em">asa</span><span style="white-space:pre"> </span><span style="display:inline-block;white-space:pre;transform:scaleX(0.897);transform-origin:0 0;margin-right:-0.0344em">-</span><span style="white-space:pre"> </span><span style="display:inline-block;white-space:pre;transform:scaleX(1.012);transform-origin:0 0;margin-right:0.0299em">zkont</span><span style="display:inline-block;white-space:pre;transform:scaleX(0.897);transform-origin:0 0;margin-right:-0.0287em">.</span></div>
<div style="left:1147px;top:227px;width:88px;height:73px;border:1px solid #dadada"></div>
<div class="t" style="left:1157px;top:219px;height:16px;line-height:16px;background:#f7f7f7;padding:0 2px;font-weight:bold;color:#4a4a55;font-size:11px">Stav vykrytí</div>
<div style="left:1150px;top:238px;width:12px;height:12px;background:#1a67c7;border-radius:2.5px"><svg width="12" height="12"><path d="M3 6.3 L5 8.3 L9.2 3.8" fill="none" stroke="#fff" stroke-width="1"/></svg></div>
<div class="t" style="left:1167px;top:235px;height:17px;line-height:17px;color:#6f7380;-webkit-text-stroke:0.1px currentColor;font-size:10.5px"><span style="display:inline-block;white-space:pre;transform:scaleX(0.843);transform-origin:0 0;margin-right:-0.1131em">N</span><span style="display:inline-block;white-space:pre;transform:scaleX(1.012);transform-origin:0 0;margin-right:0.0445em">epočítat</span></div>
<div style="left:1150px;top:255px;width:10px;height:10px;background:#fafafa;border:1px solid #7c7c7c;border-radius:2.5px"></div>
<div class="t" style="left:1167px;top:252px;height:17px;line-height:17px;color:#6f7380;-webkit-text-stroke:0.1px currentColor;font-size:10.5px"><span style="display:inline-block;white-space:pre;transform:scaleX(0.843);transform-origin:0 0;margin-right:-0.1131em">N</span><span style="display:inline-block;white-space:pre;transform:scaleX(1.012);transform-origin:0 0;margin-right:0.0563em">evykrýván</span></div>
<div style="left:1150px;top:272px;width:10px;height:10px;background:#fafafa;border:1px solid #7c7c7c;border-radius:2.5px"></div>
<div class="t" style="left:1167px;top:269px;height:17px;line-height:17px;color:#6f7380;-webkit-text-stroke:0.1px currentColor;font-size:10.5px"><span style="display:inline-block;white-space:pre;transform:scaleX(0.843);transform-origin:0 0;margin-right:-0.1131em">Č</span><span style="display:inline-block;white-space:pre;transform:scaleX(1.012);transform-origin:0 0;margin-right:0.0438em">ástečně</span><span style="white-space:pre"> </span><span style="display:inline-block;white-space:pre;transform:scaleX(1.012);transform-origin:0 0;margin-right:0.0187em">vyk</span><span style="display:inline-block;white-space:pre;transform:scaleX(0.897);transform-origin:0 0;margin-right:-0.0287em">.</span></div>
<div style="left:1150px;top:289px;width:10px;height:10px;background:#fafafa;border:1px solid #7c7c7c;border-radius:2.5px"></div>
<div class="t" style="left:1167px;top:286px;height:17px;line-height:17px;color:#6f7380;-webkit-text-stroke:0.1px currentColor;font-size:10.5px"><span style="display:inline-block;white-space:pre;transform:scaleX(0.843);transform-origin:0 0;margin-right:-0.1045em">V</span><span style="display:inline-block;white-space:pre;transform:scaleX(1.012);transform-origin:0 0;margin-right:0.0264em">ykryt</span></div>
<div class="btn" style="left:1146px;top:306px;width:36px;height:15px;line-height:15px;font-size:11px">Načti</div>
<div class="btn" style="left:1195px;top:306px;width:38px;height:15px;line-height:15px;font-size:11px">Reset</div>
<div class="t" style="left:1158px;top:325px;height:16px;line-height:16px;color:#8c1a2a;font-size:10.5px"><span style="display:inline-block;white-space:pre;transform:scaleX(0.843);transform-origin:0 0;margin-right:-0.1131em">N</span><span style="display:inline-block;white-space:pre;transform:scaleX(1.012);transform-origin:0 0;margin-right:0.0306em">ačítat</span><span style="white-space:pre"> </span><span style="display:inline-block;white-space:pre;transform:scaleX(1.012);transform-origin:0 0;margin-right:0.0306em">ihned</span><span style="white-space:pre"> </span><span style="display:inline-block;white-space:pre;transform:scaleX(0.897);transform-origin:0 0;margin-right:-0.0287em">:</span></div>
<div style="left:1226px;top:327px;width:12px;height:12px;background:#1a67c7;border-radius:2.5px"><svg width="12" height="12"><path d="M3 6.3 L5 8.3 L9.2 3.8" fill="none" stroke="#fff" stroke-width="1"/></svg></div>
<div style="left:673.5px;top:375px;width:577.5px;height:186px;background:#f7f7f7;border:1px solid #e1e1e1;border-bottom:none"></div>
<div style="left:723.3px;top:355.5px;width:98.40000000000009px;height:19.5px;background:#ececec;border:1px solid #e2e2e2;border-bottom:none"></div>
<div class="t" style="left:726.5px;top:355.5px;height:20.5px;line-height:20.5px;color:#1d1d2a;font-size:10.2px"><span style="display:inline-block;white-space:pre;transform:scaleX(0.843);transform-origin:0 0;margin-right:-0.1131em">H</span><span style="display:inline-block;white-space:pre;transform:scaleX(1.012);transform-origin:0 0;margin-right:0.0382em">lavička</span><span style="white-space:pre"> </span><span style="display:inline-block;white-space:pre;transform:scaleX(1.012);transform-origin:0 0;margin-right:0.0438em">dokladu</span></div>
<div style="left:822.7px;top:355.5px;width:48.39999999999998px;height:19.5px;background:#ececec;border:1px solid #e2e2e2;border-bottom:none"></div>
<div class="t" style="left:828px;top:355.5px;height:20.5px;line-height:20.5px;color:#1d1d2a;font-size:10.2px"><span style="display:inline-block;white-space:pre;transform:scaleX(0.843);transform-origin:0 0;margin-right:-0.1218em">O</span><span style="display:inline-block;white-space:pre;transform:scaleX(1.012);transform-origin:0 0;margin-right:0.0306em">statní</span></div>
<div style="left:872.1px;top:355.5px;width:40.89999999999998px;height:19.5px;background:#ececec;border:1px solid #e2e2e2;border-bottom:none"></div>
<div class="t" style="left:878px;top:355.5px;height:20.5px;line-height:20.5px;color:#1d1d2a;font-size:10.2px"><span style="display:inline-block;white-space:pre;transform:scaleX(0.843);transform-origin:0 0;margin-right:-0.0957em">T</span><span style="display:inline-block;white-space:pre;transform:scaleX(1.012);transform-origin:0 0;margin-right:0.0229em">exty</span></div>
<div style="left:914px;top:355.5px;width:51.5px;height:19.5px;background:#ececec;border:1px solid #e2e2e2;border-bottom:none"></div>
<div class="t" style="left:920px;top:355.5px;height:20.5px;line-height:20.5px;color:#1d1d2a;font-size:10.2px"><span style="display:inline-block;white-space:pre;transform:scaleX(0.843);transform-origin:0 0;margin-right:-0.1045em">P</span><span style="display:inline-block;white-space:pre;transform:scaleX(1.012);transform-origin:0 0;margin-right:0.0354em">oložky</span></div>
<div style="left:966.5px;top:355.5px;width:40.5px;height:19.5px;background:#ececec;border:1px solid #e2e2e2;border-bottom:none"></div>
<div class="t" style="left:972px;top:355.5px;height:20.5px;line-height:20.5px;color:#1d1d2a;font-size:10.2px"><span style="display:inline-block;white-space:pre;transform:scaleX(0.843);transform-origin:0 0;margin-right:-0.1218em">O</span><span style="display:inline-block;white-space:pre;transform:scaleX(1.012);transform-origin:0 0;margin-right:0.0229em">baly</span></div>
<div style="left:1008px;top:355.5px;width:51.700000000000045px;height:19.5px;background:#ececec;border:1px solid #e2e2e2;border-bottom:none"></div>
<div class="t" style="left:1013.2px;top:355.5px;height:20.5px;line-height:20.5px;color:#1d1d2a;font-size:10.2px"><span style="display:inline-block;white-space:pre;transform:scaleX(0.843);transform-origin:0 0;margin-right:-0.1045em">E</span><span style="display:inline-block;white-space:pre;transform:scaleX(1.012);transform-origin:0 0;margin-right:0.0340em">xporty</span></div>
<div style="left:673.5px;top:353.5px;width:49px;height:22px;background:#f7f7f7;border:1px solid #e1e1e1;border-bottom:none"></div>
<div class="t" style="left:680.5px;top:353.5px;height:20px;line-height:20px;font-weight:bold;font-size:10.6px"><span style="display:inline-block;white-space:pre;transform:scaleX(0.843);transform-origin:0 0;margin-right:-0.1131em">N</span><span style="display:inline-block;white-space:pre;transform:scaleX(1.012);transform-origin:0 0;margin-right:0.0326em">áhled</span></div>
<div class="t" style="left:681.5px;top:381.3px;height:17px;line-height:17px;color:#5c6170;font-weight:bold;font-size:11px"><span style="display:inline-block;white-space:pre;transform:scaleX(0.843);transform-origin:0 0;margin-right:-0.1131em">D</span><span style="display:inline-block;white-space:pre;transform:scaleX(1.012);transform-origin:0 0;margin-right:0.0326em">oklad</span><span style="white-space:pre"> </span><span style="display:inline-block;white-space:pre;transform:scaleX(0.897);transform-origin:0 0;margin-right:-0.0344em">:</span></div>
<div class="inp" style="left:745px;top:381.3px;width:124px;height:15.5px;line-height:15.5px;"><span style="font-weight:bold"><span style="display:inline-block;white-space:pre;transform:scaleX(1.074);transform-origin:0 0;margin-right:0.1651em">2023</span><span style="display:inline-block;white-space:pre;transform:scaleX(0.946);transform-origin:0 0;margin-right:-0.0180em">-</span><span style="display:inline-block;white-space:pre;transform:scaleX(0.890);transform-origin:0 0;margin-right:-0.1224em">MI</span><span style="display:inline-block;white-space:pre;transform:scaleX(0.946);transform-origin:0 0;margin-right:-0.0180em">-</span><span style="display:inline-block;white-space:pre;transform:scaleX(1.074);transform-origin:0 0;margin-right:0.2063em">00001</span></span></div>
<div class="t" style="left:681.5px;top:403px;height:17px;line-height:17px;color:#6f7380;-webkit-text-stroke:0.1px currentColor;font-size:10.6px"><span style="display:inline-block;white-space:pre;transform:scaleX(0.843);transform-origin:0 0;margin-right:-0.1131em">D</span><span style="display:inline-block;white-space:pre;transform:scaleX(1.012);transform-origin:0 0;margin-right:0.0403em">odávka</span><span style="white-space:pre"> </span><span style="display:inline-block;white-space:pre;transform:scaleX(0.897);transform-origin:0 0;margin-right:-0.0287em">:</span></div>
<div class="inp" style="left:745px;top:403px;width:124px;height:15.5px;line-height:15.5px;"><span style=""></span></div>
<div class="t" style="left:681.5px;top:424.2px;height:17px;line-height:17px;color:#6f7380;-webkit-text-stroke:0.1px currentColor;font-size:10.6px"><span style="display:inline-block;white-space:pre;transform:scaleX(0.843);transform-origin:0 0;margin-right:-0.0957em">F</span><span style="display:inline-block;white-space:pre;transform:scaleX(1.012);transform-origin:0 0;margin-right:0.0347em">aktura</span><span style="white-space:pre"> </span><span style="display:inline-block;white-space:pre;transform:scaleX(0.897);transform-origin:0 0;margin-right:-0.0287em">:</span></div>
<div class="inp" style="left:745px;top:424.2px;width:124px;height:15.5px;line-height:15.5px;"><span style=""></span></div>
<div class="t" style="left:681.5px;top:446px;height:17px;line-height:17px;color:#6f7380;-webkit-text-stroke:0.1px currentColor;font-size:10.6px"><span style="display:inline-block;white-space:pre;transform:scaleX(0.843);transform-origin:0 0;margin-right:-0.1131em">D</span><span style="display:inline-block;white-space:pre;transform:scaleX(1.012);transform-origin:0 0;margin-right:0.0473em">odavatel</span><span style="white-space:pre"> </span><span style="display:inline-block;white-space:pre;transform:scaleX(0.897);transform-origin:0 0;margin-right:-0.0287em">:</span></div>
<div class="inp" style="left:745px;top:446px;width:41px;height:15.5px;line-height:15.5px;"><span style=""><span style="display:inline-block;white-space:pre;transform:scaleX(1.018);transform-origin:0 0;margin-right:0.0101em">0</span></span></div>
<div class="inp" style="left:791px;top:446px;width:129px;height:15.5px;line-height:15.5px;"><span style=""><span style="display:inline-block;white-space:pre;transform:scaleX(0.843);transform-origin:0 0;margin-right:-0.0957em">F</span><span style="display:inline-block;white-space:pre;transform:scaleX(1.012);transform-origin:0 0;margin-right:0.0347em">iremní</span><span style="white-space:pre"> </span><span style="display:inline-block;white-space:pre;transform:scaleX(1.012);transform-origin:0 0;margin-right:0.0236em">věta</span></span></div>
<div style="left:926px;top:446px;width:17px;height:17px"><svg width="17" height="17" viewBox="0 0 17 17"><circle cx="3.8" cy="6" r="2.3" fill="#a9a9a9"/><circle cx="13.8" cy="6" r="2.3" fill="#a9a9a9"/><path d="M1 16 V10.5 Q1 8.5 3 8.5 H6 V16 Z M16.5 16 V10.5 Q16.5 8.5 14.5 8.5 H11.5 V16 Z" fill="#a9a9a9"/><circle cx="8.7" cy="4.3" r="2.5" fill="#9fd0fb" stroke="#3b86e0" stroke-width="0.9"/><path d="M5.3 16.3 V9.3 Q5.3 8 6.6 8 H10.8 Q12.1 8 12.1 9.3 V16.3 Z" fill="#9fd0fb" stroke="#3b86e0" stroke-width="0.9"/></svg></div>
<div class="inp" style="left:745px;top:466.5px;width:195px;height:59px;line-height:14px;white-space:pre;padding-top:1px">Startovací firma
Václavské náměstí 1
11000 Praha 1</div>
<div class="t" style="left:681.5px;top:532.3px;height:17px;line-height:17px;color:#6f7380;-webkit-text-stroke:0.1px currentColor;font-size:10.6px"><span style="display:inline-block;white-space:pre;transform:scaleX(0.843);transform-origin:0 0;margin-right:-0.1218em">O</span><span style="display:inline-block;white-space:pre;transform:scaleX(1.012);transform-origin:0 0;margin-right:0.0139em">dp</span><span style="display:inline-block;white-space:pre;transform:scaleX(0.897);transform-origin:0 0;margin-right:-0.0287em">.</span><span style="display:inline-block;white-space:pre;transform:scaleX(1.012);transform-origin:0 0;margin-right:0.0341em">osoba</span><span style="white-space:pre"> </span><span style="display:inline-block;white-space:pre;transform:scaleX(0.897);transform-origin:0 0;margin-right:-0.0287em">:</span></div>
<div class="inp" style="left:745px;top:532.3px;width:196px;height:15.5px;line-height:15.5px;"><span style=""></span></div>
<div class="t" style="left:954.5px;top:381.3px;height:17px;line-height:17px;color:#6f7380;-webkit-text-stroke:0.1px currentColor;font-size:10.6px"><span style="display:inline-block;white-space:pre;transform:scaleX(0.843);transform-origin:0 0;margin-right:-0.1045em">S</span><span style="display:inline-block;white-space:pre;transform:scaleX(1.012);transform-origin:0 0;margin-right:0.0167em">tav</span><span style="white-space:pre"> </span><span style="display:inline-block;white-space:pre;transform:scaleX(0.897);transform-origin:0 0;margin-right:-0.0287em">:</span></div>
<div class="inp" style="left:1024px;top:381.3px;width:102px;height:15.5px;line-height:15.5px;"><span style=""><span style="display:inline-block;white-space:pre;transform:scaleX(0.843);transform-origin:0 0;margin-right:-0.1131em">D</span><span style="display:inline-block;white-space:pre;transform:scaleX(1.012);transform-origin:0 0;margin-right:0.0473em">okončen</span></span></div>
<div class="inp" style="left:1132.5px;top:381.3px;width:103.5px;height:15.5px;line-height:15.5px;"><span style=""><span style="display:inline-block;white-space:pre;transform:scaleX(0.843);transform-origin:0 0;margin-right:-0.0957em">Z</span><span style="display:inline-block;white-space:pre;transform:scaleX(1.012);transform-origin:0 0;margin-right:0.0341em">apsán</span></span></div>
<div class="t" style="left:954.5px;top:403px;height:17px;line-height:17px;color:#6f7380;-webkit-text-stroke:0.1px currentColor;font-size:10.6px"><span style="display:inline-block;white-space:pre;transform:scaleX(0.843);transform-origin:0 0;margin-right:-0.1131em">D</span><span style="display:inline-block;white-space:pre;transform:scaleX(1.012);transform-origin:0 0;margin-right:0.0104em">at</span><span style="display:inline-block;white-space:pre;transform:scaleX(0.897);transform-origin:0 0;margin-right:-0.0287em">.</span><span style="white-space:pre"> </span><span style="display:inline-block;white-space:pre;transform:scaleX(1.012);transform-origin:0 0;margin-right:0.0382em">dodání</span><span style="white-space:pre"> </span><span style="display:inline-block;white-space:pre;transform:scaleX(0.897);transform-origin:0 0;margin-right:-0.0287em">:</span></div>
<div class="inp" style="left:1024px;top:403px;width:212px;height:15.5px;line-height:15.5px;"><span style=""></span></div>
<div class="t" style="left:954.5px;top:424.2px;height:17px;line-height:17px;color:#6f7380;-webkit-text-stroke:0.1px currentColor;font-size:10.6px"><span style="display:inline-block;white-space:pre;transform:scaleX(0.843);transform-origin:0 0;margin-right:-0.1131em">D</span><span style="display:inline-block;white-space:pre;transform:scaleX(1.012);transform-origin:0 0;margin-right:0.0104em">at</span><span style="display:inline-block;white-space:pre;transform:scaleX(0.897);transform-origin:0 0;margin-right:-0.0287em">.</span><span style="white-space:pre"> </span><span style="display:inline-block;white-space:pre;transform:scaleX(1.012);transform-origin:0 0;margin-right:0.0452em">pořízení</span><span style="white-space:pre"> </span><span style="display:inline-block;white-space:pre;transform:scaleX(0.897);transform-origin:0 0;margin-right:-0.0287em">:</span></div>
<div class="inp" style="left:1024px;top:424.2px;width:212px;height:15.5px;line-height:15.5px;"><span style=""><span style="display:inline-block;white-space:pre;transform:scaleX(1.018);transform-origin:0 0;margin-right:0.0202em">17</span><span style="display:inline-block;white-space:pre;transform:scaleX(0.897);transform-origin:0 0;margin-right:-0.0287em">.</span><span style="display:inline-block;white-space:pre;transform:scaleX(1.018);transform-origin:0 0;margin-right:0.0101em">3</span><span style="display:inline-block;white-space:pre;transform:scaleX(0.897);transform-origin:0 0;margin-right:-0.0287em">.</span><span style="display:inline-block;white-space:pre;transform:scaleX(1.018);transform-origin:0 0;margin-right:0.0405em">2026</span><span style="white-space:pre"> </span><span style="display:inline-block;white-space:pre;transform:scaleX(1.018);transform-origin:0 0;margin-right:0.0202em">10</span><span style="display:inline-block;white-space:pre;transform:scaleX(0.897);transform-origin:0 0;margin-right:-0.0287em">:</span><span style="display:inline-block;white-space:pre;transform:scaleX(1.018);transform-origin:0 0;margin-right:0.0202em">36</span><span style="display:inline-block;white-space:pre;transform:scaleX(0.897);transform-origin:0 0;margin-right:-0.0287em">:</span><span style="display:inline-block;white-space:pre;transform:scaleX(1.018);transform-origin:0 0;margin-right:0.0202em">51</span></span></div>
<div class="t" style="left:954.5px;top:446px;height:17px;line-height:17px;color:#6f7380;-webkit-text-stroke:0.1px currentColor;font-size:10.6px"><span style="display:inline-block;white-space:pre;transform:scaleX(0.843);transform-origin:0 0;margin-right:-0.1045em">S</span><span style="display:inline-block;white-space:pre;transform:scaleX(1.012);transform-origin:0 0;margin-right:0.0229em">klad</span><span style="white-space:pre"> </span><span style="display:inline-block;white-space:pre;transform:scaleX(0.897);transform-origin:0 0;margin-right:-0.0287em">:</span></div>
<div class="inp" style="left:1024px;top:446px;width:67px;height:15.5px;line-height:15.5px;"><span style=""><span style="display:inline-block;white-space:pre;transform:scaleX(0.843);transform-origin:0 0;margin-right:-0.0957em">Z</span></span></div>
<div class="inp" style="left:1097.5px;top:446px;width:138.5px;height:15.5px;line-height:15.5px;"><span style=""><span style="display:inline-block;white-space:pre;transform:scaleX(0.843);transform-origin:0 0;margin-right:-0.0957em">Z</span><span style="display:inline-block;white-space:pre;transform:scaleX(1.012);transform-origin:0 0;margin-right:0.0236em">boží</span></span></div>
<div class="t" style="left:954.5px;top:467px;height:17px;line-height:17px;color:#6f7380;-webkit-text-stroke:0.1px currentColor;font-size:10.6px"><span style="display:inline-block;white-space:pre;transform:scaleX(0.843);transform-origin:0 0;margin-right:-0.1045em">S</span><span style="display:inline-block;white-space:pre;transform:scaleX(1.012);transform-origin:0 0;margin-right:0.0229em">klad</span><span style="white-space:pre"> </span><span style="display:inline-block;white-space:pre;transform:scaleX(1.018);transform-origin:0 0;margin-right:0.0101em">2</span><span style="white-space:pre"> </span><span style="display:inline-block;white-space:pre;transform:scaleX(0.897);transform-origin:0 0;margin-right:-0.0287em">:</span></div>
<div class="inp" style="left:1024px;top:467px;width:67px;height:15.5px;line-height:15.5px;"><span style=""></span></div>
<div class="inp" style="left:1097.5px;top:467px;width:138.5px;height:15.5px;line-height:15.5px;"><span style=""></span></div>
<div class="t" style="left:954.5px;top:488.5px;height:17px;line-height:17px;color:#6f7380;-webkit-text-stroke:0.1px currentColor;font-size:10.6px"><span style="display:inline-block;white-space:pre;transform:scaleX(0.843);transform-origin:0 0;margin-right:-0.1131em">D</span><span style="display:inline-block;white-space:pre;transform:scaleX(1.012);transform-origin:0 0;margin-right:0.0181em">ruh</span><span style="white-space:pre"> </span><span style="display:inline-block;white-space:pre;transform:scaleX(1.012);transform-origin:0 0;margin-right:0.0410em">pohybu</span><span style="white-space:pre"> </span><span style="display:inline-block;white-space:pre;transform:scaleX(0.897);transform-origin:0 0;margin-right:-0.0287em">:</span></div>
<div class="inp" style="left:1024px;top:488.5px;width:29px;height:15.5px;line-height:15.5px;"><span style=""><span style="display:inline-block;white-space:pre;transform:scaleX(0.843);transform-origin:0 0;margin-right:-0.1740em">MI</span></span></div>
<div class="inp" style="left:1058px;top:488.5px;width:179px;height:15.5px;line-height:15.5px;"><span style=""><span style="display:inline-block;white-space:pre;transform:scaleX(0.843);transform-origin:0 0;margin-right:-0.1304em">M</span><span style="display:inline-block;white-space:pre;transform:scaleX(1.012);transform-origin:0 0;margin-right:0.0431em">inimální</span><span style="white-space:pre"> </span><span style="display:inline-block;white-space:pre;transform:scaleX(1.012);transform-origin:0 0;margin-right:0.0229em">stav</span></span></div>
<div class="t" style="left:954.5px;top:510px;height:17px;line-height:17px;color:#6f7380;-webkit-text-stroke:0.1px currentColor;font-size:10.6px"><span style="display:inline-block;white-space:pre;transform:scaleX(0.843);transform-origin:0 0;margin-right:-0.1131em">C</span><span style="display:inline-block;white-space:pre;transform:scaleX(1.012);transform-origin:0 0;margin-right:0.0333em">elkem</span><span style="white-space:pre"> </span><span style="display:inline-block;white-space:pre;transform:scaleX(0.897);transform-origin:0 0;margin-right:-0.0287em">:</span></div>
<div class="inp" style="left:1024px;top:510px;width:94px;height:15.5px;line-height:17.5px;text-align:right;padding-right:1px;background:#fafafa"><span style="display:inline-block;white-space:pre;transform:scaleX(1.018);transform-origin:0 0;margin-right:0.0304em">109</span><span style="white-space:pre"> </span><span style="display:inline-block;white-space:pre;transform:scaleX(1.018);transform-origin:0 0;margin-right:0.0304em">950</span><span style="display:inline-block;white-space:pre;transform:scaleX(0.897);transform-origin:0 0;margin-right:-0.0287em">,</span><span style="display:inline-block;white-space:pre;transform:scaleX(1.018);transform-origin:0 0;margin-right:0.0202em">00</span></div>
<div class="inp" style="left:1125px;top:510px;width:20px;height:15.5px;line-height:15.5px;"><span style=""><span style="display:inline-block;white-space:pre;transform:scaleX(0.843);transform-origin:0 0;margin-right:-0.3132em">CZK</span></span></div>
<div style="left:1153px;top:513px;width:12px;height:12px"><svg width="12" height="12"><circle cx="6" cy="6" r="5.8" fill="#1562c6"/><circle cx="6" cy="6" r="2.1" fill="#fff"/></svg></div>
<div class="t" style="left:1167px;top:511px;height:17px;line-height:17px;color:#5d616d;font-size:11px"><span style="display:inline-block;white-space:pre;transform:scaleX(1.012);transform-origin:0 0;margin-right:0.0202em">bez</span></div>
<div style="left:1187px;top:513px;width:12px;height:12px"><svg width="12" height="12"><circle cx="6" cy="6" r="5.2" fill="#fff" stroke="#7c7c7c" stroke-width="0.9"/></svg></div>
<div class="t" style="left:1201px;top:511px;height:17px;line-height:17px;color:#6f7380;-webkit-text-stroke:0.1px currentColor;font-size:10.6px"><span style="display:inline-block;white-space:pre;transform:scaleX(1.012);transform-origin:0 0;margin-right:0.0062em">s</span></div>
<div class="t" style="left:1212px;top:511px;height:17px;line-height:17px;color:#6f7380;-webkit-text-stroke:0.1px currentColor;font-size:10.5px"><span style="display:inline-block;white-space:pre;transform:scaleX(0.843);transform-origin:0 0;margin-right:-0.3306em">DPH</span></div>
<div class="t" style="left:954.5px;top:532.3px;height:17px;line-height:17px;color:#6f7380;-webkit-text-stroke:0.1px currentColor;font-size:10.6px"><span style="display:inline-block;white-space:pre;transform:scaleX(0.843);transform-origin:0 0;margin-right:-0.1045em">P</span><span style="display:inline-block;white-space:pre;transform:scaleX(1.012);transform-origin:0 0;margin-right:0.0236em">očet</span><span style="white-space:pre"> </span><span style="display:inline-block;white-space:pre;transform:scaleX(1.012);transform-origin:0 0;margin-right:0.0299em">polož</span><span style="display:inline-block;white-space:pre;transform:scaleX(0.897);transform-origin:0 0;margin-right:-0.0575em">.:</span></div>
<div class="inp" style="left:1024px;top:532.3px;width:28px;height:15.5px;line-height:17.5px;text-align:right;padding-right:1px;background:#fafafa">2</div>
<div style="left:673.5px;top:561px;width:577.5px;height:216px;background:#f7f7f7;border:1px solid #e1e1e1;border-top:none"></div>
<div style="left:677px;top:564px;width:572.5px;height:195px;background:#fff;border-left:1px solid #dcdcdc;border-right:1px solid #e6e6e6"></div>
<div style="left:677px;top:564px;width:573px;height:16px;background:linear-gradient(#ffffff,#f6f7f9 40%,#dfe5eb);border-top:1px solid #e6e6e6"></div>
<div style="left:687.5px;top:565px;width:1px;height:52px;background:#e8e9ec"></div>
<div style="left:712px;top:565px;width:1px;height:52px;background:#e8e9ec"></div>
<div style="left:821.5px;top:565px;width:1px;height:52px;background:#e8e9ec"></div>
<div style="left:982.5px;top:565px;width:1px;height:52px;background:#e8e9ec"></div>
<div style="left:1051px;top:565px;width:1px;height:52px;background:#e8e9ec"></div>
<div style="left:1097.5px;top:565px;width:1px;height:52px;background:#e8e9ec"></div>
<div style="left:1160.5px;top:565px;width:1px;height:52px;background:#e8e9ec"></div>
<div style="left:677px;top:565px;width:10.0px;height:15px;overflow:hidden"><div class="t" style="left:1.5px;top:0;height:15px;line-height:15px;color:#70737c;font-size:10.3px;-webkit-text-stroke:0"><span style="display:inline-block;white-space:pre;transform:scaleX(0.843);transform-origin:0 0;margin-right:-0.3394em">DOK</span></div></div>
<div style="left:687.5px;top:565px;width:24.0px;height:15px;overflow:hidden"><div class="t" style="left:3.5px;top:0;height:15px;line-height:15px;color:#70737c;font-size:10.3px;-webkit-text-stroke:0"><span style="display:inline-block;white-space:pre;transform:scaleX(0.843);transform-origin:0 0;margin-right:-0.1045em">P</span><span style="display:inline-block;white-space:pre;transform:scaleX(1.012);transform-origin:0 0;margin-right:0.0111em">oř</span><span style="display:inline-block;white-space:pre;transform:scaleX(0.897);transform-origin:0 0;margin-right:-0.0287em">.</span></div></div>
<div style="left:712px;top:565px;width:109.0px;height:15px;overflow:hidden"><div class="t" style="left:3.5px;top:0;height:15px;line-height:15px;color:#70737c;font-size:10.3px;-webkit-text-stroke:0"><span style="display:inline-block;white-space:pre;transform:scaleX(0.843);transform-origin:0 0;margin-right:-0.1045em">P</span><span style="display:inline-block;white-space:pre;transform:scaleX(1.012);transform-origin:0 0;margin-right:0.0361em">oložka</span></div></div>
<div style="left:821.5px;top:565px;width:160.5px;height:15px;overflow:hidden"><div class="t" style="left:2.5px;top:0;height:15px;line-height:15px;color:#70737c;font-size:10.3px;-webkit-text-stroke:0"><span style="display:inline-block;white-space:pre;transform:scaleX(0.843);transform-origin:0 0;margin-right:-0.1131em">N</span><span style="display:inline-block;white-space:pre;transform:scaleX(1.012);transform-origin:0 0;margin-right:0.0264em">ázev</span></div></div>
<div style="left:982.5px;top:565px;width:68.0px;height:15px;overflow:hidden"><div class="t" style="left:3.5px;top:0;height:15px;line-height:15px;color:#70737c;font-size:10.3px;-webkit-text-stroke:0"><span style="display:inline-block;white-space:pre;transform:scaleX(0.843);transform-origin:0 0;margin-right:-0.1304em">M</span><span style="display:inline-block;white-space:pre;transform:scaleX(1.012);transform-origin:0 0;margin-right:0.0396em">nožství</span></div></div>
<div style="left:1051px;top:565px;width:46.0px;height:15px;overflow:hidden"><div class="t" style="left:3.5px;top:0;height:15px;line-height:15px;color:#70737c;font-size:10.3px;-webkit-text-stroke:0"><span style="display:inline-block;white-space:pre;transform:scaleX(0.843);transform-origin:0 0;margin-right:-0.2087em">MJ</span></div></div>
<div style="left:1097.5px;top:565px;width:62.5px;height:15px;overflow:hidden"><div class="t" style="left:3.0px;top:0;height:15px;line-height:15px;color:#70737c;font-size:10.3px;-webkit-text-stroke:0"><span style="display:inline-block;white-space:pre;transform:scaleX(0.843);transform-origin:0 0;margin-right:-0.1131em">C</span><span style="display:inline-block;white-space:pre;transform:scaleX(1.012);transform-origin:0 0;margin-right:0.0209em">ena</span><span style="display:inline-block;white-space:pre;transform:scaleX(0.897);transform-origin:0 0;margin-right:-0.0287em">/</span><span style="display:inline-block;white-space:pre;transform:scaleX(1.012);transform-origin:0 0;margin-right:0.0167em">jed</span><span style="display:inline-block;white-space:pre;transform:scaleX(0.897);transform-origin:0 0;margin-right:-0.0287em">.</span></div></div>
<div style="left:1160.5px;top:565px;width:88.0px;height:15px;overflow:hidden"><div class="t" style="left:3.0px;top:0;height:15px;line-height:15px;color:#70737c;font-size:10.3px;-webkit-text-stroke:0"><span style="display:inline-block;white-space:pre;transform:scaleX(0.843);transform-origin:0 0;margin-right:-0.1131em">C</span><span style="display:inline-block;white-space:pre;transform:scaleX(1.012);transform-origin:0 0;margin-right:0.0209em">ena</span><span style="white-space:pre"> </span><span style="display:inline-block;white-space:pre;transform:scaleX(1.012);transform-origin:0 0;margin-right:0.0222em">celk</span><span style="display:inline-block;white-space:pre;transform:scaleX(0.897);transform-origin:0 0;margin-right:-0.0287em">.</span></div></div>
<div style="left:677px;top:580px;width:573px;height:17.8px;background:#bddcf3"></div>
<div style="left:687.5px;top:580px;width:1px;height:35.6px;background:#efefef"></div>
<div style="left:712px;top:580px;width:1px;height:35.6px;background:#efefef"></div>
<div style="left:821.5px;top:580px;width:1px;height:35.6px;background:#efefef"></div>
<div style="left:982.5px;top:580px;width:1px;height:35.6px;background:#efefef"></div>
<div style="left:1051px;top:580px;width:1px;height:35.6px;background:#efefef"></div>
<div style="left:1097.5px;top:580px;width:1px;height:35.6px;background:#efefef"></div>
<div style="left:1160.5px;top:580px;width:1px;height:35.6px;background:#efefef"></div>
<div style="left:677px;top:596.8px;width:573px;height:1px;background:#f0f0f0"></div>
<div style="left:677px;top:614.6px;width:573px;height:1px;background:#f0f0f0"></div>
<div class="t" style="right:796.5px;top:580.0px;height:17.8px;line-height:17.8px;text-align:right;"><span style="display:inline-block;white-space:pre;transform:scaleX(1.018);transform-origin:0 0;margin-right:0.0101em">1</span></div>
<div class="t" style="left:713.5px;top:580.0px;height:17.8px;line-height:17.8px;"><span style="display:inline-block;white-space:pre;transform:scaleX(1.018);transform-origin:0 0;margin-right:0.0607em">103105</span></div>
<div class="t" style="left:823.5px;top:580.0px;height:17.8px;line-height:17.8px;"><span style="display:inline-block;white-space:pre;transform:scaleX(0.843);transform-origin:0 0;margin-right:-0.0871em">L</span><span style="display:inline-block;white-space:pre;transform:scaleX(1.012);transform-origin:0 0;margin-right:0.0354em">odičky</span><span style="white-space:pre"> </span><span style="display:inline-block;white-space:pre;transform:scaleX(0.843);transform-origin:0 0;margin-right:-0.1131em">D</span><span style="display:inline-block;white-space:pre;transform:scaleX(1.012);transform-origin:0 0;margin-right:0.0285em">ream</span><span style="white-space:pre"> </span><span style="display:inline-block;white-space:pre;transform:scaleX(1.012);transform-origin:0 0;margin-right:0.0160em">vel</span><span style="white-space:pre"> </span><span style="display:inline-block;white-space:pre;transform:scaleX(1.018);transform-origin:0 0;margin-right:0.0202em">36</span></div>
<div class="t" style="right:449.5px;top:580.0px;height:17.8px;line-height:17.8px;text-align:right;"><span style="display:inline-block;white-space:pre;transform:scaleX(1.018);transform-origin:0 0;margin-right:0.0202em">50</span><span style="display:inline-block;white-space:pre;transform:scaleX(0.897);transform-origin:0 0;margin-right:-0.0287em">,</span><span style="display:inline-block;white-space:pre;transform:scaleX(1.018);transform-origin:0 0;margin-right:0.0304em">000</span></div>
<div class="t" style="left:1053px;top:580.0px;height:17.8px;line-height:17.8px;"><span style="display:inline-block;white-space:pre;transform:scaleX(1.012);transform-origin:0 0;margin-right:0.0181em">pár</span></div>
<div class="t" style="right:340.5px;top:580.0px;height:17.8px;line-height:17.8px;text-align:right;"><span style="display:inline-block;white-space:pre;transform:scaleX(1.018);transform-origin:0 0;margin-right:0.0101em">1</span><span style="white-space:pre"> </span><span style="display:inline-block;white-space:pre;transform:scaleX(1.018);transform-origin:0 0;margin-right:0.0304em">200</span><span style="display:inline-block;white-space:pre;transform:scaleX(0.897);transform-origin:0 0;margin-right:-0.0287em">,</span><span style="display:inline-block;white-space:pre;transform:scaleX(1.018);transform-origin:0 0;margin-right:0.0304em">000</span></div>
<div class="t" style="right:252.5px;top:580.0px;height:17.8px;line-height:17.8px;text-align:right;"><span style="display:inline-block;white-space:pre;transform:scaleX(1.018);transform-origin:0 0;margin-right:0.0202em">60</span><span style="white-space:pre"> </span><span style="display:inline-block;white-space:pre;transform:scaleX(1.018);transform-origin:0 0;margin-right:0.0304em">000</span><span style="display:inline-block;white-space:pre;transform:scaleX(0.897);transform-origin:0 0;margin-right:-0.0287em">,</span><span style="display:inline-block;white-space:pre;transform:scaleX(1.018);transform-origin:0 0;margin-right:0.0202em">00</span></div>
<div class="t" style="right:796.5px;top:597.8px;height:17.8px;line-height:17.8px;text-align:right;"><span style="display:inline-block;white-space:pre;transform:scaleX(1.018);transform-origin:0 0;margin-right:0.0101em">2</span></div>
<div class="t" style="left:713.5px;top:597.8px;height:17.8px;line-height:17.8px;"><span style="display:inline-block;white-space:pre;transform:scaleX(1.018);transform-origin:0 0;margin-right:0.0607em">103103</span></div>
<div class="t" style="left:823.5px;top:597.8px;height:17.8px;line-height:17.8px;"><span style="display:inline-block;white-space:pre;transform:scaleX(0.843);transform-origin:0 0;margin-right:-0.0871em">L</span><span style="display:inline-block;white-space:pre;transform:scaleX(1.012);transform-origin:0 0;margin-right:0.0354em">odičky</span><span style="white-space:pre"> </span><span style="display:inline-block;white-space:pre;transform:scaleX(0.843);transform-origin:0 0;margin-right:-0.0871em">L</span><span style="display:inline-block;white-space:pre;transform:scaleX(1.012);transform-origin:0 0;margin-right:0.0299em">adies</span><span style="white-space:pre"> </span><span style="display:inline-block;white-space:pre;transform:scaleX(1.012);transform-origin:0 0;margin-right:0.0160em">vel</span><span style="white-space:pre"> </span><span style="display:inline-block;white-space:pre;transform:scaleX(1.018);transform-origin:0 0;margin-right:0.0202em">39</span></div>
<div class="t" style="right:449.5px;top:597.8px;height:17.8px;line-height:17.8px;text-align:right;"><span style="display:inline-block;white-space:pre;transform:scaleX(1.018);transform-origin:0 0;margin-right:0.0202em">30</span><span style="display:inline-block;white-space:pre;transform:scaleX(0.897);transform-origin:0 0;margin-right:-0.0287em">,</span><span style="display:inline-block;white-space:pre;transform:scaleX(1.018);transform-origin:0 0;margin-right:0.0304em">000</span></div>
<div class="t" style="left:1053px;top:597.8px;height:17.8px;line-height:17.8px;"><span style="display:inline-block;white-space:pre;transform:scaleX(1.012);transform-origin:0 0;margin-right:0.0181em">pár</span></div>
<div class="t" style="right:340.5px;top:597.8px;height:17.8px;line-height:17.8px;text-align:right;"><span style="display:inline-block;white-space:pre;transform:scaleX(1.018);transform-origin:0 0;margin-right:0.0304em">999</span><span style="display:inline-block;white-space:pre;transform:scaleX(0.897);transform-origin:0 0;margin-right:-0.0287em">,</span><span style="display:inline-block;white-space:pre;transform:scaleX(1.018);transform-origin:0 0;margin-right:0.0304em">000</span></div>
<div class="t" style="right:252.5px;top:597.8px;height:17.8px;line-height:17.8px;text-align:right;"><span style="display:inline-block;white-space:pre;transform:scaleX(1.018);transform-origin:0 0;margin-right:0.0202em">49</span><span style="white-space:pre"> </span><span style="display:inline-block;white-space:pre;transform:scaleX(1.018);transform-origin:0 0;margin-right:0.0304em">950</span><span style="display:inline-block;white-space:pre;transform:scaleX(0.897);transform-origin:0 0;margin-right:-0.0287em">,</span><span style="display:inline-block;white-space:pre;transform:scaleX(1.018);transform-origin:0 0;margin-right:0.0202em">00</span></div>
<div style="left:677px;top:760px;width:574px;height:15.5px;background:#efefef"></div>
<div style="left:693px;top:766.5px;width:295px;height:2px;background:#7d7d7d"></div>
<div style="left:1263px;top:171.5px;width:1px;height:611px;background:#dcdcdc"></div>
<div style="left:1268.5px;top:171.5px;width:69px;height:44px;border:1px solid #dedede"></div>
<div style="left:1273px;top:186px;width:62px;height:16px"><svg width="62" height="16" viewBox="0 0 62 16"><text x="1" y="13" font-family="Liberation Sans" font-weight="bold" font-size="13.6" fill="#1b1850" textLength="59" lengthAdjust="spacingAndGlyphs">WınFAS</text><circle cx="21.3" cy="3.4" r="1.2" fill="#3aa0e6"/></svg></div>
<div class="t" style="left:1269px;top:219px;width:70px;height:17px;line-height:17px;text-align:center;font-weight:bold;font-size:10.8px"><span style="display:inline-block;white-space:pre;transform:scaleX(1.018);transform-origin:0 0;margin-right:0.0405em">8757</span></div>
<div class="btn" style="left:1269.5px;top:320.5px;width:53px;height:17px;line-height:17px;font-size:10.8px;"><span style="display:inline-block;white-space:pre;transform:scaleX(0.843);transform-origin:0 0;margin-right:-0.2263em">OK</span><span style="display:inline-block;white-space:pre;transform:scaleX(0.897);transform-origin:0 0;margin-right:-0.0287em">,</span><span style="white-space:pre"> </span><span style="display:inline-block;white-space:pre;transform:scaleX(0.843);transform-origin:0 0;margin-right:-0.1045em">V</span><span style="display:inline-block;white-space:pre;transform:scaleX(1.012);transform-origin:0 0;margin-right:0.0222em">ývoj</span></div>
<div class="btn" style="left:1327px;top:320.5px;width:10px;height:17px;border-radius:3px;"><svg width="10" height="17" style="position:absolute;left:0;top:0"><path d="M1.2 5.0 H8.8 L5 13.0 Z" fill="#000"/></svg></div>
<div class="btn" style="left:1269.5px;top:345px;width:53px;height:17px;line-height:17px;font-size:10.8px;"><span style="display:inline-block;white-space:pre;transform:scaleX(0.843);transform-origin:0 0;margin-right:-0.1045em">S</span><span style="display:inline-block;white-space:pre;transform:scaleX(1.012);transform-origin:0 0;margin-right:0.0452em">peciality</span></div>
<div class="btn" style="left:1327px;top:345px;width:10px;height:17px;border-radius:3px;"><svg width="10" height="17" style="position:absolute;left:0;top:0"><path d="M1.2 5.0 H8.8 L5 13.0 Z" fill="#000"/></svg></div>
<div class="btn" style="left:1269.5px;top:394px;width:53px;height:17px;line-height:17px;font-size:10.8px;"><span style="display:inline-block;white-space:pre;transform:scaleX(0.843);transform-origin:0 0;margin-right:-0.1653em">IQ</span></div>
<div class="btn" style="left:1327px;top:394px;width:10px;height:17px;border-radius:3px;"><svg width="10" height="17" style="position:absolute;left:0;top:0"><path d="M1.2 5.0 H8.8 L5 13.0 Z" fill="#000"/></svg></div>
<div class="btn" style="left:1269.5px;top:418.5px;width:53px;height:17px;line-height:17px;font-size:10.8px;"><span style="display:inline-block;white-space:pre;transform:scaleX(0.843);transform-origin:0 0;margin-right:-0.1045em">A</span><span style="display:inline-block;white-space:pre;transform:scaleX(1.012);transform-origin:0 0;margin-right:0.0389em">plikace</span></div>
<div class="btn" style="left:1327px;top:418.5px;width:10px;height:17px;border-radius:3px;"><svg width="10" height="17" style="position:absolute;left:0;top:0"><path d="M1.2 5.0 H8.8 L5 13.0 Z" fill="#000"/></svg></div>
<div class="btn" style="left:1269.5px;top:442.5px;width:53px;height:17px;line-height:17px;font-size:10.8px;"><span style="display:inline-block;white-space:pre;transform:scaleX(0.843);transform-origin:0 0;margin-right:-0.1131em">Ú</span><span style="display:inline-block;white-space:pre;transform:scaleX(1.012);transform-origin:0 0;margin-right:0.0167em">čto</span></div>
<div class="btn" style="left:1327px;top:442.5px;width:10px;height:17px;border-radius:3px;"><svg width="10" height="17" style="position:absolute;left:0;top:0"><path d="M1.2 5.0 H8.8 L5 13.0 Z" fill="#000"/></svg></div>
<div class="btn" style="left:1269.5px;top:467px;width:53px;height:17px;line-height:17px;font-size:10.8px;"><span style="display:inline-block;white-space:pre;transform:scaleX(0.843);transform-origin:0 0;margin-right:-0.1218em">O</span><span style="display:inline-block;white-space:pre;transform:scaleX(1.012);transform-origin:0 0;margin-right:0.0306em">statní</span></div>
<div class="btn" style="left:1327px;top:467px;width:10px;height:17px;border-radius:3px;"><svg width="10" height="17" style="position:absolute;left:0;top:0"><path d="M1.2 5.0 H8.8 L5 13.0 Z" fill="#000"/></svg></div>
<div class="btn" style="left:1269.5px;top:515.5px;width:53px;height:17px;line-height:17px;font-size:10.8px;"><span style="display:inline-block;white-space:pre;transform:scaleX(0.843);transform-origin:0 0;margin-right:-0.1045em">V</span><span style="display:inline-block;white-space:pre;transform:scaleX(1.012);transform-origin:0 0;margin-right:0.0347em">ytiskni</span></div>
<div class="btn" style="left:1327px;top:515.5px;width:10px;height:17px;border-radius:3px;"><svg width="10" height="17" style="position:absolute;left:0;top:0"><path d="M1.2 5.0 H8.8 L5 13.0 Z" fill="#000"/></svg></div>
<div class="btn" style="left:1269.5px;top:564.5px;width:66px;height:17px;line-height:17px;font-size:10.8px;"><span style="display:inline-block;white-space:pre;transform:scaleX(0.843);transform-origin:0 0;margin-right:-0.1045em">V</span><span style="display:inline-block;white-space:pre;transform:scaleX(1.012);transform-origin:0 0;margin-right:0.0257em">ykryj</span></div>
<div class="btn" style="left:1269.5px;top:589px;width:53px;height:16.5px;line-height:16.5px;font-size:10.8px;background:#f3f3f3;border-color:#e6e6e6;color:#a0a0a0"><span style="display:inline-block;white-space:pre;transform:scaleX(0.843);transform-origin:0 0;margin-right:-0.1131em">D</span><span style="display:inline-block;white-space:pre;transform:scaleX(1.012);transform-origin:0 0;margin-right:0.0361em">okonči</span></div>
<div class="btn" style="left:1327px;top:589px;width:9px;height:16.5px;background:#f3f3f3;border-color:#e6e6e6"><svg width="10" height="17" style="position:absolute;left:0;top:0"><path d="M1.5 5 H8.5 L5 12 Z" fill="#8a8a8a"/></svg></div>
<div class="btn" style="left:1269.5px;top:627px;width:66px;height:17px;line-height:17px;font-size:10.8px;"><span style="display:inline-block;white-space:pre;transform:scaleX(0.843);transform-origin:0 0;margin-right:-0.1131em">U</span><span style="display:inline-block;white-space:pre;transform:scaleX(1.012);transform-origin:0 0;margin-right:0.0243em">prav</span></div>
<div style="left:1272px;top:629px;width:3px;height:15px;background:#e3ae1b"></div>
<div style="left:1332px;top:629px;width:3px;height:15px;background:#e3ae1b"></div>
<div class="btn" style="left:1269.5px;top:652px;width:66px;height:17px;line-height:17px;font-size:10.8px;"><span style="display:inline-block;white-space:pre;transform:scaleX(0.843);transform-origin:0 0;margin-right:-0.0957em">Z</span><span style="display:inline-block;white-space:pre;transform:scaleX(1.012);transform-origin:0 0;margin-right:0.0313em">obraz</span></div>
<div style="left:1272px;top:654px;width:3px;height:15px;background:#2e6fd0"></div>
<div style="left:1332px;top:654px;width:3px;height:15px;background:#2e6fd0"></div>
<div class="btn" style="left:1269.5px;top:676px;width:66px;height:17px;line-height:17px;font-size:10.8px;"><span style="display:inline-block;white-space:pre;transform:scaleX(0.843);transform-origin:0 0;margin-right:-0.1045em">S</span><span style="display:inline-block;white-space:pre;transform:scaleX(1.012);transform-origin:0 0;margin-right:0.0236em">maž</span></div>
<div style="left:1272px;top:678px;width:3px;height:15px;background:#d93a3a"></div>
<div style="left:1332px;top:678px;width:3px;height:15px;background:#d93a3a"></div>
<div class="btn" style="left:1269.5px;top:714.5px;width:66px;height:17px;line-height:17px;font-size:10.8px;"><span style="display:inline-block;white-space:pre;transform:scaleX(0.843);transform-origin:0 0;margin-right:-0.1045em">K</span><span style="display:inline-block;white-space:pre;transform:scaleX(1.012);transform-origin:0 0;margin-right:0.0271em">onec</span></div>
<div class="btn" style="left:1269.5px;top:739px;width:66px;height:17px;line-height:17px;font-size:10.8px;"><span style="display:inline-block;white-space:pre;transform:scaleX(0.843);transform-origin:0 0;margin-right:-0.1218em">O</span><span style="display:inline-block;white-space:pre;transform:scaleX(1.012);transform-origin:0 0;margin-right:0.0229em">dlož</span></div>
<div class="btn" style="left:1269.5px;top:763px;width:66px;height:17px;line-height:17px;font-size:10.8px;"><span style="display:inline-block;white-space:pre;transform:scaleX(0.843);transform-origin:0 0;margin-right:-0.1131em">N</span><span style="display:inline-block;white-space:pre;transform:scaleX(1.012);transform-origin:0 0;margin-right:0.0480em">ápověda</span></div>
</body></html>
